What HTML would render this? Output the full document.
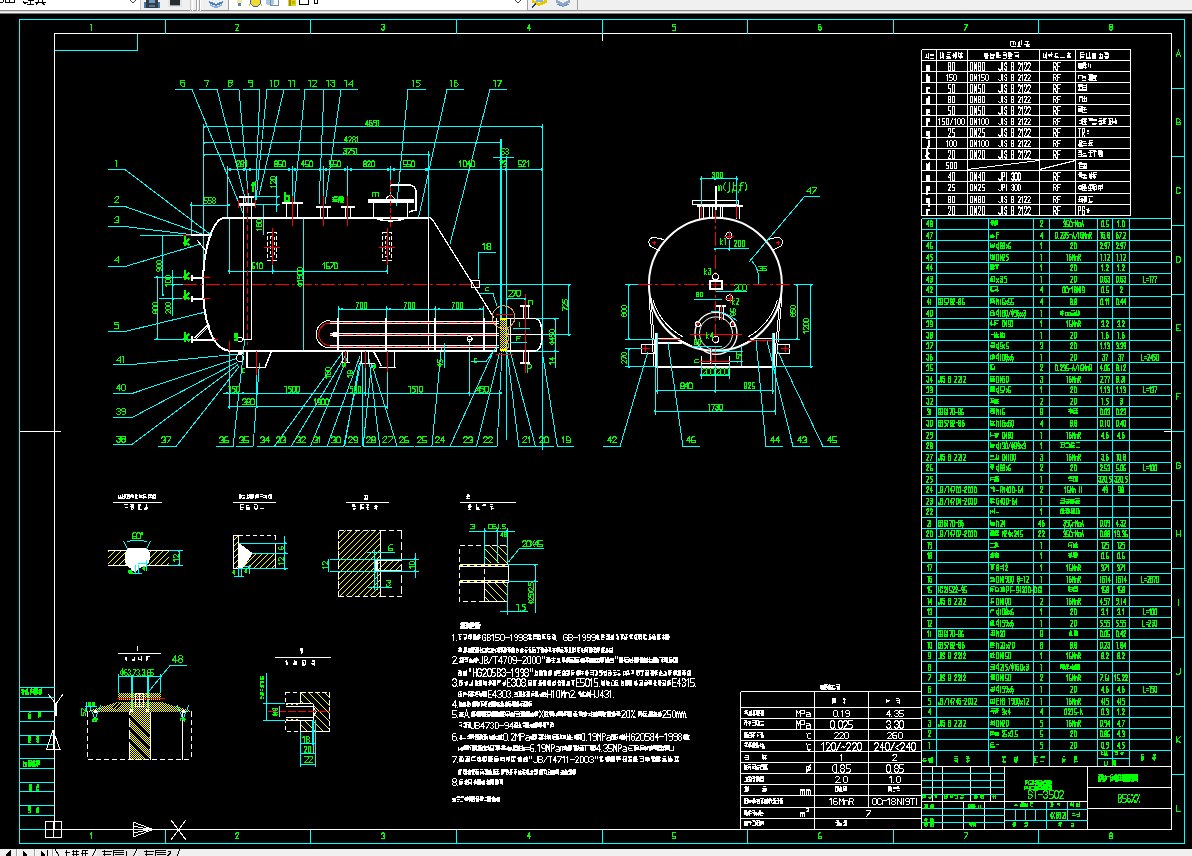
<!DOCTYPE html>
<html><head><meta charset="utf-8"><style>
html,body{margin:0;padding:0;background:#000;font-family:"Liberation Sans",sans-serif;width:1192px;height:856px;overflow:hidden}
svg{display:block}
</style></head><body>
<svg width="1192" height="856" viewBox="0 0 1192 856" shape-rendering="crispEdges" text-rendering="optimizeSpeed">
<defs><pattern id="h1" width="6" height="6" patternUnits="userSpaceOnUse"><rect x="0" y="5" width="1" height="1" fill="#ffff00"/><rect x="1" y="4" width="1" height="1" fill="#ffff00"/><rect x="2" y="3" width="1" height="1" fill="#ffff00"/><rect x="3" y="2" width="1" height="1" fill="#ffff00"/><rect x="4" y="1" width="1" height="1" fill="#ffff00"/><rect x="5" y="0" width="1" height="1" fill="#ffff00"/></pattern><pattern id="h2" width="8" height="8" patternUnits="userSpaceOnUse"><rect x="0" y="0" width="1" height="1" fill="#ffff00"/><rect x="1" y="1" width="1" height="1" fill="#ffff00"/><rect x="2" y="2" width="1" height="1" fill="#ffff00"/><rect x="3" y="3" width="1" height="1" fill="#ffff00"/><rect x="4" y="4" width="1" height="1" fill="#ffff00"/><rect x="5" y="5" width="1" height="1" fill="#ffff00"/><rect x="6" y="6" width="1" height="1" fill="#ffff00"/><rect x="7" y="7" width="1" height="1" fill="#ffff00"/></pattern><pattern id="h3" width="2" height="2" patternUnits="userSpaceOnUse"><rect x="0" y="0" width="1" height="1" fill="#ffff00"/><rect x="1" y="1" width="1" height="1" fill="#ffff00"/></pattern></defs>
<rect x="0" y="0" width="1192" height="856" fill="#000"/>
<rect x="0" y="0" width="1192" height="10" fill="#f0f0f0"/>
<rect x="0" y="0" width="140" height="10" fill="#ffffff"/>
<rect x="0" y="10" width="140" height="1" fill="#a0a0a0"/>
<rect x="0" y="10" width="1192" height="1" fill="#8c8c8c"/>
<rect x="0" y="11" width="1192" height="1" fill="#d8d8d8"/>
<rect x="0" y="12" width="1192" height="1" fill="#f4f4f4"/>
<rect x="0" y="13" width="1192" height="1" fill="#7a7a7a"/>
<path d="M0,2.5 h3 M3.5,0 v2 M5.5,0 v3 M5,2.5 h10 M9.5,0 v2 M14.5,0 v3 M23.5,1 v1 M23,2.5 h5 M24,4 l2,-1 M27,4.5 h7 M30.5,1 v3.5 M28,0 h6 M35,2.5 h11 M38.5,0 v2 M42.5,0 v2 M37.5,3 l-1.5,2 M42.5,3 l2,2" stroke="#000" stroke-width="1" fill="none"/>
<path d="M130,0 L133,3 L136,0" stroke="#404040" stroke-width="1" fill="none"/>
<rect x="140" y="0" width="1" height="10" fill="#c8c8c8"/>
<rect x="144" y="2" width="16" height="6" fill="#3d7ab8"/>
<rect x="146" y="0" width="12" height="5" fill="#3a3a3a"/>
<rect x="149" y="0" width="6" height="3" fill="#6a98c8"/>
<rect x="146" y="4" width="3" height="4" fill="#3a3a3a"/>
<rect x="155" y="4" width="3" height="4" fill="#3a3a3a"/>
<rect x="148" y="7" width="8" height="1" fill="#3a3a3a"/>
<rect x="168" y="0" width="14" height="7" fill="#dce4ec"/>
<rect x="170" y="0" width="10" height="5" fill="#2a2d30"/>
<rect x="170" y="5" width="10" height="1" fill="#90a0b0"/>
<rect x="190" y="0" width="1" height="11" fill="#c8c8c8"/>
<rect x="192" y="0" width="1" height="11" fill="#ffffff"/>
<rect x="196" y="0" width="1" height="11" fill="#a0a0a0"/>
<rect x="197" y="0" width="1" height="11" fill="#ffffff"/>
<rect x="199" y="0" width="1" height="11" fill="#a0a0a0"/>
<rect x="200" y="0" width="1" height="11" fill="#ffffff"/>
<path d="M209,2 L216,5 L223,2" stroke="#4a80c0" stroke-width="2" fill="none"/>
<path d="M210,5 L216,7.5 L222,5" stroke="#8ab0d8" stroke-width="1.5" fill="none"/>
<rect x="228" y="0" width="1" height="10" fill="#a0a0a0"/>
<rect x="229" y="0" width="298" height="10" fill="#ffffff"/>
<rect x="229" y="10" width="298" height="1" fill="#a0a0a0"/>
<rect x="237" y="0" width="5" height="3" fill="#f0e8a0"/>
<rect x="238" y="3" width="3" height="3" fill="#6080b0"/>
<circle cx="255.5" cy="1" r="5.5" fill="#f2d830" stroke="#2a6ab0" stroke-width="1"/>
<rect x="249" y="4" width="1" height="2" fill="#e0c000"/>
<rect x="261" y="4" width="1" height="2" fill="#e0c000"/>
<circle cx="270" cy="1" r="4.5" fill="#a8c8e0"/>
<rect x="270.5" y="-0.5" width="8" height="5.5" stroke="#7090b0" stroke-width="1" fill="none"/>
<rect x="288" y="0" width="8" height="6" fill="#e0d020"/>
<rect x="289" y="0" width="2" height="6" fill="#a09000"/>
<rect x="292" y="1" width="3" height="3" fill="#c0b000"/>
<rect x="299.5" y="-1" width="8.5" height="5.5" stroke="#000" stroke-width="1" fill="none"/>
<rect x="314.5" y="-1" width="3" height="4.5" stroke="#000" stroke-width="1" fill="none"/>
<path d="M515,0 L518,3 L521,0" stroke="#404040" stroke-width="1" fill="none"/>
<rect x="527" y="0" width="1" height="10" fill="#a0a0a0"/>
<path d="M532,1 L539,4.5 L547,1" stroke="#e8c800" stroke-width="3" fill="none"/>
<rect x="536" y="0" width="7" height="2" fill="#90b0d0"/>
<path d="M532,7.5 L536,3.5" stroke="#203070" stroke-width="1.5" fill="none"/>
<path d="M556,1 L563,4.5 L570,1" stroke="#90a8c8" stroke-width="2.5" fill="none"/>
<path d="M557,4 L563,6.5 L569,4" stroke="#7090b8" stroke-width="1" fill="none"/>
<rect x="577" y="0" width="1" height="11" fill="#a0a0a0"/>
<rect x="0" y="849" width="1192" height="7" fill="#f0f0f0"/>
<rect x="16" y="849" width="1" height="7" fill="#a0a0a0"/>
<rect x="17" y="849" width="1" height="7" fill="#ffffff"/>
<rect x="34" y="849" width="1" height="7" fill="#a0a0a0"/>
<rect x="35" y="849" width="1" height="7" fill="#ffffff"/>
<rect x="52" y="849" width="1" height="7" fill="#a0a0a0"/>
<rect x="53" y="849" width="1" height="7" fill="#ffffff"/>
<path d="M10,851 L6,855 L10,856 Z" stroke="#000" stroke-width="1" fill="#000"/>
<path d="M23,851 L27,855 L23,856 Z" stroke="#000" stroke-width="1" fill="#000"/>
<path d="M41,851 L45,855 L41,856 Z" stroke="#000" stroke-width="1" fill="#000"/>
<rect x="47" y="850" width="1" height="6" fill="#000"/>
<path d="M55,849 L59,856" stroke="#000" stroke-width="1" fill="none"/>
<path d="M64.5,852.5 h5 M66.5,850 v6 M71.5,851.5 h7 M73.5,850 v6 M76.5,850 v6 M71.5,854.5 h7 M81.5,850.5 h6 M82.5,850 v6 M85.5,850 v6 M80.5,853.5 h7" stroke="#000" stroke-width="1" fill="none"/>
<path d="M96,849 L92.5,856" stroke="#000" stroke-width="1" fill="none"/>
<rect x="97" y="849" width="37" height="7" fill="#e4e4e4"/>
<path d="M101.5,851.5 h10 M104.5,850 v6 M102.5,854.5 h8 M113.5,850.5 h10 M113.5,852.5 h10 M114.5,854.5 h9 M113.5,850 v6 M126.5,851 v5 M125.5,851.5 h1" stroke="#000" stroke-width="1" fill="none"/>
<path d="M137,849 L133.6,856" stroke="#000" stroke-width="1" fill="none"/>
<rect x="138" y="849" width="39" height="7" fill="#e4e4e4"/>
<path d="M143.5,851.5 h10 M146.5,850 v6 M144.5,854.5 h8 M155.5,850.5 h10 M155.5,852.5 h10 M156.5,854.5 h9 M155.5,850 v6 M167.5,851.5 h3 M170.5,851.5 v2 M167.5,856 l3,-3" stroke="#000" stroke-width="1" fill="none"/>
<path d="M180,849 L177,856" stroke="#000" stroke-width="1" fill="none"/>
<rect x="19.5" y="19.5" width="1165" height="824" stroke="#00ffff" stroke-width="1" fill="none"/>
<rect x="54.5" y="33.5" width="1117" height="796" stroke="#ffffff" stroke-width="1" fill="none"/>
<line x1="19.5" y1="431.5" x2="61" y2="431.5" stroke="#ffffff" stroke-width="1"/>
<line x1="602.5" y1="33" x2="602.5" y2="40.5" stroke="#ffffff" stroke-width="1"/>
<line x1="1164" y1="431.5" x2="1171" y2="431.5" stroke="#ffffff" stroke-width="1"/>
<polyline points="54.5,50.5 137.5,50.5 137.5,33.5" stroke="#00ffff" stroke-width="1" fill="none"/>
<line x1="165.5" y1="19.5" x2="165.5" y2="33.5" stroke="#00ffff" stroke-width="1"/>
<line x1="165.5" y1="829.5" x2="165.5" y2="843.5" stroke="#00ffff" stroke-width="1"/>
<line x1="310.5" y1="19.5" x2="310.5" y2="33.5" stroke="#00ffff" stroke-width="1"/>
<line x1="310.5" y1="829.5" x2="310.5" y2="843.5" stroke="#00ffff" stroke-width="1"/>
<line x1="456.5" y1="19.5" x2="456.5" y2="33.5" stroke="#00ffff" stroke-width="1"/>
<line x1="456.5" y1="829.5" x2="456.5" y2="843.5" stroke="#00ffff" stroke-width="1"/>
<line x1="602.5" y1="19.5" x2="602.5" y2="33.5" stroke="#00ffff" stroke-width="1"/>
<line x1="602.5" y1="829.5" x2="602.5" y2="843.5" stroke="#00ffff" stroke-width="1"/>
<line x1="747.5" y1="19.5" x2="747.5" y2="33.5" stroke="#00ffff" stroke-width="1"/>
<line x1="747.5" y1="829.5" x2="747.5" y2="843.5" stroke="#00ffff" stroke-width="1"/>
<line x1="893.5" y1="19.5" x2="893.5" y2="33.5" stroke="#00ffff" stroke-width="1"/>
<line x1="893.5" y1="829.5" x2="893.5" y2="843.5" stroke="#00ffff" stroke-width="1"/>
<line x1="1038.5" y1="19.5" x2="1038.5" y2="33.5" stroke="#00ffff" stroke-width="1"/>
<line x1="1038.5" y1="829.5" x2="1038.5" y2="843.5" stroke="#00ffff" stroke-width="1"/>
<path d="M90.5 24.5h1v6" stroke="#00ff00" fill="none" stroke-linecap="square"/>
<path d="M90.5 834.5l1-2v6" stroke="#00ff00" fill="none" stroke-linecap="square"/>
<path d="M235.5 24.5h1h2h0v2l-3 4h3" stroke="#00ff00" fill="none" stroke-linecap="square"/>
<path d="M235.5 834.5l1-2h2v2h0l-3 4h3" stroke="#00ff00" fill="none" stroke-linecap="square"/>
<path d="M381.5 24.5h1h1h1v2h-1h0M383.5 26.5l1 2h0l-1 2h-1l-1-2" stroke="#00ff00" fill="none" stroke-linecap="square"/>
<path d="M381.5 834.5l1-2h1l1 2h0l-1 2h0M383.5 836.5h1v2h-1h-1h-1" stroke="#00ff00" fill="none" stroke-linecap="square"/>
<path d="M529.5 30.5v-6l-2 4h3" stroke="#00ff00" fill="none" stroke-linecap="square"/>
<path d="M529.5 838.5v-6l-2 4h3" stroke="#00ff00" fill="none" stroke-linecap="square"/>
<path d="M675.5 24.5h-3v2h3v2h0v2h-3" stroke="#00ff00" fill="none" stroke-linecap="square"/>
<path d="M675.5 832.5h-3v4h3h0v2h0h-3" stroke="#00ff00" fill="none" stroke-linecap="square"/>
<path d="M820.5 24.5h-1h-1v4l1 2h1l1-2h0l-1-2h-2" stroke="#00ff00" fill="none" stroke-linecap="square"/>
<path d="M820.5 832.5h-1l-1 2v4h1h1h1v-2h-1h-2" stroke="#00ff00" fill="none" stroke-linecap="square"/>
<path d="M964.5 24.5h3h0l-3 6" stroke="#00ff00" fill="none" stroke-linecap="square"/>
<path d="M964.5 832.5h3v2l-3 4" stroke="#00ff00" fill="none" stroke-linecap="square"/>
<path d="M1110.5 24.5h1h1v2h-1h-1h-1v-2zM1110.5 26.5l-1 2h0l1 2h1l1-2h0l-1-2" stroke="#00ff00" fill="none" stroke-linecap="square"/>
<path d="M1110.5 832.5h1l1 2h0l-1 2h-1l-1-2h0zM1110.5 836.5h-1v2h1h1h1v-2h-1" stroke="#00ff00" fill="none" stroke-linecap="square"/>
<line x1="1171.5" y1="88.5" x2="1184.5" y2="88.5" stroke="#00ffff" stroke-width="1"/>
<line x1="1171.5" y1="156.5" x2="1184.5" y2="156.5" stroke="#00ffff" stroke-width="1"/>
<line x1="1171.5" y1="225.5" x2="1184.5" y2="225.5" stroke="#00ffff" stroke-width="1"/>
<line x1="1171.5" y1="294.5" x2="1184.5" y2="294.5" stroke="#00ffff" stroke-width="1"/>
<line x1="1171.5" y1="362.5" x2="1184.5" y2="362.5" stroke="#00ffff" stroke-width="1"/>
<line x1="1171.5" y1="431.5" x2="1184.5" y2="431.5" stroke="#00ffff" stroke-width="1"/>
<line x1="1171.5" y1="500.5" x2="1184.5" y2="500.5" stroke="#00ffff" stroke-width="1"/>
<line x1="1171.5" y1="568.5" x2="1184.5" y2="568.5" stroke="#00ffff" stroke-width="1"/>
<line x1="1171.5" y1="637.5" x2="1184.5" y2="637.5" stroke="#00ffff" stroke-width="1"/>
<line x1="1171.5" y1="706.5" x2="1184.5" y2="706.5" stroke="#00ffff" stroke-width="1"/>
<line x1="1171.5" y1="774.5" x2="1184.5" y2="774.5" stroke="#00ffff" stroke-width="1"/>
<path d="M1176.5 56.5l2-6l2 6M1176.5 54.5h2" stroke="#00ff00" fill="none" stroke-linecap="square"/>
<path d="M1176.5 122.5h2h2v2h-2h-2v-6h2l2 2h0l-2 2" stroke="#00ff00" fill="none" stroke-linecap="square"/>
<path d="M1180.5 188.5l-2-1h-2v1v4v1h2l2-1" stroke="#00ff00" fill="none" stroke-linecap="square"/>
<path d="M1176.5 256.5h2l2 1v4l-2 1h-2z" stroke="#00ff00" fill="none" stroke-linecap="square"/>
<path d="M1180.5 324.5h-4v6h4M1176.5 328.5h2" stroke="#00ff00" fill="none" stroke-linecap="square"/>
<path d="M1180.5 393.5h-4v6M1176.5 396.5h2" stroke="#00ff00" fill="none" stroke-linecap="square"/>
<path d="M1180.5 463.5l-2-1h-2v1v4v1h2l2-1v-2h-2" stroke="#00ff00" fill="none" stroke-linecap="square"/>
<path d="M1176.5 530.5v6M1180.5 530.5v6M1176.5 534.5h4" stroke="#00ff00" fill="none" stroke-linecap="square"/>
<path d="M1178.5 599.5v6" stroke="#00ff00" fill="none" stroke-linecap="square"/>
<path d="M1180.5 668.5v5l-2 1h-2v-1" stroke="#00ff00" fill="none" stroke-linecap="square"/>
<path d="M1176.5 736.5v6M1180.5 736.5l-4 4M1176.5 740.5l4 2" stroke="#00ff00" fill="none" stroke-linecap="square"/>
<path d="M1176.5 805.5v6h4" stroke="#00ff00" fill="none" stroke-linecap="square"/>
<line x1="921.5" y1="49.5" x2="1130.5" y2="49.5" stroke="#ffffff" stroke-width="1"/>
<line x1="921.5" y1="60.5" x2="1130.5" y2="60.5" stroke="#ffffff" stroke-width="1"/>
<line x1="921.5" y1="71.5" x2="1130.5" y2="71.5" stroke="#ffffff" stroke-width="1"/>
<line x1="921.5" y1="82.5" x2="1130.5" y2="82.5" stroke="#ffffff" stroke-width="1"/>
<line x1="921.5" y1="93.5" x2="1130.5" y2="93.5" stroke="#ffffff" stroke-width="1"/>
<line x1="921.5" y1="104.5" x2="1130.5" y2="104.5" stroke="#ffffff" stroke-width="1"/>
<line x1="921.5" y1="115.5" x2="1130.5" y2="115.5" stroke="#ffffff" stroke-width="1"/>
<line x1="921.5" y1="126.5" x2="1130.5" y2="126.5" stroke="#ffffff" stroke-width="1"/>
<line x1="921.5" y1="137.5" x2="1130.5" y2="137.5" stroke="#ffffff" stroke-width="1"/>
<line x1="921.5" y1="148.5" x2="1130.5" y2="148.5" stroke="#ffffff" stroke-width="1"/>
<line x1="921.5" y1="159.5" x2="1130.5" y2="159.5" stroke="#ffffff" stroke-width="1"/>
<line x1="921.5" y1="170.5" x2="1130.5" y2="170.5" stroke="#ffffff" stroke-width="1"/>
<line x1="921.5" y1="181.5" x2="1130.5" y2="181.5" stroke="#ffffff" stroke-width="1"/>
<line x1="921.5" y1="193.5" x2="1130.5" y2="193.5" stroke="#ffffff" stroke-width="1"/>
<line x1="921.5" y1="204.5" x2="1130.5" y2="204.5" stroke="#ffffff" stroke-width="1"/>
<line x1="921.5" y1="215.5" x2="1130.5" y2="215.5" stroke="#ffffff" stroke-width="1"/>
<line x1="921.5" y1="49.5" x2="921.5" y2="215.5" stroke="#ffffff" stroke-width="1"/>
<line x1="936.5" y1="49.5" x2="936.5" y2="215.5" stroke="#ffffff" stroke-width="1"/>
<line x1="967.5" y1="49.5" x2="967.5" y2="215.5" stroke="#ffffff" stroke-width="1"/>
<line x1="1039.5" y1="49.5" x2="1039.5" y2="215.5" stroke="#ffffff" stroke-width="1"/>
<line x1="1075.5" y1="49.5" x2="1075.5" y2="215.5" stroke="#ffffff" stroke-width="1"/>
<line x1="1130.5" y1="49.5" x2="1130.5" y2="215.5" stroke="#ffffff" stroke-width="1"/>
<path d="M1010.5 41.5h4M1011.5 46.5h4M1010.5 41.5v4M1013.5 42.5v2M1015.5 42.5v2M1017.5 46.5h3M1018.5 42.5v4M1019.5 41.5v4M1021.5 40.5v4M1025.5 41.5h3M1024.5 44.5h5M1026.5 45.5h2M1026.5 46.5h3M1027.5 42.5v2" stroke="#ffffff" fill="none" stroke-linecap="square"/>
<path d="M925.5 57.5h3M926.5 54.5v3M928.5 53.5v5M930.5 54.5h3M930.5 55.5h3M930.5 58.5h3" stroke="#ffffff" fill="none" stroke-linecap="square"/>
<path d="M940.5 57.5h3M940.5 52.5v6M942.5 52.5v5M943.5 53.5v5M947.5 52.5h3M947.5 54.5h2M946.5 56.5h3M947.5 57.5h3M946.5 58.5h4M953.5 54.5h3M952.5 55.5h3M953.5 56.5h3M953.5 53.5v4M955.5 52.5v6M956.5 52.5v5M958.5 53.5h4M959.5 56.5h3M959.5 57.5h3M958.5 52.5v4M960.5 53.5v5M961.5 52.5v4" stroke="#ffffff" fill="none" stroke-linecap="square"/>
<path d="M984.5 53.5h3M985.5 54.5h2M984.5 55.5h4M985.5 56.5h2M985.5 57.5h2M985.5 58.5h2M984.5 54.5v2M990.5 54.5h4M991.5 55.5h3M990.5 57.5h3M991.5 58.5h2M990.5 53.5v5M993.5 54.5v2M997.5 55.5h3M996.5 57.5h4M996.5 52.5v5M997.5 52.5v4M998.5 52.5v5M1003.5 52.5h2M1003.5 54.5h3M1003.5 55.5h2M1003.5 58.5h2M1006.5 53.5v4M1008.5 54.5h4M1008.5 58.5h3M1008.5 52.5v4M1009.5 52.5v5M1010.5 52.5v4M1011.5 53.5v3M1014.5 52.5h4M1015.5 55.5h3M1015.5 56.5h3M1018.5 54.5v3" stroke="#ffffff" fill="none" stroke-linecap="square"/>
<path d="M1043.5 57.5h3M1043.5 53.5v4M1045.5 54.5v2M1046.5 52.5v6M1048.5 54.5h4M1048.5 55.5h3M1049.5 54.5v2M1051.5 52.5v4M1055.5 53.5h2M1054.5 56.5h3M1055.5 57.5h3M1055.5 53.5v4M1060.5 57.5h4M1067.5 53.5h3M1067.5 55.5h2M1067.5 56.5h3M1067.5 57.5h3M1068.5 52.5v5M1069.5 54.5v3" stroke="#ffffff" fill="none" stroke-linecap="square"/>
<path d="M1080.5 52.5h3M1081.5 54.5h3M1081.5 56.5h2M1081.5 57.5h2M1080.5 52.5v6M1087.5 57.5h3M1087.5 58.5h3M1086.5 53.5v5M1089.5 52.5v6M1093.5 53.5h2M1092.5 54.5h3M1093.5 55.5h2M1093.5 56.5h2M1093.5 57.5h2M1093.5 58.5h2M1092.5 53.5v5M1093.5 54.5v4M1099.5 54.5h3M1099.5 57.5h2M1099.5 58.5h2M1100.5 53.5v3M1102.5 54.5v4M1104.5 52.5h3M1105.5 53.5h3M1105.5 54.5h2M1104.5 56.5h3M1105.5 57.5h2M1105.5 58.5h2M1108.5 53.5v4" stroke="#ffffff" fill="none" stroke-linecap="square"/>
<path d="M926.5 65.5h2v1v4M928.5 67.5h-2v1v2h2" stroke="#ffffff" stroke-width="2" fill="none" stroke-linecap="square"/>
<path d="M948.5 62.5h2v2v1v1h-2v-1v-1zM948.5 66.5v1v1v2h2v-2v-1v-1M952.5 62.5h2v2v4v2h-2v-2v-4z" stroke="#ffffff" fill="none" stroke-linecap="square"/>
<path d="M970.5 62.5h2v2v4v2h-2zM974.5 70.5v-8l2 8v-8M978.5 62.5h2v2v1v1h-2v-1v-1zM978.5 66.5v1v1v2h2v-2v-1v-1M982.5 62.5h2v2v4v2h-2v-2v-4z" stroke="#ffffff" fill="none" stroke-linecap="square"/>
<path d="M1001.5 62.5v6l-1 2h-1l-1-2M1002.5 62.5v8M1006.5 64.5v-2h-1l-1 2v1l1 1h1v1v1v2h-1l-1-2M1011.5 66.5h2v1v1v2h-2v-8h2v2v1v1M1018.5 64.5v-2h1l1 2v1l-2 5h2M1021.5 64.5l1-2v8M1024.5 64.5v-2h2v2v1l-2 5h2M1027.5 64.5l1-2h1l1 2v1l-3 5h3" stroke="#ffffff" fill="none" stroke-linecap="square"/>
<path d="M1053.5 70.5v-8h2l1 2v1l-1 1h-2M1054.5 66.5l2 4M1060.5 62.5h-3v8M1057.5 66.5h2" stroke="#ffffff" fill="none" stroke-linecap="square"/>
<path d="M1079.5 63.5h3M1079.5 64.5h2M1079.5 65.5h2M1079.5 66.5h3M1079.5 67.5h2M1079.5 68.5h3M1078.5 63.5v4M1081.5 64.5v2M1083.5 62.5h2M1082.5 63.5h3M1082.5 64.5h4M1083.5 65.5h2M1083.5 67.5h3M1082.5 63.5v4M1083.5 64.5v3M1085.5 64.5v4M1088.5 63.5v3M1090.5 64.5v3" stroke="#ffffff" fill="none" stroke-linecap="square"/>
<path d="M926.5 74.5v6h2v-1v-2v-1h-2" stroke="#ffffff" stroke-width="2" fill="none" stroke-linecap="square"/>
<path d="M946.5 75.5l1-1v6M952.5 74.5h-3v3h2l1 1v1l-1 1h-2M954.5 74.5h1l1 1v4l-1 1h-1l-1-1v-4z" stroke="#ffffff" fill="none" stroke-linecap="square"/>
<path d="M970.5 74.5h2v1v4v1h-2zM974.5 80.5v-6l2 6v-6M978.5 75.5l1-1v6M984.5 74.5h-3v3h2l1 1v1l-1 1h-2M986.5 74.5h1l1 1v4l-1 1h-1l-1-1v-4z" stroke="#ffffff" fill="none" stroke-linecap="square"/>
<path d="M1001.5 74.5v5l-1 1h-1l-1-1M1002.5 74.5v6M1006.5 75.5v-1h-1l-1 1v1l1 1h1v1v1v1h-1l-1-1M1011.5 77.5h2v1v1v1h-2v-6h2v1v1v1M1018.5 75.5v-1h1l1 1v1l-2 4h2M1021.5 75.5l1-1v6M1024.5 75.5v-1h2v1v1l-2 4h2M1027.5 75.5l1-1h1l1 1v1l-3 4h3" stroke="#ffffff" fill="none" stroke-linecap="square"/>
<path d="M1053.5 80.5v-6h2l1 1v1l-1 1h-2M1054.5 77.5l2 3M1060.5 74.5h-3v6M1057.5 77.5h2" stroke="#ffffff" fill="none" stroke-linecap="square"/>
<path d="M1078.5 75.5h3M1078.5 76.5v2M1082.5 75.5v3M1082.5 76.5h3M1083.5 77.5h2M1082.5 80.5h3M1085.5 76.5v2M1088.5 74.5h4M1088.5 79.5h3M1089.5 80.5h3M1089.5 74.5v5M1090.5 74.5v4M1091.5 75.5v4M1092.5 75.5h4M1093.5 76.5h3M1093.5 77.5h2M1093.5 78.5h2M1092.5 80.5h4M1092.5 76.5v3M1095.5 76.5v3" stroke="#ffffff" fill="none" stroke-linecap="square"/>
<path d="M928.5 87.5h-2v1v2v2h2" stroke="#ffffff" stroke-width="2" fill="none" stroke-linecap="square"/>
<path d="M950.5 84.5h-2v4h2v1v1v2h-2M952.5 84.5h2v2v4v2h-2v-2v-4z" stroke="#ffffff" fill="none" stroke-linecap="square"/>
<path d="M970.5 84.5h2v2v4v2h-2zM974.5 92.5v-8l2 8v-8M980.5 84.5h-2v4h2v1v1v2h-2M982.5 84.5h2v2v4v2h-2v-2v-4z" stroke="#ffffff" fill="none" stroke-linecap="square"/>
<path d="M1001.5 84.5v6l-1 2h-1l-1-2M1002.5 84.5v8M1006.5 86.5v-2h-1l-1 2v1l1 1h1v1v1v2h-1l-1-2M1011.5 88.5h2v1v1v2h-2v-8h2v2v1v1M1018.5 86.5v-2h1l1 2v1l-2 5h2M1021.5 86.5l1-2v8M1024.5 86.5v-2h2v2v1l-2 5h2M1027.5 86.5l1-2h1l1 2v1l-3 5h3" stroke="#ffffff" fill="none" stroke-linecap="square"/>
<path d="M1053.5 92.5v-8h2l1 2v1l-1 1h-2M1054.5 88.5l2 4M1060.5 84.5h-3v8M1057.5 88.5h2" stroke="#ffffff" fill="none" stroke-linecap="square"/>
<path d="M1078.5 84.5h4M1078.5 85.5h4M1078.5 86.5h4M1078.5 89.5h4M1078.5 90.5h4M1079.5 84.5v6M1082.5 85.5h4M1083.5 87.5h3M1083.5 89.5h2M1082.5 90.5h4M1082.5 85.5v4M1086.5 84.5v5" stroke="#ffffff" fill="none" stroke-linecap="square"/>
<path d="M928.5 96.5v6h-2v-1v-2v-1h2" stroke="#ffffff" stroke-width="2" fill="none" stroke-linecap="square"/>
<path d="M948.5 96.5h2v1v1v1h-2v-1v-1zM948.5 99.5v1v1v1h2v-1v-1v-1M952.5 96.5h2v1v4v1h-2v-1v-4z" stroke="#ffffff" fill="none" stroke-linecap="square"/>
<path d="M970.5 96.5h2v1v4v1h-2zM974.5 102.5v-6l2 6v-6M978.5 96.5h2v1v1v1h-2v-1v-1zM978.5 99.5v1v1v1h2v-1v-1v-1M982.5 96.5h2v1v4v1h-2v-1v-4z" stroke="#ffffff" fill="none" stroke-linecap="square"/>
<path d="M1001.5 96.5v5l-1 1h-1l-1-1M1002.5 96.5v6M1006.5 97.5v-1h-1l-1 1v1l1 1h1v1v1v1h-1l-1-1M1011.5 99.5h2v1v1v1h-2v-6h2v1v1v1M1018.5 97.5v-1h1l1 1v1l-2 4h2M1021.5 97.5l1-1v6M1024.5 97.5v-1h2v1v1l-2 4h2M1027.5 97.5l1-1h1l1 1v1l-3 4h3" stroke="#ffffff" fill="none" stroke-linecap="square"/>
<path d="M1053.5 102.5v-6h2l1 1v1l-1 1h-2M1054.5 99.5l2 3M1060.5 96.5h-3v6M1057.5 99.5h2" stroke="#ffffff" fill="none" stroke-linecap="square"/>
<path d="M1079.5 96.5h2M1079.5 97.5h3M1079.5 97.5v4M1082.5 98.5v2M1082.5 98.5h4M1083.5 101.5h3M1082.5 96.5v5M1084.5 96.5v5M1086.5 97.5v3" stroke="#ffffff" fill="none" stroke-linecap="square"/>
<path d="M926.5 111.5h2v-1v-1h-2v1v2v2h2" stroke="#ffffff" stroke-width="2" fill="none" stroke-linecap="square"/>
<path d="M950.5 106.5h-2v4h2v1v1v2h-2M952.5 106.5h2v2v4v2h-2v-2v-4z" stroke="#ffffff" fill="none" stroke-linecap="square"/>
<path d="M970.5 106.5h2v2v4v2h-2zM974.5 114.5v-8l2 8v-8M980.5 106.5h-2v4h2v1v1v2h-2M982.5 106.5h2v2v4v2h-2v-2v-4z" stroke="#ffffff" fill="none" stroke-linecap="square"/>
<path d="M1001.5 106.5v6l-1 2h-1l-1-2M1002.5 106.5v8M1006.5 108.5v-2h-1l-1 2v1l1 1h1v1v1v2h-1l-1-2M1011.5 110.5h2v1v1v2h-2v-8h2v2v1v1M1018.5 108.5v-2h1l1 2v1l-2 5h2M1021.5 108.5l1-2v8M1024.5 108.5v-2h2v2v1l-2 5h2M1027.5 108.5l1-2h1l1 2v1l-3 5h3" stroke="#ffffff" fill="none" stroke-linecap="square"/>
<path d="M1053.5 114.5v-8h2l1 2v1l-1 1h-2M1054.5 110.5l2 4M1060.5 106.5h-3v8M1057.5 110.5h2" stroke="#ffffff" fill="none" stroke-linecap="square"/>
<path d="M1078.5 106.5h3M1079.5 108.5h3M1078.5 109.5h4M1079.5 110.5h3M1078.5 111.5h3M1078.5 108.5v2M1081.5 106.5v5M1083.5 107.5h2M1083.5 109.5h3M1082.5 112.5h4M1082.5 106.5v6M1084.5 107.5v3" stroke="#ffffff" fill="none" stroke-linecap="square"/>
<path d="M928.5 118.5h-1l-1 1v5M926.5 120.5h2" stroke="#ffffff" stroke-width="2" fill="none" stroke-linecap="square"/>
<path d="M938.5 119.5l1-1v6M944.5 118.5h-2v3h2v1v1v1h-2M946.5 118.5h2v1v4v1h-2v-1v-4zM950.5 124.5l2-6M954.5 119.5l1-1v6M958.5 118.5h1l1 1v4l-1 1h-1l-1-1v-4zM962.5 118.5h1l1 1v4l-1 1h-1l-1-1v-4z" stroke="#ffffff" fill="none" stroke-linecap="square"/>
<path d="M970.5 118.5h2v1v4v1h-2zM974.5 124.5v-6l2 6v-6M978.5 119.5l1-1v6M982.5 118.5h1l1 1v4l-1 1h-1l-1-1v-4zM986.5 118.5h1l1 1v4l-1 1h-1l-1-1v-4z" stroke="#ffffff" fill="none" stroke-linecap="square"/>
<path d="M1001.5 118.5v5l-1 1h-1l-1-1M1002.5 118.5v6M1006.5 119.5v-1h-1l-1 1v1l1 1h1v1v1v1h-1l-1-1M1011.5 121.5h2v1v1v1h-2v-6h2v1v1v1M1018.5 119.5v-1h1l1 1v1l-2 4h2M1021.5 119.5l1-1v6M1024.5 119.5v-1h2v1v1l-2 4h2M1027.5 119.5l1-1h1l1 1v1l-3 4h3" stroke="#ffffff" fill="none" stroke-linecap="square"/>
<path d="M1053.5 124.5v-6h2l1 1v1l-1 1h-2M1054.5 121.5l2 3M1060.5 118.5h-3v6M1057.5 121.5h2" stroke="#ffffff" fill="none" stroke-linecap="square"/>
<path d="M1079.5 120.5h3M1079.5 123.5h3M1081.5 119.5v4M1082.5 119.5v4M1083.5 118.5h3M1083.5 119.5h3M1082.5 121.5h4M1083.5 124.5h3M1082.5 118.5v6M1084.5 119.5v3M1085.5 119.5v5M1088.5 118.5h4M1089.5 119.5h2M1089.5 120.5h3M1092.5 119.5h4M1093.5 120.5h3M1092.5 123.5h4M1092.5 124.5h3M1099.5 118.5h2M1099.5 120.5h3M1098.5 121.5h3M1099.5 123.5h3M1099.5 124.5h2M1101.5 120.5v3M1103.5 118.5h3M1103.5 119.5h2M1103.5 121.5h2M1103.5 123.5h2M1103.5 119.5v3M1104.5 118.5v4M1108.5 118.5h4M1109.5 121.5h2M1108.5 124.5h3M1109.5 118.5v6M1110.5 120.5v4M1112.5 119.5v4M1112.5 121.5h3M1113.5 122.5h3M1115.5 118.5v5M1116.5 120.5v3" stroke="#ffffff" fill="none" stroke-linecap="square"/>
<path d="M928.5 131.5h-2v1v1v1h2M928.5 131.5v6h-2" stroke="#ffffff" stroke-width="2" fill="none" stroke-linecap="square"/>
<path d="M948.5 130.5v-2h2v2v1l-2 5h2M954.5 128.5h-2v4h2v1v1v2h-2" stroke="#ffffff" fill="none" stroke-linecap="square"/>
<path d="M970.5 128.5h2v2v4v2h-2zM974.5 136.5v-8l2 8v-8M978.5 130.5v-2h2v2v1l-2 5h2M984.5 128.5h-2v4h2v1v1v2h-2" stroke="#ffffff" fill="none" stroke-linecap="square"/>
<path d="M1001.5 128.5v6l-1 2h-1l-1-2M1002.5 128.5v8M1006.5 130.5v-2h-1l-1 2v1l1 1h1v1v1v2h-1l-1-2M1011.5 132.5h2v1v1v2h-2v-8h2v2v1v1M1018.5 130.5v-2h1l1 2v1l-2 5h2M1021.5 130.5l1-2v8M1024.5 130.5v-2h2v2v1l-2 5h2M1027.5 130.5l1-2h1l1 2v1l-3 5h3" stroke="#ffffff" fill="none" stroke-linecap="square"/>
<path d="M1053.5 136.5v-8h2l1 2v1l-1 1h-2M1054.5 132.5l2 4M1060.5 128.5h-3v8M1057.5 132.5h2" stroke="#ffffff" fill="none" stroke-linecap="square"/>
<path d="M1078.5 128.5h2M1079.5 128.5v8M1082.5 136.5v-8h2v2v1v1h-2M1083.5 132.5l1 4" stroke="#ffffff" fill="none" stroke-linecap="square"/>
<path d="M1087.5 130.5h1M1087.5 131.5h1M1087.5 133.5h1" stroke="#ffffff" fill="none" stroke-linecap="square"/>
<path d="M928.5 142.5v4l-1 2h-1M928.5 140.5v1" stroke="#ffffff" stroke-width="2" fill="none" stroke-linecap="square"/>
<path d="M946.5 141.5l1-1v6M950.5 140.5h1l1 1v4l-1 1h-1l-1-1v-4zM954.5 140.5h1l1 1v4l-1 1h-1l-1-1v-4z" stroke="#ffffff" fill="none" stroke-linecap="square"/>
<path d="M970.5 140.5h2v1v4v1h-2zM974.5 146.5v-6l2 6v-6M978.5 141.5l1-1v6M982.5 140.5h1l1 1v4l-1 1h-1l-1-1v-4zM986.5 140.5h1l1 1v4l-1 1h-1l-1-1v-4z" stroke="#ffffff" fill="none" stroke-linecap="square"/>
<path d="M1001.5 140.5v5l-1 1h-1l-1-1M1002.5 140.5v6M1006.5 141.5v-1h-1l-1 1v1l1 1h1v1v1v1h-1l-1-1M1011.5 143.5h2v1v1v1h-2v-6h2v1v1v1M1018.5 141.5v-1h1l1 1v1l-2 4h2M1021.5 141.5l1-1v6M1024.5 141.5v-1h2v1v1l-2 4h2M1027.5 141.5l1-1h1l1 1v1l-3 4h3" stroke="#ffffff" fill="none" stroke-linecap="square"/>
<path d="M1053.5 146.5v-6h2l1 1v1l-1 1h-2M1054.5 143.5l2 3M1060.5 140.5h-3v6M1057.5 143.5h2" stroke="#ffffff" fill="none" stroke-linecap="square"/>
<path d="M1079.5 140.5h2M1079.5 142.5h3M1078.5 144.5h3M1078.5 145.5h4M1079.5 146.5h3M1079.5 141.5v5M1080.5 142.5v2M1081.5 141.5v5M1082.5 141.5h3M1083.5 143.5h3M1082.5 145.5h4M1089.5 140.5h3M1089.5 142.5h3M1088.5 143.5h3M1088.5 145.5h4M1089.5 140.5v4M1091.5 142.5v3" stroke="#ffffff" fill="none" stroke-linecap="square"/>
<path d="M926.5 150.5v8M928.5 153.5l-2 3M926.5 155.5l2 3" stroke="#ffffff" stroke-width="2" fill="none" stroke-linecap="square"/>
<path d="M948.5 152.5v-2h2v2v1l-2 5h2M952.5 150.5h2v2v4v2h-2v-2v-4z" stroke="#ffffff" fill="none" stroke-linecap="square"/>
<path d="M970.5 150.5h2v2v4v2h-2zM974.5 158.5v-8l2 8v-8M978.5 152.5v-2h2v2v1l-2 5h2M982.5 150.5h2v2v4v2h-2v-2v-4z" stroke="#ffffff" fill="none" stroke-linecap="square"/>
<path d="M1001.5 150.5v6l-1 2h-1l-1-2M1002.5 150.5v8M1006.5 152.5v-2h-1l-1 2v1l1 1h1v1v1v2h-1l-1-2M1011.5 154.5h2v1v1v2h-2v-8h2v2v1v1M1018.5 152.5v-2h1l1 2v1l-2 5h2M1021.5 152.5l1-2v8M1024.5 152.5v-2h2v2v1l-2 5h2M1027.5 152.5l1-2h1l1 2v1l-3 5h3" stroke="#ffffff" fill="none" stroke-linecap="square"/>
<path d="M1053.5 158.5v-8h2l1 2v1l-1 1h-2M1054.5 154.5l2 4M1060.5 150.5h-3v8M1057.5 154.5h2" stroke="#ffffff" fill="none" stroke-linecap="square"/>
<path d="M1078.5 150.5h3M1079.5 151.5h2M1078.5 152.5h3M1078.5 154.5h4M1078.5 156.5h4M1081.5 150.5v5M1083.5 153.5h2M1083.5 155.5h3M1083.5 156.5h3M1089.5 150.5h3M1088.5 152.5h4M1089.5 156.5h2M1090.5 150.5v5M1092.5 150.5h3M1093.5 151.5h3M1094.5 151.5v5M1098.5 150.5h3M1098.5 151.5h4M1098.5 152.5h4M1098.5 153.5h4M1098.5 154.5h4M1099.5 156.5h2M1099.5 151.5v4M1101.5 150.5v6M1102.5 152.5v4" stroke="#ffffff" fill="none" stroke-linecap="square"/>
<path d="M926.5 168.5v-4M926.5 165.5v-1l1 1v3M927.5 165.5l1-1v1v3" stroke="#ffffff" stroke-width="2" fill="none" stroke-linecap="square"/>
<path d="M948.5 162.5h-2v3h2v1v1v1h-2M950.5 162.5h2v1v4v1h-2v-1v-4zM954.5 162.5h2v1v4v1h-2v-1v-4z" stroke="#ffffff" fill="none" stroke-linecap="square"/>
<path d="M1079.5 162.5h2M1078.5 163.5h4M1079.5 164.5h3M1079.5 166.5h2M1079.5 168.5h3M1079.5 163.5v4M1082.5 163.5h3M1082.5 164.5h4M1082.5 166.5h3M1083.5 167.5h3M1083.5 168.5h2M1084.5 164.5v3M1086.5 163.5v5" stroke="#ffffff" fill="none" stroke-linecap="square"/>
<line x1="967.5" y1="169.5" x2="1039.5" y2="160.5" stroke="#ffffff" stroke-width="1"/>
<line x1="1039.5" y1="169.5" x2="1075.5" y2="160.5" stroke="#ffffff" stroke-width="1"/>
<path d="M926.5 180.5v-5M926.5 176.5v-1h2v1v4" stroke="#ffffff" stroke-width="2" fill="none" stroke-linecap="square"/>
<path d="M950.5 180.5v-8l-2 5h2M952.5 172.5h2v2v4v2h-2v-2v-4z" stroke="#ffffff" fill="none" stroke-linecap="square"/>
<path d="M970.5 172.5h2v2v4v2h-2zM974.5 180.5v-8l2 8v-8M980.5 180.5v-8l-2 5h2M982.5 172.5h2v2v4v2h-2v-2v-4z" stroke="#ffffff" fill="none" stroke-linecap="square"/>
<path d="M1001.5 172.5v6l-1 2h-1l-1-2M1002.5 180.5v-8h2v2v1v1h-2M1006.5 172.5v8M1011.5 174.5l1-2h1v2v1v1h-1M1013.5 176.5v1v1v2h-1l-1-2M1015.5 172.5h1l1 2v4l-1 2h-1l-1-2v-4zM1018.5 172.5h1l1 2v4l-1 2h-1v-2v-4z" stroke="#ffffff" fill="none" stroke-linecap="square"/>
<path d="M1053.5 180.5v-8h2l1 2v1l-1 1h-2M1054.5 176.5l2 4M1060.5 172.5h-3v8M1057.5 176.5h2" stroke="#ffffff" fill="none" stroke-linecap="square"/>
<path d="M1078.5 174.5h3M1079.5 175.5h3M1079.5 172.5v4M1080.5 172.5v4M1081.5 172.5v5M1082.5 174.5h3M1082.5 175.5h4M1082.5 177.5h4M1083.5 178.5h3M1084.5 174.5v2M1089.5 176.5h3M1089.5 173.5v4M1090.5 174.5v4M1091.5 172.5v6M1093.5 172.5h3M1092.5 174.5h4M1093.5 176.5h2M1093.5 177.5h2M1093.5 173.5v3M1094.5 174.5v4" stroke="#ffffff" fill="none" stroke-linecap="square"/>
<path d="M926.5 193.5v-7h2v1v1v1h-2" stroke="#ffffff" stroke-width="2" fill="none" stroke-linecap="square"/>
<path d="M948.5 185.5v-1h2v1v1l-2 4h2M954.5 184.5h-2v3h2v1v1v1h-2" stroke="#ffffff" fill="none" stroke-linecap="square"/>
<path d="M970.5 184.5h2v1v4v1h-2zM974.5 190.5v-6l2 6v-6M978.5 185.5v-1h2v1v1l-2 4h2M984.5 184.5h-2v3h2v1v1v1h-2" stroke="#ffffff" fill="none" stroke-linecap="square"/>
<path d="M1001.5 184.5v5l-1 1h-1l-1-1M1002.5 190.5v-6h2v1v1v1h-2M1006.5 184.5v6M1011.5 185.5l1-1h1v1v1v1h-1M1013.5 187.5v1v1v1h-1l-1-1M1015.5 184.5h1l1 1v4l-1 1h-1l-1-1v-4zM1018.5 184.5h1l1 1v4l-1 1h-1v-1v-4z" stroke="#ffffff" fill="none" stroke-linecap="square"/>
<path d="M1053.5 190.5v-6h2l1 1v1l-1 1h-2M1054.5 187.5l2 3M1060.5 184.5h-3v6M1057.5 187.5h2" stroke="#ffffff" fill="none" stroke-linecap="square"/>
<path d="M1079.5 185.5h2M1078.5 186.5h4M1078.5 188.5h4M1079.5 189.5h3M1078.5 186.5v2M1081.5 185.5v3M1083.5 184.5h2M1083.5 186.5h2M1083.5 187.5h3M1082.5 188.5h4M1082.5 190.5h4M1082.5 184.5v6M1084.5 185.5v5M1085.5 184.5v4M1089.5 184.5h3M1089.5 185.5h2M1089.5 188.5h3M1088.5 190.5h3M1088.5 186.5v2M1090.5 185.5v4M1093.5 184.5h2M1092.5 186.5h4M1093.5 189.5h3M1092.5 185.5v3M1093.5 185.5v4M1094.5 186.5v4M1096.5 185.5v3M1098.5 185.5h3M1098.5 186.5h4M1099.5 188.5h2M1098.5 186.5v3M1100.5 185.5v5M1102.5 184.5v4" stroke="#ffffff" fill="none" stroke-linecap="square"/>
<path d="M928.5 205.5v-7h-2v1v1v1h2" stroke="#ffffff" stroke-width="2" fill="none" stroke-linecap="square"/>
<path d="M948.5 196.5h2v1v1v1h-2v-1v-1zM948.5 199.5v1v1v1h2v-1v-1v-1M952.5 196.5h2v1v4v1h-2v-1v-4z" stroke="#ffffff" fill="none" stroke-linecap="square"/>
<path d="M970.5 196.5h2v1v4v1h-2zM974.5 202.5v-6l2 6v-6M978.5 196.5h2v1v1v1h-2v-1v-1zM978.5 199.5v1v1v1h2v-1v-1v-1M982.5 196.5h2v1v4v1h-2v-1v-4z" stroke="#ffffff" fill="none" stroke-linecap="square"/>
<path d="M1001.5 196.5v5l-1 1h-1l-1-1M1002.5 196.5v6M1006.5 197.5v-1h-1l-1 1v1l1 1h1v1v1v1h-1l-1-1M1011.5 199.5h2v1v1v1h-2v-6h2v1v1v1M1018.5 197.5v-1h1l1 1v1l-2 4h2M1021.5 197.5l1-1v6M1024.5 197.5v-1h2v1v1l-2 4h2M1027.5 197.5l1-1h1l1 1v1l-3 4h3" stroke="#ffffff" fill="none" stroke-linecap="square"/>
<path d="M1053.5 202.5v-6h2l1 1v1l-1 1h-2M1054.5 199.5l2 3M1060.5 196.5h-3v6M1057.5 199.5h2" stroke="#ffffff" fill="none" stroke-linecap="square"/>
<path d="M1079.5 196.5h3M1078.5 199.5h4M1078.5 201.5h3M1079.5 197.5v3M1081.5 198.5v2M1082.5 198.5v3M1083.5 196.5h3M1082.5 199.5h4M1082.5 200.5h4M1082.5 198.5v4M1084.5 197.5v5M1085.5 197.5v4M1086.5 196.5v5M1088.5 196.5h4M1089.5 201.5h3M1088.5 202.5h3M1089.5 198.5v2" stroke="#ffffff" fill="none" stroke-linecap="square"/>
<path d="M926.5 214.5v-5M926.5 210.5v-1h2" stroke="#ffffff" stroke-width="2" fill="none" stroke-linecap="square"/>
<path d="M948.5 208.5v-2h2v2v1l-2 5h2M952.5 206.5h2v2v4v2h-2v-2v-4z" stroke="#ffffff" fill="none" stroke-linecap="square"/>
<path d="M970.5 206.5h2v2v4v2h-2zM974.5 214.5v-8l2 8v-8M978.5 208.5v-2h2v2v1l-2 5h2M982.5 206.5h2v2v4v2h-2v-2v-4z" stroke="#ffffff" fill="none" stroke-linecap="square"/>
<path d="M1001.5 206.5v6l-1 2h-1l-1-2M1002.5 206.5v8M1006.5 208.5v-2h-1l-1 2v1l1 1h1v1v1v2h-1l-1-2M1011.5 210.5h2v1v1v2h-2v-8h2v2v1v1M1018.5 208.5v-2h1l1 2v1l-2 5h2M1021.5 208.5l1-2v8M1024.5 208.5v-2h2v2v1l-2 5h2M1027.5 208.5l1-2h1l1 2v1l-3 5h3" stroke="#ffffff" fill="none" stroke-linecap="square"/>
<path d="M1053.5 214.5v-8h2l1 2v1l-1 1h-2M1054.5 210.5l2 4M1060.5 206.5h-3v8M1057.5 210.5h2" stroke="#ffffff" fill="none" stroke-linecap="square"/>
<path d="M1078.5 214.5v-8h2v2v1v1h-2M1084.5 208.5v-2h-2v2v4v2h2v-2v-2h-1" stroke="#ffffff" fill="none" stroke-linecap="square"/>
<path d="M1086.5 209.5h2M1087.5 210.5h2M1087.5 212.5h1M1087.5 209.5v2M1088.5 208.5v4" stroke="#ffffff" fill="none" stroke-linecap="square"/>
<line x1="921.5" y1="218.5" x2="1171.5" y2="218.5" stroke="#00ffff" stroke-width="1"/>
<line x1="921.5" y1="229.5" x2="1171.5" y2="229.5" stroke="#00ffff" stroke-width="1"/>
<line x1="921.5" y1="240.5" x2="1171.5" y2="240.5" stroke="#00ffff" stroke-width="1"/>
<line x1="921.5" y1="251.5" x2="1171.5" y2="251.5" stroke="#00ffff" stroke-width="1"/>
<line x1="921.5" y1="262.5" x2="1171.5" y2="262.5" stroke="#00ffff" stroke-width="1"/>
<line x1="921.5" y1="273.5" x2="1171.5" y2="273.5" stroke="#00ffff" stroke-width="1"/>
<line x1="921.5" y1="284.5" x2="1171.5" y2="284.5" stroke="#00ffff" stroke-width="1"/>
<line x1="921.5" y1="296.5" x2="1171.5" y2="296.5" stroke="#00ffff" stroke-width="1"/>
<line x1="921.5" y1="307.5" x2="1171.5" y2="307.5" stroke="#00ffff" stroke-width="1"/>
<line x1="921.5" y1="318.5" x2="1171.5" y2="318.5" stroke="#00ffff" stroke-width="1"/>
<line x1="921.5" y1="329.5" x2="1171.5" y2="329.5" stroke="#00ffff" stroke-width="1"/>
<line x1="921.5" y1="340.5" x2="1171.5" y2="340.5" stroke="#00ffff" stroke-width="1"/>
<line x1="921.5" y1="351.5" x2="1171.5" y2="351.5" stroke="#00ffff" stroke-width="1"/>
<line x1="921.5" y1="362.5" x2="1171.5" y2="362.5" stroke="#00ffff" stroke-width="1"/>
<line x1="921.5" y1="373.5" x2="1171.5" y2="373.5" stroke="#00ffff" stroke-width="1"/>
<line x1="921.5" y1="384.5" x2="1171.5" y2="384.5" stroke="#00ffff" stroke-width="1"/>
<line x1="921.5" y1="395.5" x2="1171.5" y2="395.5" stroke="#00ffff" stroke-width="1"/>
<line x1="921.5" y1="406.5" x2="1171.5" y2="406.5" stroke="#00ffff" stroke-width="1"/>
<line x1="921.5" y1="417.5" x2="1171.5" y2="417.5" stroke="#00ffff" stroke-width="1"/>
<line x1="921.5" y1="429.5" x2="1171.5" y2="429.5" stroke="#00ffff" stroke-width="1"/>
<line x1="921.5" y1="440.5" x2="1171.5" y2="440.5" stroke="#00ffff" stroke-width="1"/>
<line x1="921.5" y1="451.5" x2="1171.5" y2="451.5" stroke="#00ffff" stroke-width="1"/>
<line x1="921.5" y1="462.5" x2="1171.5" y2="462.5" stroke="#00ffff" stroke-width="1"/>
<line x1="921.5" y1="473.5" x2="1171.5" y2="473.5" stroke="#00ffff" stroke-width="1"/>
<line x1="921.5" y1="484.5" x2="1171.5" y2="484.5" stroke="#00ffff" stroke-width="1"/>
<line x1="921.5" y1="495.5" x2="1171.5" y2="495.5" stroke="#00ffff" stroke-width="1"/>
<line x1="921.5" y1="506.5" x2="1171.5" y2="506.5" stroke="#00ffff" stroke-width="1"/>
<line x1="921.5" y1="517.5" x2="1171.5" y2="517.5" stroke="#00ffff" stroke-width="1"/>
<line x1="921.5" y1="528.5" x2="1171.5" y2="528.5" stroke="#00ffff" stroke-width="1"/>
<line x1="921.5" y1="539.5" x2="1171.5" y2="539.5" stroke="#00ffff" stroke-width="1"/>
<line x1="921.5" y1="550.5" x2="1171.5" y2="550.5" stroke="#00ffff" stroke-width="1"/>
<line x1="921.5" y1="562.5" x2="1171.5" y2="562.5" stroke="#00ffff" stroke-width="1"/>
<line x1="921.5" y1="573.5" x2="1171.5" y2="573.5" stroke="#00ffff" stroke-width="1"/>
<line x1="921.5" y1="584.5" x2="1171.5" y2="584.5" stroke="#00ffff" stroke-width="1"/>
<line x1="921.5" y1="595.5" x2="1171.5" y2="595.5" stroke="#00ffff" stroke-width="1"/>
<line x1="921.5" y1="606.5" x2="1171.5" y2="606.5" stroke="#00ffff" stroke-width="1"/>
<line x1="921.5" y1="617.5" x2="1171.5" y2="617.5" stroke="#00ffff" stroke-width="1"/>
<line x1="921.5" y1="628.5" x2="1171.5" y2="628.5" stroke="#00ffff" stroke-width="1"/>
<line x1="921.5" y1="639.5" x2="1171.5" y2="639.5" stroke="#00ffff" stroke-width="1"/>
<line x1="921.5" y1="650.5" x2="1171.5" y2="650.5" stroke="#00ffff" stroke-width="1"/>
<line x1="921.5" y1="661.5" x2="1171.5" y2="661.5" stroke="#00ffff" stroke-width="1"/>
<line x1="921.5" y1="672.5" x2="1171.5" y2="672.5" stroke="#00ffff" stroke-width="1"/>
<line x1="921.5" y1="683.5" x2="1171.5" y2="683.5" stroke="#00ffff" stroke-width="1"/>
<line x1="921.5" y1="695.5" x2="1171.5" y2="695.5" stroke="#00ffff" stroke-width="1"/>
<line x1="921.5" y1="706.5" x2="1171.5" y2="706.5" stroke="#00ffff" stroke-width="1"/>
<line x1="921.5" y1="717.5" x2="1171.5" y2="717.5" stroke="#00ffff" stroke-width="1"/>
<line x1="921.5" y1="728.5" x2="1171.5" y2="728.5" stroke="#00ffff" stroke-width="1"/>
<line x1="921.5" y1="739.5" x2="1171.5" y2="739.5" stroke="#00ffff" stroke-width="1"/>
<line x1="921.5" y1="750.5" x2="1171.5" y2="750.5" stroke="#00ffff" stroke-width="1"/>
<line x1="936.5" y1="218.5" x2="936.5" y2="766.5" stroke="#00ffff" stroke-width="1"/>
<line x1="988.5" y1="218.5" x2="988.5" y2="766.5" stroke="#00ffff" stroke-width="1"/>
<line x1="1033.5" y1="218.5" x2="1033.5" y2="766.5" stroke="#00ffff" stroke-width="1"/>
<line x1="1049.5" y1="218.5" x2="1049.5" y2="766.5" stroke="#00ffff" stroke-width="1"/>
<line x1="1097.5" y1="218.5" x2="1097.5" y2="766.5" stroke="#00ffff" stroke-width="1"/>
<line x1="1112.5" y1="218.5" x2="1112.5" y2="766.5" stroke="#00ffff" stroke-width="1"/>
<line x1="1129.5" y1="218.5" x2="1129.5" y2="766.5" stroke="#00ffff" stroke-width="1"/>
<line x1="921.5" y1="218.5" x2="921.5" y2="766.5" stroke="#ffffff" stroke-width="1"/>
<line x1="1097.5" y1="758.5" x2="1129.5" y2="758.5" stroke="#00ffff" stroke-width="1"/>
<path d="M928.5 226.5v-6l-2 4h2M930.5 220.5h1l1 2h0l-1 2h-1v-2h0zM930.5 224.5h0v2h0h1h1v-2h-1" stroke="#00ff00" fill="none" stroke-linecap="square"/>
<path d="M991.5 220.5h2M991.5 221.5h2M990.5 222.5h4M991.5 223.5h2M991.5 222.5v2M992.5 222.5v3M994.5 221.5v4M995.5 220.5h2M995.5 222.5h2M994.5 223.5h3M994.5 224.5h3M995.5 220.5v5M996.5 221.5v3M997.5 220.5v4" stroke="#00ff00" fill="none" stroke-linecap="square"/>
<path d="M1040.5 222.5v-2h2v2h0l-2 4h2" stroke="#00ff00" fill="none" stroke-linecap="square"/>
<path d="M1063.5 222.5l1-2h0l1 2h0l-1 2h0M1064.5 224.5h1v2h-1h0h-1M1068.5 220.5h-2v4h2h0v2h0h-2M1071.5 222.5l-1-2h0l-1 2v4h1h0h1M1072.5 226.5v-4M1072.5 224.5v-2h2M1075.5 226.5v-6l1 4l1-4v6M1078.5 222.5h2v2v2h0h-2h0v-2zM1081.5 226.5l1-6l1 6M1082.5 224.5h0" stroke="#00ff00" fill="none" stroke-linecap="square"/>
<path d="M1102.5 220.5h1v2v4h0h-1h-1v-4zM1104.5 226.5h0M1108.5 220.5h-2v4h1h1v2h-1h-1" stroke="#00ff00" fill="none" stroke-linecap="square"/>
<path d="M1117.5 222.5l1-2v6M1120.5 226.5h0M1122.5 220.5h1l1 2v4h-1h-1h0v-4z" stroke="#00ff00" fill="none" stroke-linecap="square"/>
<path d="M928.5 238.5v-6l-2 4h2M930.5 232.5h2h0l-2 6" stroke="#00ff00" fill="none" stroke-linecap="square"/>
<path d="M990.5 235.5h3M990.5 236.5h4M990.5 237.5h3M992.5 234.5v3" stroke="#00ff00" fill="none" stroke-linecap="square"/>
<path d="M998.5 232.5h-2v6M996.5 234.5h2" stroke="#00ff00" fill="none" stroke-linecap="square"/>
<path d="M1042.5 238.5v-6l-2 4h2" stroke="#00ff00" fill="none" stroke-linecap="square"/>
<path d="M1055.5 232.5h1h1v4l-1 2h-1v-2v-4zM1058.5 238.5h0M1060.5 232.5h0h1h1v2l-2 4h2M1063.5 232.5h0h1h1v2h-1h0M1064.5 234.5l1 2h0l-1 2h-1v-2M1068.5 232.5h-2v2h1l1 2h0l-1 2h-1M1069.5 234.5h2M1072.5 238.5l1-6l1 6M1072.5 236.5h1M1075.5 238.5l2-6M1078.5 232.5h0v6M1082.5 232.5h-1h-1v4l1 2h1v-2h0v-2h-2M1083.5 238.5v-6l1 2l1-2v6M1086.5 238.5v-4M1086.5 234.5h1h1h0v4M1089.5 238.5v-6h2h0v2h0h-2M1090.5 234.5l1 4" stroke="#00ff00" fill="none" stroke-linecap="square"/>
<path d="M1100.5 232.5h1v6M1104.5 232.5h-1h-1v4l1 2h1v-2h0v-2h-2M1105.5 238.5h0M1108.5 232.5h1h0v2h0h-1h-1v-2zM1108.5 234.5l-1 2h0l1 2h1v-2h0v-2" stroke="#00ff00" fill="none" stroke-linecap="square"/>
<path d="M1117.5 232.5h-1h0v4v2h1l1-2h0l-1-2h-1M1119.5 232.5h2h0l-2 6M1122.5 238.5h0M1123.5 232.5h1h1h0v2l-2 4h2" stroke="#00ff00" fill="none" stroke-linecap="square"/>
<path d="M928.5 248.5v-6l-2 4h2M931.5 242.5h-1v2v4h0h1h1v-2h-1h-1" stroke="#00ff00" fill="none" stroke-linecap="square"/>
<path d="M991.5 245.5h3M991.5 246.5h3M990.5 247.5h3M990.5 243.5v4M992.5 244.5v3M994.5 243.5v3" stroke="#00ff00" fill="none" stroke-linecap="square"/>
<path d="M997.5 244.5h1h0v2v2h-1l-1-2v-2zM998.5 242.5v7M1000.5 242.5h1l1 2h0l-1 2h-1v-2h0zM1000.5 246.5h0v2h0h1h1v-2h-1M1004.5 246.5h-1l-1-2h0l1-2h1v2v4h0h-1M1006.5 244.5l2 4M1008.5 244.5l-2 4M1010.5 242.5h-1l-1 2v4h1h1h0v-2h0h-2" stroke="#00ff00" fill="none" stroke-linecap="square"/>
<path d="M1040.5 244.5l1-2v6" stroke="#00ff00" fill="none" stroke-linecap="square"/>
<path d="M1070.5 244.5l1-2h1v2h0l-2 4h2M1074.5 242.5h1l1 2v4h-1h-1h0v-4z" stroke="#00ff00" fill="none" stroke-linecap="square"/>
<path d="M1100.5 244.5v-2h1l1 2h0l-2 4h2M1103.5 248.5h0M1106.5 246.5h-1l-1-2h0l1-2h1v2v4h0h-1M1107.5 242.5h2v2l-1 4" stroke="#00ff00" fill="none" stroke-linecap="square"/>
<path d="M1116.5 244.5v-2h1l1 2h0l-2 4h2M1119.5 248.5h0M1122.5 246.5h-1l-1-2h0l1-2h1v2v4h0h-1M1123.5 242.5h2v2l-1 4" stroke="#00ff00" fill="none" stroke-linecap="square"/>
<path d="M928.5 260.5v-6l-2 4h2M932.5 254.5h-2v2h1l1 2h0l-1 2h-1" stroke="#00ff00" fill="none" stroke-linecap="square"/>
<path d="M991.5 255.5h2M991.5 259.5h3M990.5 254.5v4M992.5 254.5v5M993.5 255.5v3M994.5 254.5v4" stroke="#00ff00" fill="none" stroke-linecap="square"/>
<path d="M996.5 254.5h2h0v4v2h-2zM1000.5 260.5v-6l2 6v-6M1002.5 254.5h1h1h0v2l-2 4h2M1008.5 254.5h-2v2h1l1 2h0l-1 2h-1" stroke="#00ff00" fill="none" stroke-linecap="square"/>
<path d="M1040.5 254.5h1v6" stroke="#00ff00" fill="none" stroke-linecap="square"/>
<path d="M1066.5 254.5h1v6M1070.5 254.5h-1h0v4v2h1l1-2h0l-1-2h-1M1072.5 260.5v-6l1 2l1-2v6M1075.5 260.5v-4M1075.5 256.5h0h1h1v4M1078.5 260.5v-6h1h1v2h-1h-1M1079.5 256.5l1 4" stroke="#00ff00" fill="none" stroke-linecap="square"/>
<path d="M1100.5 254.5h1v6M1103.5 260.5h0M1104.5 254.5h1v6M1107.5 254.5h0h1h1v2l-2 4h2" stroke="#00ff00" fill="none" stroke-linecap="square"/>
<path d="M1116.5 254.5h1v6M1119.5 260.5h0M1120.5 254.5h1v6M1123.5 254.5h0h1h1v2l-2 4h2" stroke="#00ff00" fill="none" stroke-linecap="square"/>
<path d="M928.5 270.5v-6l-2 4h2M931.5 270.5v-6l-1 4h2" stroke="#00ff00" fill="none" stroke-linecap="square"/>
<path d="M991.5 264.5h2M990.5 265.5h4M990.5 266.5h4M990.5 267.5h3M991.5 268.5h3M990.5 269.5h3M990.5 264.5v5M995.5 264.5h3M995.5 265.5h3M996.5 265.5v3M997.5 265.5v3" stroke="#00ff00" fill="none" stroke-linecap="square"/>
<path d="M1040.5 266.5l1-2v6" stroke="#00ff00" fill="none" stroke-linecap="square"/>
<path d="M1070.5 266.5l1-2h1v2h0l-2 4h2M1074.5 264.5h1l1 2v4h-1h-1h0v-4z" stroke="#00ff00" fill="none" stroke-linecap="square"/>
<path d="M1101.5 266.5l1-2v6M1104.5 270.5h0M1106.5 266.5v-2h1l1 2h0l-2 4h2" stroke="#00ff00" fill="none" stroke-linecap="square"/>
<path d="M1117.5 266.5l1-2v6M1120.5 270.5h0M1122.5 266.5v-2h1l1 2h0l-2 4h2" stroke="#00ff00" fill="none" stroke-linecap="square"/>
<path d="M928.5 282.5v-6l-2 4h2M930.5 276.5h0h1h1v2h-1h-1M931.5 278.5l1 2h0l-1 2h-1v-2" stroke="#00ff00" fill="none" stroke-linecap="square"/>
<path d="M991.5 276.5h3M990.5 281.5h4M990.5 278.5v2M991.5 276.5v4M992.5 278.5v2M994.5 277.5v4" stroke="#00ff00" fill="none" stroke-linecap="square"/>
<path d="M996.5 278.5l2 4M998.5 278.5l-2 4M1000.5 276.5h0h1h1v2h-1h-1M1001.5 278.5l1 2h0l-1 2h-1v-2M1002.5 282.5h0M1006.5 276.5h-2v2h2v2h0v2h-2" stroke="#00ff00" fill="none" stroke-linecap="square"/>
<path d="M1040.5 276.5h1v6" stroke="#00ff00" fill="none" stroke-linecap="square"/>
<path d="M1070.5 276.5h1h1h0v2l-2 4h2M1074.5 276.5h1h1v4l-1 2h-1v-2v-4z" stroke="#00ff00" fill="none" stroke-linecap="square"/>
<path d="M1100.5 276.5h1h1v4l-1 2h-1v-2v-4zM1103.5 282.5h0M1106.5 276.5h-1h-1v4l1 2h1v-2h0v-2h-2M1107.5 276.5h1h1h0v2h0h-1M1109.5 278.5v2h0v2h-1l-1-2" stroke="#00ff00" fill="none" stroke-linecap="square"/>
<path d="M1116.5 276.5h1h1v4l-1 2h-1v-2v-4zM1119.5 282.5h0M1122.5 276.5h-1h-1v4l1 2h1v-2h0v-2h-2M1123.5 276.5h1h1h0v2h0h-1M1125.5 278.5v2h0v2h-1l-1-2" stroke="#00ff00" fill="none" stroke-linecap="square"/>
<path d="M1143.5 276.5v6h2M1146.5 278.5h2M1146.5 280.5h2M1149.5 276.5h1v6M1151.5 276.5h2h0l-1 6M1154.5 276.5h2h0l-1 6" stroke="#00ff00" fill="none" stroke-linecap="square"/>
<path d="M928.5 292.5v-6l-2 4h2M930.5 288.5v-2h1l1 2h0l-2 4h2" stroke="#00ff00" fill="none" stroke-linecap="square"/>
<path d="M991.5 286.5h2M991.5 290.5h3M991.5 291.5h2M990.5 286.5v4M991.5 287.5v4M994.5 286.5h3M995.5 289.5h2M995.5 290.5h3M997.5 286.5v5" stroke="#00ff00" fill="none" stroke-linecap="square"/>
<path d="M1042.5 292.5v-6l-2 4h2" stroke="#00ff00" fill="none" stroke-linecap="square"/>
<path d="M1063.5 286.5h1v2v4h0h-1h-1v-4zM1067.5 288.5v-2h-1l-1 2v4h1h1h0M1068.5 292.5v-4M1068.5 290.5l1-2h1M1071.5 288.5l1-2v6M1074.5 286.5h1l1 2h0l-1 2h-1v-2h0zM1074.5 290.5h0v2h0h1h1v-2h-1M1077.5 292.5v-6l2 6v-6M1080.5 288.5v4M1080.5 286.5v2M1084.5 290.5h-2v-2h0v-2h1l1 2v4h-1h-1" stroke="#00ff00" fill="none" stroke-linecap="square"/>
<path d="M1102.5 286.5h1v2v4h0h-1h-1v-4zM1104.5 292.5h0M1108.5 286.5h-2v4h1h1v2h-1h-1" stroke="#00ff00" fill="none" stroke-linecap="square"/>
<path d="M1120.5 288.5v-2h1l1 2h0l-2 4h2" stroke="#00ff00" fill="none" stroke-linecap="square"/>
<path d="M928.5 304.5v-6l-1 4h2M930.5 300.5v-2v6" stroke="#00ff00" fill="none" stroke-linecap="square"/>
<path d="M940.5 300.5l-1-2h-1v2v4h0h1h1v-2h-2M940.5 302.5h2h0v2h0h-2v-6h2v2h0v2M946.5 298.5h-2v4h1h1v2h-1h-1M946.5 298.5h2v2l-1 4M950.5 298.5h1l1 2h0l-1 2h-1v-2h0zM950.5 302.5h0v2h0h1h1v-2h-1M952.5 300.5l1-2h1v2h0l-2 4h2M956.5 302.5h2M959.5 298.5h1v2h0v2h-1l-1-2h0zM959.5 302.5h-1v2h1h1h0v-2h0M963.5 298.5h-1v2v4h0h1h1v-2h-1h-1" stroke="#00ff00" fill="none" stroke-linecap="square"/>
<path d="M990.5 298.5h4M990.5 299.5h3M991.5 301.5h3M991.5 302.5h3M990.5 298.5v5M991.5 300.5v2M993.5 299.5v3M994.5 300.5v3" stroke="#00ff00" fill="none" stroke-linecap="square"/>
<path d="M996.5 304.5v-6l2 4v-4v6M1000.5 300.5v-2v6M1004.5 298.5h-2v2v4h0h2h0v-2h0h-2M1005.5 300.5l2 4M1007.5 300.5l-2 4M1010.5 298.5h-2v4h2h0v2h0h-2M1013.5 298.5h-2v4h1h1v2h-1h-1" stroke="#00ff00" fill="none" stroke-linecap="square"/>
<path d="M1042.5 304.5v-6l-2 4h2" stroke="#00ff00" fill="none" stroke-linecap="square"/>
<path d="M1070.5 298.5h1l1 2h0l-1 2h-1v-2h0zM1070.5 302.5h0v2h0h1h1v-2h-1M1073.5 304.5h0M1075.5 298.5h1v2h0v2h-1l-1-2h0zM1075.5 302.5h-1v2h1h1h0v-2h0" stroke="#00ff00" fill="none" stroke-linecap="square"/>
<path d="M1101.5 298.5h1v2v4h0h-1h-1v-4zM1103.5 304.5h0M1105.5 300.5l1-2v6M1107.5 300.5l1-2v6" stroke="#00ff00" fill="none" stroke-linecap="square"/>
<path d="M1116.5 298.5h1l1 2v4h-1h-1h0v-4zM1119.5 304.5h0M1122.5 304.5v-6l-2 4h2M1125.5 304.5v-6l-2 4h2" stroke="#00ff00" fill="none" stroke-linecap="square"/>
<path d="M928.5 316.5v-6l-2 4h2M930.5 310.5h1h1v4l-1 2h-1v-2v-4z" stroke="#00ff00" fill="none" stroke-linecap="square"/>
<path d="M991.5 310.5h2M990.5 312.5h4M990.5 315.5h3M990.5 311.5v3M993.5 310.5v5M994.5 312.5v3" stroke="#00ff00" fill="none" stroke-linecap="square"/>
<path d="M997.5 310.5h1v2v2h0h-1h-1v-2zM998.5 309.5v7M1000.5 310.5h0v6M1002.5 310.5h2h0v2h0h-2h0v-2zM1002.5 312.5v2h0v2h2v-2h0v-2M1006.5 310.5h0h1v4l-1 2h0l-1-2v-4zM1008.5 316.5l2-6M1012.5 310.5h0l1 2v2h-1h0h-1v-2zM1012.5 309.5v7M1016.5 312.5h-2h0v-2h0h2h0v4v2h-2M1018.5 310.5h0h-1v4l1 2h0l1-2h0l-1-2h-1M1020.5 312.5l2 4M1022.5 312.5l-2 4M1023.5 310.5h1h0h1v2h-1h0M1024.5 312.5l1 2h0l-1 2h0l-1-2" stroke="#00ff00" fill="none" stroke-linecap="square"/>
<path d="M1040.5 310.5h1v6" stroke="#00ff00" fill="none" stroke-linecap="square"/>
<path d="M1060.5 311.5h3M1060.5 313.5h3M1060.5 311.5v3M1061.5 312.5v2M1062.5 310.5v5M1066.5 312.5h3M1065.5 315.5h4M1065.5 312.5v2M1067.5 312.5v2M1068.5 312.5v2M1071.5 310.5h3M1070.5 313.5h4M1070.5 314.5h3M1071.5 315.5h2M1070.5 312.5v3M1074.5 312.5v3M1075.5 314.5h4M1076.5 315.5h2M1075.5 312.5v3M1076.5 310.5v4M1078.5 310.5v5M1079.5 311.5v3" stroke="#00ff00" fill="none" stroke-linecap="square"/>
<path d="M926.5 322.5l1-2h1v2h0v2h0M928.5 324.5h0v2h0h-1h-1M932.5 324.5h-2v-2h0v-2h1l1 2v4h-1h-1" stroke="#00ff00" fill="none" stroke-linecap="square"/>
<path d="M990.5 324.5h4M990.5 322.5v2M991.5 320.5v5M994.5 320.5v4M994.5 320.5h4M994.5 323.5h3M994.5 320.5v5M995.5 322.5v2" stroke="#00ff00" fill="none" stroke-linecap="square"/>
<path d="M1002.5 320.5h1l1 2v4h-1h-1zM1004.5 326.5v-6l2 6v-6M1010.5 320.5h-2v4h1h1v2h-1h-1M1011.5 320.5h1v2v4h0h-1h-1v-4z" stroke="#00ff00" fill="none" stroke-linecap="square"/>
<path d="M1040.5 322.5l1-2v6" stroke="#00ff00" fill="none" stroke-linecap="square"/>
<path d="M1066.5 322.5l1-2v6M1070.5 320.5h-1v2v4h0h1h1v-2h-1h-1M1072.5 326.5v-6l1 4l1-4v6M1075.5 326.5v-4M1075.5 324.5v-2h1l1 2v2M1078.5 326.5v-6h1l1 2h0l-1 2h-1M1079.5 324.5l1 2" stroke="#00ff00" fill="none" stroke-linecap="square"/>
<path d="M1101.5 322.5l1-2h1v2h0v2h-1M1103.5 324.5h0v2h0h-1h-1M1104.5 326.5h0M1106.5 322.5v-2h1l1 2h0l-2 4h2" stroke="#00ff00" fill="none" stroke-linecap="square"/>
<path d="M1117.5 322.5l1-2h1v2h0v2h-1M1119.5 324.5h0v2h0h-1h-1M1120.5 326.5h0M1122.5 322.5v-2h1l1 2h0l-2 4h2" stroke="#00ff00" fill="none" stroke-linecap="square"/>
<path d="M926.5 332.5h1h1h0v2h0h0M928.5 334.5v2h0v2h-1l-1-2M930.5 332.5h1h1v2h-1h-1h0v-2zM930.5 334.5v2h0v2h1l1-2h0l-1-2" stroke="#00ff00" fill="none" stroke-linecap="square"/>
<path d="M991.5 334.5h2M994.5 334.5v2M994.5 334.5h4M995.5 336.5h3M995.5 337.5h3M994.5 332.5v5M995.5 334.5v3M996.5 332.5v4M997.5 334.5v2M1001.5 333.5h3M1000.5 336.5h3M1000.5 337.5h4M1000.5 332.5v4M1001.5 334.5v3M1002.5 332.5v5M1004.5 333.5v3" stroke="#00ff00" fill="none" stroke-linecap="square"/>
<path d="M1040.5 332.5h1v6" stroke="#00ff00" fill="none" stroke-linecap="square"/>
<path d="M1070.5 332.5h1h1h0v2l-2 4h2M1074.5 332.5h1h1v4l-1 2h-1v-2v-4z" stroke="#00ff00" fill="none" stroke-linecap="square"/>
<path d="M1101.5 332.5h1v6M1104.5 338.5h0M1107.5 332.5h-1h0v4v2h1l1-2h0l-1-2h-1" stroke="#00ff00" fill="none" stroke-linecap="square"/>
<path d="M1117.5 332.5h1v6M1120.5 338.5h0M1123.5 332.5h-1h0v4v2h1l1-2h0l-1-2h-1" stroke="#00ff00" fill="none" stroke-linecap="square"/>
<path d="M926.5 344.5l1-2h1v2h0v2h0M928.5 346.5h0v2h0h-1h-1M930.5 342.5h2v2l-2 4" stroke="#00ff00" fill="none" stroke-linecap="square"/>
<path d="M991.5 342.5h3M991.5 343.5h2M990.5 345.5h3M990.5 346.5h4M991.5 347.5h2M994.5 342.5v5" stroke="#00ff00" fill="none" stroke-linecap="square"/>
<path d="M997.5 344.5h1h0v2v2h-1l-1-2v-2zM998.5 342.5v7M1002.5 342.5h-2v4h1h1v2h-1h-1M1002.5 344.5l2 4M1004.5 344.5l-2 4M1008.5 342.5h-2v4h1h1v2h-1h-1" stroke="#00ff00" fill="none" stroke-linecap="square"/>
<path d="M1040.5 344.5v-2h2v2h0v2h-1M1042.5 346.5h0v2h0h-2h0" stroke="#00ff00" fill="none" stroke-linecap="square"/>
<path d="M1070.5 344.5l1-2h1v2h0l-2 4h2M1074.5 342.5h1l1 2v4h-1h-1h0v-4z" stroke="#00ff00" fill="none" stroke-linecap="square"/>
<path d="M1100.5 344.5l1-2v6M1103.5 348.5h0M1104.5 344.5l1-2v6M1107.5 344.5v-2h1l1 2h0l-1 2h0M1108.5 346.5h1v2h-1h-1h0" stroke="#00ff00" fill="none" stroke-linecap="square"/>
<path d="M1116.5 344.5v-2h1l1 2h0l-1 2h0M1117.5 346.5h1v2h-1h-1h0M1119.5 348.5h0M1120.5 344.5l1-2h1v2h0v2h-1M1122.5 346.5h0v2h0h-1h-1M1125.5 346.5h-1l-1-2h0l1-2h1v2v4h0h-1" stroke="#00ff00" fill="none" stroke-linecap="square"/>
<path d="M926.5 354.5h1h1h0v2h0h0M928.5 356.5v2h0v2h-1l-1-2M931.5 354.5h-1h0v4v2h1l1-2h0l-1-2h-1" stroke="#00ff00" fill="none" stroke-linecap="square"/>
<path d="M990.5 355.5h4M991.5 358.5h2M990.5 355.5v4M992.5 354.5v5M993.5 354.5v4M994.5 356.5v2" stroke="#00ff00" fill="none" stroke-linecap="square"/>
<path d="M997.5 354.5h1v2v2h0h-1h-1v-2zM998.5 353.5v7M1000.5 354.5h0v6M1002.5 354.5h2h0v4v2h-2v-2v-4zM1006.5 354.5h0h1v2h-1h0h-1v-2zM1006.5 356.5l-1 2h0l1 2h0l1-2h0l-1-2M1008.5 356.5l2 4M1010.5 356.5l-2 4M1012.5 354.5h0h-1v4l1 2h0l1-2h0l-1-2h-1" stroke="#00ff00" fill="none" stroke-linecap="square"/>
<path d="M1040.5 354.5h1v6" stroke="#00ff00" fill="none" stroke-linecap="square"/>
<path d="M1070.5 354.5h1h1h0v2l-2 4h2M1074.5 354.5h1h1v4l-1 2h-1v-2v-4z" stroke="#00ff00" fill="none" stroke-linecap="square"/>
<path d="M1102.5 354.5h0h2h0v2h0h-1M1104.5 356.5v2h0v2h-2v-2M1105.5 354.5h2h0l-1 6" stroke="#00ff00" fill="none" stroke-linecap="square"/>
<path d="M1118.5 354.5h0h2h0v2h0h-1M1120.5 356.5v2h0v2h-2v-2M1121.5 354.5h2h0l-1 6" stroke="#00ff00" fill="none" stroke-linecap="square"/>
<path d="M1141.5 354.5v6h2M1144.5 356.5h2M1144.5 358.5h2M1147.5 354.5h1h0h1v2l-2 4h2M1152.5 360.5v-6l-2 4h2M1155.5 354.5h-2v2h1l1 2h0l-1 2h-1M1156.5 354.5h2h0v4v2h-2v-2v-4z" stroke="#00ff00" fill="none" stroke-linecap="square"/>
<path d="M926.5 366.5l1-2h1v2h0v2h0M928.5 368.5h0v2h0h-1h-1M932.5 364.5h-2v4h1h1v2h-1h-1" stroke="#00ff00" fill="none" stroke-linecap="square"/>
<path d="M990.5 364.5h3M990.5 368.5h3M991.5 369.5h3M990.5 365.5v4M991.5 364.5v5M994.5 366.5v2" stroke="#00ff00" fill="none" stroke-linecap="square"/>
<path d="M1040.5 366.5v-2h2v2h0l-2 4h2" stroke="#00ff00" fill="none" stroke-linecap="square"/>
<path d="M1055.5 364.5h1l1 2v4h-1h-1h0v-4zM1058.5 370.5h0M1060.5 366.5v-2h1l1 2h0l-2 4h2M1063.5 366.5v-2h1l1 2h0l-1 2h0M1064.5 368.5h1v2h-1h-1h0M1068.5 364.5h-2v4h1h1v2h-1h-1M1069.5 368.5h2M1072.5 370.5l1-6l1 6M1072.5 368.5h1M1075.5 370.5l2-6M1078.5 366.5v-2v6M1082.5 364.5h-1l-1 2v4h1h1h0v-2h0h-2M1083.5 370.5v-6l1 4l1-4v6M1086.5 370.5v-4M1086.5 368.5l1-2h1v2v2M1089.5 370.5v-6h2v2h0v2h-2M1090.5 368.5l1 2" stroke="#00ff00" fill="none" stroke-linecap="square"/>
<path d="M1101.5 370.5v-6l-1 4h2M1103.5 370.5h0M1105.5 364.5h1v2v4h0h-1h-1v-4zM1109.5 364.5h-1l-1 2v4h1h1h0v-2h0h-2" stroke="#00ff00" fill="none" stroke-linecap="square"/>
<path d="M1116.5 364.5h1l1 2h0l-1 2h-1v-2h0zM1116.5 368.5h0v2h0h1h1v-2h-1M1119.5 370.5h0M1121.5 366.5v-2v6M1123.5 366.5l1-2h1v2h0l-2 4h2" stroke="#00ff00" fill="none" stroke-linecap="square"/>
<path d="M926.5 376.5h1h1h0v2h0h0M928.5 378.5v2h0v2h-1l-1-2M931.5 382.5v-6l-1 4h2" stroke="#00ff00" fill="none" stroke-linecap="square"/>
<path d="M940.5 376.5v4l-1 2h-1v-2M941.5 376.5v6M944.5 376.5h0h-1h-1v2h1h1v2h0v2h-1l-1-2M948.5 378.5h2v2h0v2h-2v-6h2h0v2h0M954.5 376.5h1h1h0v2l-2 4h2M958.5 376.5h0h1h1v2l-2 4h2M960.5 376.5h1v6M963.5 376.5h1h0h1v2l-2 4h2" stroke="#00ff00" fill="none" stroke-linecap="square"/>
<path d="M990.5 376.5h4M990.5 378.5h3M990.5 379.5h3M991.5 380.5h2M990.5 381.5h4M990.5 377.5v4M992.5 378.5v3M993.5 377.5v4M994.5 378.5v2" stroke="#00ff00" fill="none" stroke-linecap="square"/>
<path d="M996.5 376.5h2h0v4v2h-2zM1000.5 382.5v-6l2 6v-6M1004.5 376.5h-2v2h2v2h0v2h-2M1006.5 376.5h1h1v4l-1 2h-1v-2v-4z" stroke="#00ff00" fill="none" stroke-linecap="square"/>
<path d="M1040.5 376.5h0h2h0v2h0h-1M1042.5 378.5v2h0v2h-2v-2" stroke="#00ff00" fill="none" stroke-linecap="square"/>
<path d="M1066.5 376.5h1v6M1070.5 376.5h-1h0v4v2h1l1-2h0l-1-2h-1M1072.5 382.5v-6l1 2l1-2v6M1075.5 382.5v-4M1075.5 378.5h0h1h1v4M1078.5 382.5v-6h1h1v2h-1h-1M1079.5 378.5l1 4" stroke="#00ff00" fill="none" stroke-linecap="square"/>
<path d="M1100.5 376.5h0h1h1v2l-2 4h2M1103.5 382.5h0M1104.5 376.5h2h0l-1 6M1107.5 376.5h2h0l-1 6" stroke="#00ff00" fill="none" stroke-linecap="square"/>
<path d="M1116.5 376.5h1h1v2h-1h-1h0v-2zM1116.5 378.5v2h0v2h1l1-2h0l-1-2M1119.5 382.5h0M1121.5 376.5h0h1h1v2h-1h0M1122.5 378.5l1 2h0l-1 2h-1v-2M1124.5 376.5h0v6" stroke="#00ff00" fill="none" stroke-linecap="square"/>
<path d="M926.5 388.5l1-2h1v2h0v2h0M928.5 390.5h0v2h0h-1h-1M930.5 388.5v-2h1l1 2h0l-1 2h-1M931.5 390.5h1v2h-1h-1h0" stroke="#00ff00" fill="none" stroke-linecap="square"/>
<path d="M991.5 386.5h2M991.5 387.5h3M991.5 388.5h2M991.5 389.5h3M990.5 390.5h3M990.5 391.5h4M990.5 386.5v4M992.5 387.5v3M993.5 386.5v5M994.5 386.5v5" stroke="#00ff00" fill="none" stroke-linecap="square"/>
<path d="M997.5 388.5h1h0v2v2h-1l-1-2v-2zM998.5 386.5v7M1002.5 386.5h-2v4h1h1v2h-1h-1M1002.5 386.5h2v2l-1 4M1006.5 388.5l2 4M1008.5 388.5l-2 4M1010.5 386.5h-2v4h2h0v2h0h-2" stroke="#00ff00" fill="none" stroke-linecap="square"/>
<path d="M1040.5 388.5l1-2v6" stroke="#00ff00" fill="none" stroke-linecap="square"/>
<path d="M1070.5 388.5l1-2h1v2h0l-2 4h2M1074.5 386.5h1l1 2v4h-1h-1h0v-4z" stroke="#00ff00" fill="none" stroke-linecap="square"/>
<path d="M1100.5 388.5l1-2v6M1103.5 392.5h0M1104.5 388.5l1-2v6M1107.5 388.5v-2h1l1 2h0l-1 2h0M1108.5 390.5h1v2h-1h-1h0" stroke="#00ff00" fill="none" stroke-linecap="square"/>
<path d="M1116.5 388.5l1-2v6M1119.5 392.5h0M1120.5 388.5l1-2v6M1123.5 388.5v-2h1l1 2h0l-1 2h0M1124.5 390.5h1v2h-1h-1h0" stroke="#00ff00" fill="none" stroke-linecap="square"/>
<path d="M1143.5 386.5v6h2M1146.5 388.5h2M1146.5 390.5h2M1149.5 388.5l1-2v6M1151.5 388.5l1-2h1v2h0v2h-1M1153.5 390.5h0v2h0h-1h-1M1154.5 386.5h2v2l-1 4" stroke="#00ff00" fill="none" stroke-linecap="square"/>
<path d="M926.5 398.5h1h1h0v2h0h0M928.5 400.5v2h0v2h-1l-1-2M930.5 398.5h0h1h1v2l-2 4h2" stroke="#00ff00" fill="none" stroke-linecap="square"/>
<path d="M990.5 398.5h3M991.5 400.5h3M990.5 402.5h3M991.5 399.5v3M992.5 400.5v2M993.5 400.5v2M994.5 399.5h4M994.5 400.5h3M994.5 401.5h4M995.5 402.5h2M994.5 403.5h4M994.5 400.5v3" stroke="#00ff00" fill="none" stroke-linecap="square"/>
<path d="M1040.5 398.5h0h2h0v2l-2 4h2" stroke="#00ff00" fill="none" stroke-linecap="square"/>
<path d="M1070.5 398.5h1h1h0v2l-2 4h2M1074.5 398.5h1h1v4l-1 2h-1v-2v-4z" stroke="#00ff00" fill="none" stroke-linecap="square"/>
<path d="M1101.5 398.5h1v6M1104.5 404.5h0M1108.5 398.5h-2v2h1l1 2h0l-1 2h-1" stroke="#00ff00" fill="none" stroke-linecap="square"/>
<path d="M1120.5 398.5h0h1h1v2h-1h-1M1121.5 400.5l1 2h0l-1 2h-1v-2" stroke="#00ff00" fill="none" stroke-linecap="square"/>
<path d="M927.5 410.5v-2h1l1 2h0l-1 2h0M928.5 412.5h1v2h-1h-1h0M930.5 410.5v-2v6" stroke="#00ff00" fill="none" stroke-linecap="square"/>
<path d="M940.5 410.5l-1-2h-1v2v4h0h1h1v-2h-2M940.5 412.5h2h0v2h0h-2v-6h2v2h0v2M945.5 408.5h-1v2v4h0h1h1v-2h-1h-1M946.5 410.5l1-2v6M949.5 408.5h2v2l-1 4M952.5 408.5h2v2v4h0h-2h0v-4zM955.5 412.5h2M958.5 408.5h2v2h0v2h-2v-2h0zM958.5 412.5h0v2h0h2h0v-2h0M962.5 408.5h0l-1 2v4h1h0h1v-2h-1h-1" stroke="#00ff00" fill="none" stroke-linecap="square"/>
<path d="M990.5 408.5h4M991.5 409.5h2M991.5 410.5h3M990.5 411.5h3M991.5 413.5h2M990.5 410.5v2M993.5 408.5v5M994.5 408.5v5" stroke="#00ff00" fill="none" stroke-linecap="square"/>
<path d="M996.5 414.5v-6l2 4v-4v6M1000.5 410.5v-2v6M1004.5 408.5h-2v2v4h0h2h0v-2h0h-2" stroke="#00ff00" fill="none" stroke-linecap="square"/>
<path d="M1040.5 408.5h2v2h0v2h-2v-2h0zM1040.5 412.5h0v2h0h2h0v-2h0" stroke="#00ff00" fill="none" stroke-linecap="square"/>
<path d="M1068.5 409.5h4M1069.5 410.5h3M1068.5 411.5h4M1070.5 408.5v5M1071.5 410.5v2M1072.5 410.5v2M1073.5 408.5h4M1073.5 410.5h4M1074.5 412.5h3M1073.5 413.5h4M1073.5 410.5v2M1076.5 408.5v4" stroke="#00ff00" fill="none" stroke-linecap="square"/>
<path d="M1100.5 408.5h1l1 2v4h-1h-1h0v-4zM1103.5 414.5h0M1105.5 408.5h1v2v4h0h-1h-1v-4zM1107.5 410.5l1-2h1v2h0v2h-1M1109.5 412.5h0v2h0h-1h-1" stroke="#00ff00" fill="none" stroke-linecap="square"/>
<path d="M1116.5 408.5h1l1 2v4h-1h-1h0v-4zM1119.5 414.5h0M1120.5 410.5l1-2h1v2h0l-2 4h2M1123.5 410.5l1-2h1v2h0v2h-1M1125.5 412.5h0v2h0h-1h-1" stroke="#00ff00" fill="none" stroke-linecap="square"/>
<path d="M926.5 420.5h1h1h0v2h0h0M928.5 422.5v2h0v2h-1l-1-2M930.5 420.5h1h1v4l-1 2h-1v-2v-4z" stroke="#00ff00" fill="none" stroke-linecap="square"/>
<path d="M940.5 420.5h-1h-1h0v4v2h1l1-2v-2h-2M940.5 422.5h2v2h0v2h-2v-6h2h0v2h0M946.5 420.5h-2v2h1l1 2h0l-1 2h-1M946.5 420.5h2h0l-1 6M950.5 420.5h1h1v2h-1h-1h0v-2zM950.5 422.5v2h0v2h1l1-2h0l-1-2M952.5 420.5h1h1h0v2l-2 4h2M956.5 422.5h2M959.5 420.5h1h0v2h0h-1h-1v-2zM959.5 422.5l-1 2h0l1 2h1v-2h0v-2M963.5 420.5h-1h0v4v2h1l1-2h0l-1-2h-1" stroke="#00ff00" fill="none" stroke-linecap="square"/>
<path d="M990.5 421.5h4M990.5 423.5h3M990.5 424.5h4M990.5 425.5h4M990.5 420.5v4M993.5 421.5v4" stroke="#00ff00" fill="none" stroke-linecap="square"/>
<path d="M996.5 426.5v-6l2 2v-2v6M1000.5 420.5h0v6M1004.5 420.5h-2h0v4v2h2v-2h0v-2h-2M1005.5 422.5l2 4M1007.5 422.5l-2 4M1010.5 420.5h-2h0v4v2h2v-2h0v-2h-2M1012.5 420.5h0h1v4l-1 2h0l-1-2v-4z" stroke="#00ff00" fill="none" stroke-linecap="square"/>
<path d="M1042.5 426.5v-6l-2 4h2" stroke="#00ff00" fill="none" stroke-linecap="square"/>
<path d="M1070.5 420.5h1h1v2h-1h-1h0v-2zM1070.5 422.5v2h0v2h1l1-2h0l-1-2M1073.5 426.5h0M1075.5 420.5h1h0v2h0h-1h-1v-2zM1075.5 422.5l-1 2h0l1 2h1v-2h0v-2" stroke="#00ff00" fill="none" stroke-linecap="square"/>
<path d="M1100.5 420.5h1h1v4l-1 2h-1v-2v-4zM1103.5 426.5h0M1105.5 420.5h0v6M1108.5 420.5h1h0v4v2h-1l-1-2v-4z" stroke="#00ff00" fill="none" stroke-linecap="square"/>
<path d="M1116.5 420.5h1h1v4l-1 2h-1v-2v-4zM1119.5 426.5h0M1122.5 426.5v-6l-2 4h2M1124.5 420.5h1h0v4v2h-1l-1-2v-4z" stroke="#00ff00" fill="none" stroke-linecap="square"/>
<path d="M926.5 432.5h1h1h0v2l-2 4h2M932.5 434.5h-2h0v-2h0h1h1v4l-1 2h-1" stroke="#00ff00" fill="none" stroke-linecap="square"/>
<path d="M990.5 435.5h4M990.5 432.5v4M994.5 433.5h4M995.5 434.5h3M995.5 436.5h2M995.5 433.5v4M996.5 433.5v4M997.5 434.5v2" stroke="#00ff00" fill="none" stroke-linecap="square"/>
<path d="M1002.5 432.5h1h1v4l-1 2h-1zM1004.5 438.5v-6l2 6v-6M1008.5 432.5h1h1v2h-1h-1h0v-2zM1008.5 434.5v2h0v2h1l1-2h0l-1-2M1011.5 432.5h1h0v4v2h-1l-1-2v-4z" stroke="#00ff00" fill="none" stroke-linecap="square"/>
<path d="M1040.5 432.5h1v6" stroke="#00ff00" fill="none" stroke-linecap="square"/>
<path d="M1066.5 432.5h1v6M1070.5 432.5h-1h0v4v2h1l1-2h0l-1-2h-1M1072.5 438.5v-6l1 2l1-2v6M1075.5 438.5v-4M1075.5 434.5h0h1h1v4M1078.5 438.5v-6h1h1v2h-1h-1M1079.5 434.5l1 4" stroke="#00ff00" fill="none" stroke-linecap="square"/>
<path d="M1103.5 438.5v-6l-2 4h2M1104.5 438.5h0M1107.5 432.5h-1h0v4v2h1l1-2h0l-1-2h-1" stroke="#00ff00" fill="none" stroke-linecap="square"/>
<path d="M1119.5 438.5v-6l-2 4h2M1120.5 438.5h0M1123.5 432.5h-1h0v4v2h1l1-2h0l-1-2h-1" stroke="#00ff00" fill="none" stroke-linecap="square"/>
<path d="M926.5 444.5l1-2h1v2h0l-2 4h2M930.5 442.5h1l1 2h0l-1 2h-1v-2h0zM930.5 446.5h0v2h0h1h1v-2h-1" stroke="#00ff00" fill="none" stroke-linecap="square"/>
<path d="M990.5 444.5h4M991.5 445.5h3M990.5 446.5h3M991.5 447.5h2M990.5 442.5v5" stroke="#00ff00" fill="none" stroke-linecap="square"/>
<path d="M997.5 444.5h1h0v2v2h-1l-1-2v-2zM998.5 442.5v7M1000.5 444.5v-2v6M1002.5 444.5v-2h2v2h0v2h-1M1004.5 446.5h0v2h0h-2h0M1006.5 442.5h0l1 2v4h-1h0h-1v-4zM1008.5 448.5l2-6M1012.5 444.5h0h1v2l-1 2h0l-1-2v-2zM1012.5 442.5v7M1014.5 442.5h2v2h0v2h-2v-2h0zM1014.5 446.5h0v2h0h2h0v-2h0M1019.5 446.5h-1l-1-2h0l1-2h0l1 2v4h-1h0M1020.5 444.5l2 4M1022.5 444.5l-2 4M1023.5 444.5l1-2h0l1 2h0l-1 2h0M1024.5 446.5h1v2h-1h0h-1" stroke="#00ff00" fill="none" stroke-linecap="square"/>
<path d="M1040.5 444.5l1-2v6" stroke="#00ff00" fill="none" stroke-linecap="square"/>
<path d="M1060.5 442.5h3M1061.5 444.5h2M1060.5 447.5h3M1061.5 443.5v4M1064.5 442.5v4M1066.5 442.5h2M1065.5 443.5h4M1065.5 447.5h4M1069.5 443.5v3M1071.5 442.5h2M1071.5 443.5h3M1071.5 445.5h3M1071.5 446.5h2M1070.5 447.5h4M1070.5 444.5v3M1071.5 443.5v3M1076.5 442.5h3M1076.5 447.5h3" stroke="#00ff00" fill="none" stroke-linecap="square"/>
<path d="M926.5 454.5h1h1h0v2l-2 4h2M930.5 454.5h2h0l-2 6" stroke="#00ff00" fill="none" stroke-linecap="square"/>
<path d="M940.5 454.5v4l-1 2h-1v-2M941.5 454.5v6M944.5 454.5h0h-1h-1v2h1h1v2h0v2h-1l-1-2M948.5 456.5h2v2h0v2h-2v-6h2h0v2h0M954.5 454.5h1h1h0v2l-2 4h2M958.5 454.5h0h1h1v2l-2 4h2M960.5 454.5h1v6M963.5 454.5h1h0h1v2l-2 4h2" stroke="#00ff00" fill="none" stroke-linecap="square"/>
<path d="M990.5 455.5h3M990.5 456.5h3M990.5 459.5h4M995.5 458.5h3M994.5 459.5h3M996.5 454.5v4M998.5 455.5v4" stroke="#00ff00" fill="none" stroke-linecap="square"/>
<path d="M1002.5 454.5h1h1v4l-1 2h-1zM1004.5 460.5v-6l2 6v-6M1008.5 454.5h0v6M1010.5 454.5h2h0v4v2h-2v-2v-4zM1014.5 454.5h0h1v4l-1 2h0l-1-2v-4z" stroke="#00ff00" fill="none" stroke-linecap="square"/>
<path d="M1040.5 454.5h0h2h0v2h0h-1M1042.5 456.5v2h0v2h-2v-2" stroke="#00ff00" fill="none" stroke-linecap="square"/>
<path d="M1066.5 454.5h1v6M1070.5 454.5h-1h0v4v2h1l1-2h0l-1-2h-1M1072.5 460.5v-6l1 2l1-2v6M1075.5 460.5v-4M1075.5 456.5h0h1h1v4M1078.5 460.5v-6h1h1v2h-1h-1M1079.5 456.5l1 4" stroke="#00ff00" fill="none" stroke-linecap="square"/>
<path d="M1101.5 454.5h1h1h0v2h0h-1M1103.5 456.5v2h0v2h-1l-1-2M1104.5 460.5h0M1107.5 454.5h-1h0v4v2h1l1-2h0l-1-2h-1" stroke="#00ff00" fill="none" stroke-linecap="square"/>
<path d="M1116.5 454.5h1v6M1119.5 454.5h1h0v4v2h-1l-1-2v-4zM1121.5 460.5h0M1124.5 454.5h1h0v2h0h-1h-1v-2zM1124.5 456.5l-1 2h0l1 2h1v-2h0v-2" stroke="#00ff00" fill="none" stroke-linecap="square"/>
<path d="M926.5 466.5l1-2h1v2h0l-2 4h2M931.5 464.5h-1v2v4h0h1h1v-2h-1h-1" stroke="#00ff00" fill="none" stroke-linecap="square"/>
<path d="M990.5 464.5h3M991.5 465.5h2M990.5 466.5h3M990.5 467.5h3M991.5 465.5v3M992.5 464.5v5" stroke="#00ff00" fill="none" stroke-linecap="square"/>
<path d="M997.5 466.5h1h0v2v2h-1l-1-2v-2zM998.5 464.5v7M1000.5 464.5h1l1 2h0l-1 2h-1v-2h0zM1000.5 468.5h0v2h0h1h1v-2h-1M1004.5 468.5h-1l-1-2h0l1-2h1v2v4h0h-1M1006.5 466.5l2 4M1008.5 466.5l-2 4M1010.5 464.5h-1l-1 2v4h1h1h0v-2h0h-2" stroke="#00ff00" fill="none" stroke-linecap="square"/>
<path d="M1040.5 466.5v-2h2v2h0l-2 4h2" stroke="#00ff00" fill="none" stroke-linecap="square"/>
<path d="M1070.5 466.5l1-2h1v2h0l-2 4h2M1074.5 464.5h1l1 2v4h-1h-1h0v-4z" stroke="#00ff00" fill="none" stroke-linecap="square"/>
<path d="M1100.5 466.5v-2h1l1 2h0l-2 4h2M1103.5 470.5h0M1106.5 464.5h-2v4h2h0v2h0h-2M1107.5 466.5l1-2h1v2h0v2h-1M1109.5 468.5h0v2h0h-1h-1" stroke="#00ff00" fill="none" stroke-linecap="square"/>
<path d="M1118.5 464.5h-2v4h1h1v2h-1h-1M1119.5 470.5h0M1121.5 464.5h1v2v4h0h-1h-1v-4zM1125.5 464.5h-1l-1 2v4h1h1h0v-2h0h-2" stroke="#00ff00" fill="none" stroke-linecap="square"/>
<path d="M1143.5 464.5v6h2M1146.5 466.5h2M1146.5 468.5h2M1149.5 466.5l1-2v6M1152.5 464.5h1v2v4h0h-1h-1v-4zM1155.5 464.5h1v2v4h0h-1h-1v-4z" stroke="#00ff00" fill="none" stroke-linecap="square"/>
<path d="M926.5 476.5h1h1h0v2l-2 4h2M932.5 476.5h-2v2h1l1 2h0l-1 2h-1" stroke="#00ff00" fill="none" stroke-linecap="square"/>
<path d="M991.5 477.5h2M991.5 479.5h3M990.5 477.5v3M995.5 476.5h3M994.5 477.5h3M995.5 478.5h3M994.5 479.5h3M994.5 480.5h4M994.5 481.5h4M996.5 478.5v3M997.5 477.5v3M998.5 478.5v2" stroke="#00ff00" fill="none" stroke-linecap="square"/>
<path d="M1040.5 476.5h1v6" stroke="#00ff00" fill="none" stroke-linecap="square"/>
<path d="M1069.5 476.5h3M1068.5 477.5h3M1068.5 478.5h4M1069.5 480.5h3M1074.5 476.5h3M1073.5 477.5h3M1073.5 481.5h4M1073.5 476.5v4M1075.5 478.5v2M1076.5 477.5v4M1077.5 477.5v4" stroke="#00ff00" fill="none" stroke-linecap="square"/>
<path d="M1098.5 476.5h1h1h0v2h0h-1M1100.5 478.5v2h0v2h-1l-1-2M1101.5 476.5h1h1h0v2l-2 4h2M1105.5 476.5h1h0v4v2h-1l-1-2v-4zM1107.5 482.5h0M1111.5 476.5h-2v2h1l1 2h0l-1 2h-1" stroke="#00ff00" fill="none" stroke-linecap="square"/>
<path d="M1114.5 476.5h1h1h0v2h0h-1M1116.5 478.5v2h0v2h-1l-1-2M1117.5 476.5h1h1h0v2l-2 4h2M1121.5 476.5h1h0v4v2h-1l-1-2v-4zM1123.5 482.5h0M1127.5 476.5h-2v2h1l1 2h0l-1 2h-1" stroke="#00ff00" fill="none" stroke-linecap="square"/>
<path d="M926.5 488.5l1-2h1v2h0l-2 4h2M931.5 492.5v-6l-1 4h2" stroke="#00ff00" fill="none" stroke-linecap="square"/>
<path d="M940.5 486.5v6h-1h-1h0M940.5 490.5h2h0v2h0h-2v-6h2v2h0v2M944.5 492.5l2-6M946.5 486.5h2M948.5 486.5v6M951.5 492.5v-6l-1 4h2M952.5 486.5h2v2l-1 4M956.5 486.5h1l1 2v4h-1h-1h0v-4zM958.5 488.5l1-2h1v2h0v2h0M960.5 490.5h0v2h0h-1h-1M962.5 490.5h2M964.5 488.5l1-2h1v2h0l-2 4h2M968.5 486.5h1l1 2v4h-1h-1h0v-4zM971.5 486.5h1v2v4h0h-1h-1v-4zM974.5 486.5h1l1 2v4h-1h-1h0v-4z" stroke="#00ff00" fill="none" stroke-linecap="square"/>
<path d="M990.5 487.5h4M991.5 488.5h3M993.5 486.5v5M994.5 487.5v4" stroke="#00ff00" fill="none" stroke-linecap="square"/>
<path d="M996.5 490.5h2M1002.5 486.5h-2v6M1000.5 490.5h1M1002.5 492.5v-6l2 4v-4v6M1007.5 492.5v-6l-1 4h2M1009.5 486.5h1v2v4h0h-1h-1v-4zM1012.5 486.5h1l1 2v4h-1h-1h0v-4zM1014.5 490.5h2M1019.5 486.5h-1v2v4h0h1h1v-2h-1h-1M1020.5 492.5l2-6v6M1021.5 490.5h1" stroke="#00ff00" fill="none" stroke-linecap="square"/>
<path d="M1040.5 488.5v-2h2v2h0l-2 4h2" stroke="#00ff00" fill="none" stroke-linecap="square"/>
<path d="M1064.5 488.5l1-2v6M1068.5 486.5h-1v2v4h0h1h1v-2h-1h-1M1070.5 492.5v-6l1 4l1-4v6M1073.5 492.5v-4M1073.5 490.5v-2h1l1 2v2M1079.5 486.5v6M1081.5 486.5v6" stroke="#00ff00" fill="none" stroke-linecap="square"/>
<path d="M1104.5 492.5v-6l-2 4h2M1107.5 490.5h-1l-1-2h0l1-2h0l1 2v4h-1h0" stroke="#00ff00" fill="none" stroke-linecap="square"/>
<path d="M1120.5 490.5h-2v-2h0v-2h2v2v4h0h-2M1122.5 486.5h0l1 2h0l-1 2h0l-1-2h0zM1122.5 490.5h-1v2h1h0h1v-2h-1" stroke="#00ff00" fill="none" stroke-linecap="square"/>
<path d="M926.5 498.5h1h1h0v2l-2 4h2M930.5 498.5h0h1h1v2h-1h-1M931.5 500.5l1 2h0l-1 2h-1v-2" stroke="#00ff00" fill="none" stroke-linecap="square"/>
<path d="M940.5 498.5v4l-1 2h-1v-2M940.5 500.5h2v2h0v2h-2v-6h2h0v2h0M944.5 504.5l2-6M946.5 498.5h2M948.5 498.5v6M951.5 504.5v-6l-1 4h2M952.5 498.5h2h0l-1 6M956.5 498.5h1h1v4l-1 2h-1v-2v-4zM960.5 504.5v-6l-2 4h2M962.5 500.5h2M964.5 498.5h1h1h0v2l-2 4h2M968.5 498.5h1h1v4l-1 2h-1v-2v-4zM971.5 498.5h1h0v4v2h-1l-1-2v-4zM974.5 498.5h1h1v4l-1 2h-1v-2v-4z" stroke="#00ff00" fill="none" stroke-linecap="square"/>
<path d="M990.5 498.5h3M991.5 499.5h3M990.5 501.5h3M991.5 502.5h3M990.5 499.5v3M991.5 498.5v5" stroke="#00ff00" fill="none" stroke-linecap="square"/>
<path d="M998.5 498.5h0h-1h-1v4l1 2h1v-2v-2h0M1001.5 504.5v-6l-1 4h2M1003.5 498.5h1h0v4v2h-1l-1-2v-4zM1006.5 498.5h1h1v4l-1 2h-1v-2v-4zM1008.5 500.5h2M1013.5 498.5h-1h0v4v2h1l1-2h0l-1-2h-1M1014.5 504.5l2-6v6M1015.5 502.5h1" stroke="#00ff00" fill="none" stroke-linecap="square"/>
<path d="M1040.5 498.5h1v6" stroke="#00ff00" fill="none" stroke-linecap="square"/>
<path d="M1061.5 498.5h2M1060.5 500.5h4M1060.5 502.5h4M1060.5 503.5h4M1064.5 498.5v5M1066.5 499.5h3M1065.5 501.5h4M1066.5 502.5h3M1066.5 503.5h2M1068.5 499.5v3M1070.5 499.5h4M1070.5 500.5h3M1070.5 501.5h4M1071.5 502.5h3M1071.5 503.5h2M1070.5 499.5v4M1071.5 500.5v2M1075.5 498.5h4M1076.5 500.5h3M1075.5 501.5h4M1075.5 502.5h3M1075.5 503.5h4" stroke="#00ff00" fill="none" stroke-linecap="square"/>
<path d="M926.5 510.5l1-2h1v2h0l-2 4h2M930.5 510.5v-2h1l1 2h0l-2 4h2" stroke="#00ff00" fill="none" stroke-linecap="square"/>
<path d="M991.5 511.5h3M990.5 510.5v3M992.5 510.5v2M994.5 508.5v5" stroke="#00ff00" fill="none" stroke-linecap="square"/>
<path d="M996.5 512.5h2" stroke="#00ff00" fill="none" stroke-linecap="square"/>
<path d="M1040.5 510.5l1-2v6" stroke="#00ff00" fill="none" stroke-linecap="square"/>
<path d="M1061.5 508.5h2M1060.5 509.5h3M1061.5 510.5h3M1061.5 513.5h3M1060.5 509.5v4M1062.5 510.5v2M1063.5 508.5v4M1065.5 508.5h3M1066.5 509.5h2M1065.5 510.5h4M1065.5 512.5h4M1066.5 513.5h2M1066.5 508.5v5M1068.5 509.5v4M1069.5 509.5v3M1071.5 508.5h3M1070.5 512.5h4M1071.5 513.5h3M1071.5 509.5v4M1072.5 510.5v2M1073.5 508.5v4M1074.5 508.5v4M1076.5 508.5h2M1075.5 513.5h4M1076.5 508.5v5M1078.5 508.5v5M1079.5 510.5v3" stroke="#00ff00" fill="none" stroke-linecap="square"/>
<path d="M927.5 520.5h0h1h1v2l-2 4h2M930.5 520.5h0v6" stroke="#00ff00" fill="none" stroke-linecap="square"/>
<path d="M940.5 520.5h-1h-1h0v4v2h1l1-2v-2h-2M940.5 522.5h2v2h0v2h-2v-6h2h0v2h0M945.5 520.5h-1h0v4v2h1l1-2h0l-1-2h-1M946.5 520.5h1v6M949.5 520.5h2h0l-1 6M952.5 520.5h2h0v4v2h-2v-2v-4zM955.5 522.5h2M958.5 520.5h2h0v2h0h-2h0v-2zM958.5 522.5v2h0v2h2v-2h0v-2M962.5 520.5h0h-1v4l1 2h0l1-2h0l-1-2h-1" stroke="#00ff00" fill="none" stroke-linecap="square"/>
<path d="M990.5 522.5h4M990.5 523.5h4M990.5 524.5h4M991.5 525.5h3M990.5 520.5v4M993.5 522.5v3M994.5 522.5v2" stroke="#00ff00" fill="none" stroke-linecap="square"/>
<path d="M996.5 526.5v-6l2 2v-2v6M1000.5 520.5h0h1h1v2l-2 4h2M1004.5 526.5v-6l-2 4h2" stroke="#00ff00" fill="none" stroke-linecap="square"/>
<path d="M1040.5 526.5v-6l-2 4h2M1043.5 520.5h-1h0v4v2h1l1-2h0l-1-2h-1" stroke="#00ff00" fill="none" stroke-linecap="square"/>
<path d="M1063.5 520.5h1h0h1v2h-1h0M1064.5 522.5l1 2h0l-1 2h0l-1-2M1068.5 520.5h-2v2h2v2h0v2h-2M1071.5 520.5h-1h0h-1v4l1 2h0l1-2M1072.5 526.5v-4M1072.5 522.5h0h2M1075.5 526.5v-6l1 2l1-2v6M1078.5 522.5h2h0v2v2h-2v-2v-2zM1081.5 526.5l1-6l1 6M1082.5 524.5h0" stroke="#00ff00" fill="none" stroke-linecap="square"/>
<path d="M1100.5 520.5h1h1v4l-1 2h-1v-2v-4zM1103.5 526.5h0M1105.5 520.5h1h0v4v2h-1l-1-2v-4zM1109.5 522.5h-1h-1v-2h1h1h0v4v2h-1" stroke="#00ff00" fill="none" stroke-linecap="square"/>
<path d="M1117.5 526.5v-6l-1 4h2M1119.5 526.5h0M1120.5 520.5h1h1h0v2h0h-1M1122.5 522.5v2h0v2h-1l-1-2M1123.5 520.5h1h1h0v2l-2 4h2" stroke="#00ff00" fill="none" stroke-linecap="square"/>
<path d="M926.5 532.5l1-2h1v2h0l-2 4h2M930.5 530.5h1l1 2v4h-1h-1h0v-4z" stroke="#00ff00" fill="none" stroke-linecap="square"/>
<path d="M940.5 530.5v6h-1h-1h0M940.5 534.5h2h0v2h0h-2v-6h2v2h0v2M944.5 536.5l2-6M946.5 530.5h2M948.5 530.5v6M951.5 536.5v-6l-1 4h2M952.5 530.5h2v2l-1 4M956.5 530.5h1l1 2v4h-1h-1h0v-4zM958.5 530.5h2v2l-1 4M962.5 534.5h2M964.5 532.5l1-2h1v2h0l-2 4h2M968.5 530.5h1l1 2v4h-1h-1h0v-4zM971.5 530.5h1v2v4h0h-1h-1v-4zM974.5 530.5h1l1 2v4h-1h-1h0v-4z" stroke="#00ff00" fill="none" stroke-linecap="square"/>
<path d="M990.5 530.5h3M991.5 531.5h3M990.5 533.5h3M990.5 534.5h4M991.5 535.5h2M990.5 532.5v3M991.5 532.5v3M992.5 531.5v3M993.5 531.5v4M994.5 532.5v3M995.5 530.5h3M994.5 531.5h4M994.5 532.5h4M995.5 534.5h3M994.5 535.5h4M995.5 532.5v3M997.5 531.5v4" stroke="#00ff00" fill="none" stroke-linecap="square"/>
<path d="M1002.5 536.5v-6v4l2-4v6M1004.5 532.5l1-2h1v2h0l-2 4h2M1009.5 536.5v-6l-1 4h2M1010.5 532.5l2 4M1012.5 532.5l-2 4M1014.5 532.5v-2h1l1 2h0l-2 4h2M1018.5 536.5v-6l-2 4h2M1022.5 530.5h-2v4h1h1v2h-1h-1" stroke="#00ff00" fill="none" stroke-linecap="square"/>
<path d="M1038.5 532.5l1-2h1v2h0l-2 4h2M1042.5 532.5v-2h1l1 2h0l-2 4h2" stroke="#00ff00" fill="none" stroke-linecap="square"/>
<path d="M1063.5 532.5l1-2h0l1 2h0l-1 2h0M1064.5 534.5h1v2h-1h0h-1M1068.5 530.5h-2v4h2h0v2h0h-2M1071.5 532.5l-1-2h0l-1 2v4h1h0h1M1072.5 536.5v-4M1072.5 534.5v-2h2M1075.5 536.5v-6l1 4l1-4v6M1078.5 532.5h2v2v2h0h-2h0v-2zM1081.5 536.5l1-6l1 6M1082.5 534.5h0" stroke="#00ff00" fill="none" stroke-linecap="square"/>
<path d="M1100.5 530.5h1l1 2v4h-1h-1h0v-4zM1103.5 536.5h0M1105.5 530.5h1v2h0v2h-1l-1-2h0zM1105.5 534.5h-1v2h1h1h0v-2h0M1108.5 530.5h1v2h0v2h-1l-1-2h0zM1108.5 534.5h-1v2h1h1h0v-2h0" stroke="#00ff00" fill="none" stroke-linecap="square"/>
<path d="M1114.5 532.5l1-2v6M1119.5 534.5h-2v-2h0v-2h1l1 2v4h-1h-1M1120.5 536.5h0M1122.5 532.5v-2h1l1 2h0l-1 2h0M1123.5 534.5h1v2h-1h-1h0M1126.5 530.5h-1v2v4h0h1h1v-2h-1h-1" stroke="#00ff00" fill="none" stroke-linecap="square"/>
<path d="M927.5 542.5h1v6M931.5 544.5h-1h-1v-2h1h1h0v4v2h-1" stroke="#00ff00" fill="none" stroke-linecap="square"/>
<path d="M990.5 543.5h4M990.5 547.5h4M995.5 544.5h2M994.5 546.5h4M995.5 542.5v5M996.5 542.5v4M997.5 543.5v3" stroke="#00ff00" fill="none" stroke-linecap="square"/>
<path d="M1040.5 542.5h1v6" stroke="#00ff00" fill="none" stroke-linecap="square"/>
<path d="M1069.5 542.5h3M1069.5 545.5h2M1068.5 543.5v3M1071.5 544.5v3M1074.5 544.5h3M1074.5 546.5h3M1074.5 547.5h3M1073.5 543.5v4M1074.5 544.5v2M1075.5 543.5v4M1076.5 542.5v5" stroke="#00ff00" fill="none" stroke-linecap="square"/>
<path d="M1101.5 542.5h1v6M1103.5 542.5h1h1h0v2l-2 4h2M1108.5 542.5h-2v2h2v2h0v2h-2" stroke="#00ff00" fill="none" stroke-linecap="square"/>
<path d="M1117.5 542.5h1v6M1119.5 542.5h1h1h0v2l-2 4h2M1124.5 542.5h-2v2h2v2h0v2h-2" stroke="#00ff00" fill="none" stroke-linecap="square"/>
<path d="M927.5 554.5l1-2v6M930.5 552.5h1v2h0v2h-1l-1-2h0zM930.5 556.5h-1v2h1h1h0v-2h0" stroke="#00ff00" fill="none" stroke-linecap="square"/>
<path d="M991.5 553.5h3M990.5 554.5h3M990.5 556.5h3M990.5 557.5h3M991.5 554.5v3M992.5 552.5v5M993.5 553.5v4M994.5 553.5h4M995.5 554.5h3M994.5 555.5h4M995.5 556.5h3M995.5 557.5h3M996.5 552.5v4M997.5 553.5v4" stroke="#00ff00" fill="none" stroke-linecap="square"/>
<path d="M1040.5 554.5l1-2v6" stroke="#00ff00" fill="none" stroke-linecap="square"/>
<path d="M1068.5 553.5h3M1068.5 555.5h3M1069.5 556.5h3M1069.5 553.5v4M1070.5 553.5v4M1071.5 552.5v4M1073.5 552.5h3M1074.5 553.5h3M1073.5 554.5h4M1073.5 555.5h4M1074.5 557.5h2M1073.5 553.5v3M1074.5 553.5v3M1075.5 554.5v2M1076.5 554.5v2" stroke="#00ff00" fill="none" stroke-linecap="square"/>
<path d="M1102.5 552.5h1v2v4h0h-1h-1v-4zM1104.5 558.5h0M1107.5 552.5h-1v2v4h0h1h1v-2h-1h-1" stroke="#00ff00" fill="none" stroke-linecap="square"/>
<path d="M1118.5 552.5h1v2v4h0h-1h-1v-4zM1120.5 558.5h0M1123.5 552.5h-1v2v4h0h1h1v-2h-1h-1" stroke="#00ff00" fill="none" stroke-linecap="square"/>
<path d="M927.5 566.5l1-2v6M929.5 564.5h2v2l-1 4" stroke="#00ff00" fill="none" stroke-linecap="square"/>
<path d="M990.5 564.5h4M991.5 565.5h2M991.5 564.5v5M992.5 566.5v3M993.5 564.5v4" stroke="#00ff00" fill="none" stroke-linecap="square"/>
<path d="M997.5 564.5h1v2h0v2h-1l-1-2h0zM997.5 568.5h-1v2h1h1h0v-2h0M1000.5 566.5h2M1000.5 568.5h2M1002.5 566.5l1-2v6M1005.5 566.5l1-2h0l1 2h0l-2 4h2" stroke="#00ff00" fill="none" stroke-linecap="square"/>
<path d="M1040.5 566.5l1-2v6" stroke="#00ff00" fill="none" stroke-linecap="square"/>
<path d="M1066.5 566.5l1-2v6M1070.5 564.5h-1v2v4h0h1h1v-2h-1h-1M1072.5 570.5v-6l1 4l1-4v6M1075.5 570.5v-4M1075.5 568.5v-2h1l1 2v2M1078.5 570.5v-6h1l1 2h0l-1 2h-1M1079.5 568.5l1 2" stroke="#00ff00" fill="none" stroke-linecap="square"/>
<path d="M1101.5 566.5v-2h1l1 2h0l-1 2h0M1102.5 568.5h1v2h-1h-1h0M1104.5 564.5h2v2l-2 4M1107.5 566.5l1-2v6" stroke="#00ff00" fill="none" stroke-linecap="square"/>
<path d="M1117.5 566.5v-2h1l1 2h0l-1 2h0M1118.5 568.5h1v2h-1h-1h0M1120.5 564.5h2v2l-2 4M1123.5 566.5l1-2v6" stroke="#00ff00" fill="none" stroke-linecap="square"/>
<path d="M927.5 576.5h1v6M931.5 576.5h-1h-1v4l1 2h1v-2h0v-2h-2" stroke="#00ff00" fill="none" stroke-linecap="square"/>
<path d="M990.5 577.5h3M990.5 578.5h4M991.5 580.5h3M990.5 581.5h4M993.5 578.5v3M994.5 578.5v2" stroke="#00ff00" fill="none" stroke-linecap="square"/>
<path d="M996.5 576.5h2h0v4v2h-2zM1000.5 582.5v-6l2 6v-6M1002.5 576.5h1v6M1007.5 578.5h-1h-1v-2h1h0h1v4l-1 2h0M1008.5 576.5h2h0v4v2h-2v-2v-4zM1012.5 576.5h0h1v4l-1 2h0l-1-2v-4zM1018.5 576.5h0h1v2h-1h0h-1v-2zM1018.5 578.5l-1 2h0l1 2h0l1-2h0l-1-2M1020.5 578.5h2M1020.5 580.5h2M1023.5 576.5h1v6M1026.5 576.5h0h1h1v2l-2 4h2" stroke="#00ff00" fill="none" stroke-linecap="square"/>
<path d="M1040.5 576.5h1v6" stroke="#00ff00" fill="none" stroke-linecap="square"/>
<path d="M1066.5 576.5h1v6M1070.5 576.5h-1h0v4v2h1l1-2h0l-1-2h-1M1072.5 582.5v-6l1 2l1-2v6M1075.5 582.5v-4M1075.5 578.5h0h1h1v4M1078.5 582.5v-6h1h1v2h-1h-1M1079.5 578.5l1 4" stroke="#00ff00" fill="none" stroke-linecap="square"/>
<path d="M1100.5 576.5h0v6M1104.5 576.5h-2h0v4v2h2v-2h0v-2h-2M1105.5 576.5h1v6M1109.5 582.5v-6l-1 4h2" stroke="#00ff00" fill="none" stroke-linecap="square"/>
<path d="M1116.5 576.5h0v6M1120.5 576.5h-2h0v4v2h2v-2h0v-2h-2M1121.5 576.5h1v6M1125.5 582.5v-6l-1 4h2" stroke="#00ff00" fill="none" stroke-linecap="square"/>
<path d="M1141.5 576.5v6h2M1144.5 578.5h2M1144.5 580.5h2M1147.5 576.5h1h0h1v2l-2 4h2M1150.5 576.5h2h0v2h0h-2h0v-2zM1150.5 578.5v2h0v2h2v-2h0v-2M1153.5 576.5h2h0l-1 6M1156.5 576.5h2h0v4v2h-2v-2v-4z" stroke="#00ff00" fill="none" stroke-linecap="square"/>
<path d="M927.5 588.5l1-2v6M931.5 586.5h-2v4h2h0v2h0h-2" stroke="#00ff00" fill="none" stroke-linecap="square"/>
<path d="M938.5 586.5v6M940.5 586.5v6M938.5 590.5h2M942.5 588.5v-2h-1l-1 2v4h1h1h0v-2h0M944.5 588.5v-2h1l1 2h0l-2 4h2M946.5 588.5l1-2v6M951.5 586.5h-2v4h1h1v2h-1h-1M952.5 588.5v-2h2v2h0l-2 4h2M955.5 588.5l1-2h0l1 2h0l-2 4h2M958.5 590.5h2M963.5 590.5h-1l-1-2h0l1-2h0l1 2v4h-1h0M966.5 586.5h-2v4h2h0v2h0h-2" stroke="#00ff00" fill="none" stroke-linecap="square"/>
<path d="M991.5 586.5h3M990.5 589.5h3M990.5 587.5v4M991.5 588.5v2M992.5 588.5v3M995.5 587.5h2M995.5 590.5h3M995.5 591.5h2M995.5 587.5v4M998.5 588.5v3M1000.5 587.5h4M1001.5 588.5h3M1000.5 591.5h4M1001.5 588.5v2M1002.5 587.5v3M1003.5 586.5v5M1004.5 588.5v2" stroke="#00ff00" fill="none" stroke-linecap="square"/>
<path d="M1006.5 592.5v-6h2v2h0v2h-2M1012.5 586.5h-2v6M1010.5 590.5h1M1012.5 590.5h2M1018.5 588.5l-1-2h-1v2h0v2h1h1v2h-1h-1h0M1018.5 586.5v6M1020.5 586.5v6M1018.5 590.5h2M1022.5 588.5v-2h1l1 2h0l-2 4h2M1025.5 586.5h1v2v4h0h-1h-1v-4zM1028.5 586.5h1l1 2v4h-1h-1h0v-4zM1030.5 590.5h2M1034.5 586.5h1l1 2v4h-1h-1h0v-4zM1036.5 592.5h0M1040.5 586.5h-1l-1 2v4h1h1h0v-2h0h-2" stroke="#00ff00" fill="none" stroke-linecap="square"/>
<path d="M1040.5 588.5l1-2v6" stroke="#00ff00" fill="none" stroke-linecap="square"/>
<path d="M1069.5 587.5h2M1069.5 589.5h2M1069.5 591.5h2M1068.5 586.5v4M1069.5 586.5v5M1072.5 587.5v3M1074.5 586.5h3M1074.5 587.5h3M1073.5 588.5h3M1073.5 590.5h3M1073.5 591.5h4M1073.5 587.5v4M1077.5 586.5v5" stroke="#00ff00" fill="none" stroke-linecap="square"/>
<path d="M1101.5 588.5l1-2v6M1105.5 586.5h-2v4h2h0v2h0h-2M1107.5 586.5h1v2h0v2h-1l-1-2h0zM1107.5 590.5h-1v2h1h1h0v-2h0" stroke="#00ff00" fill="none" stroke-linecap="square"/>
<path d="M1117.5 588.5l1-2v6M1121.5 586.5h-2v4h2h0v2h0h-2M1123.5 586.5h1v2h0v2h-1l-1-2h0zM1123.5 590.5h-1v2h1h1h0v-2h0" stroke="#00ff00" fill="none" stroke-linecap="square"/>
<path d="M927.5 598.5h1v6M931.5 604.5v-6l-2 4h2" stroke="#00ff00" fill="none" stroke-linecap="square"/>
<path d="M940.5 598.5v4l-1 2h-1v-2M941.5 598.5v6M944.5 598.5h0h-1h-1v2h1h1v2h0v2h-1l-1-2M948.5 600.5h2v2h0v2h-2v-6h2h0v2h0M954.5 598.5h1h1h0v2l-2 4h2M958.5 598.5h0h1h1v2l-2 4h2M960.5 598.5h1v6M963.5 598.5h1h0h1v2l-2 4h2" stroke="#00ff00" fill="none" stroke-linecap="square"/>
<path d="M991.5 598.5h2M991.5 601.5h2M990.5 602.5h3M991.5 598.5v5" stroke="#00ff00" fill="none" stroke-linecap="square"/>
<path d="M996.5 598.5h2h0v4v2h-2zM1000.5 604.5v-6l2 6v-6M1002.5 598.5h1v6M1006.5 598.5h0h1v4l-1 2h0l-1-2v-4zM1008.5 598.5h2h0v4v2h-2v-2v-4z" stroke="#00ff00" fill="none" stroke-linecap="square"/>
<path d="M1040.5 598.5h0h2h0v2l-2 4h2" stroke="#00ff00" fill="none" stroke-linecap="square"/>
<path d="M1066.5 598.5h1v6M1070.5 598.5h-1h0v4v2h1l1-2h0l-1-2h-1M1072.5 604.5v-6l1 2l1-2v6M1075.5 604.5v-4M1075.5 600.5h0h1h1v4M1078.5 604.5v-6h1h1v2h-1h-1M1079.5 600.5l1 4" stroke="#00ff00" fill="none" stroke-linecap="square"/>
<path d="M1101.5 604.5v-6l-1 4h2M1103.5 604.5h0M1106.5 598.5h-2v2h2v2h0v2h-2M1107.5 598.5h2h0l-1 6" stroke="#00ff00" fill="none" stroke-linecap="square"/>
<path d="M1118.5 600.5h-2h0v-2h0h1h1v4l-1 2h-1M1119.5 604.5h0M1121.5 598.5h0v6M1125.5 604.5v-6l-2 4h2" stroke="#00ff00" fill="none" stroke-linecap="square"/>
<path d="M927.5 610.5l1-2v6M929.5 610.5l1-2h1v2h0v2h-1M931.5 612.5h0v2h0h-1h-1" stroke="#00ff00" fill="none" stroke-linecap="square"/>
<path d="M991.5 609.5h2M990.5 610.5h3M990.5 610.5v2" stroke="#00ff00" fill="none" stroke-linecap="square"/>
<path d="M997.5 610.5h1h0v2v2h-1l-1-2v-2zM998.5 608.5v7M1000.5 610.5v-2v6M1002.5 608.5h2v2v4h0h-2h0v-4zM1006.5 608.5h0l1 2h0l-1 2h0l-1-2h0zM1006.5 612.5h-1v2h1h0h1v-2h-1M1008.5 610.5l2 4M1010.5 610.5l-2 4M1012.5 608.5h0l-1 2v4h1h0h1v-2h-1h-1" stroke="#00ff00" fill="none" stroke-linecap="square"/>
<path d="M1040.5 610.5l1-2v6" stroke="#00ff00" fill="none" stroke-linecap="square"/>
<path d="M1070.5 610.5l1-2h1v2h0l-2 4h2M1074.5 608.5h1l1 2v4h-1h-1h0v-4z" stroke="#00ff00" fill="none" stroke-linecap="square"/>
<path d="M1101.5 610.5l1-2h1v2h0v2h-1M1103.5 612.5h0v2h0h-1h-1M1104.5 614.5h0M1106.5 610.5l1-2v6" stroke="#00ff00" fill="none" stroke-linecap="square"/>
<path d="M1117.5 610.5l1-2h1v2h0v2h-1M1119.5 612.5h0v2h0h-1h-1M1120.5 614.5h0M1122.5 610.5l1-2v6" stroke="#00ff00" fill="none" stroke-linecap="square"/>
<path d="M1143.5 608.5v6h2M1146.5 610.5h2M1146.5 612.5h2M1149.5 610.5l1-2v6M1152.5 608.5h1v2v4h0h-1h-1v-4zM1155.5 608.5h1v2v4h0h-1h-1v-4z" stroke="#00ff00" fill="none" stroke-linecap="square"/>
<path d="M927.5 620.5h1v6M929.5 620.5h1h1h0v2l-2 4h2" stroke="#00ff00" fill="none" stroke-linecap="square"/>
<path d="M991.5 620.5h2M991.5 623.5h2M991.5 624.5h2M990.5 625.5h4M990.5 621.5v4M991.5 622.5v3M992.5 621.5v3M993.5 620.5v5" stroke="#00ff00" fill="none" stroke-linecap="square"/>
<path d="M997.5 620.5h1v2v2h0h-1h-1v-2zM998.5 619.5v7M1000.5 620.5h0v6M1004.5 620.5h-2v2h2v2h0v2h-2M1007.5 622.5h-1h-1v-2h1h0h1v4l-1 2h0M1008.5 622.5l2 4M1010.5 622.5l-2 4M1012.5 620.5h0h-1v4l1 2h0l1-2h0l-1-2h-1" stroke="#00ff00" fill="none" stroke-linecap="square"/>
<path d="M1040.5 620.5h1v6" stroke="#00ff00" fill="none" stroke-linecap="square"/>
<path d="M1070.5 620.5h1h1h0v2l-2 4h2M1074.5 620.5h1h1v4l-1 2h-1v-2v-4z" stroke="#00ff00" fill="none" stroke-linecap="square"/>
<path d="M1102.5 620.5h-2v2h1l1 2h0l-1 2h-1M1103.5 626.5h0M1106.5 620.5h-2v2h2v2h0v2h-2M1109.5 620.5h-2v2h2v2h0v2h-2" stroke="#00ff00" fill="none" stroke-linecap="square"/>
<path d="M1118.5 620.5h-2v2h1l1 2h0l-1 2h-1M1119.5 626.5h0M1122.5 620.5h-2v2h2v2h0v2h-2M1125.5 620.5h-2v2h2v2h0v2h-2" stroke="#00ff00" fill="none" stroke-linecap="square"/>
<path d="M1142.5 620.5v6h2M1146.5 622.5h2M1146.5 624.5h2M1148.5 620.5h1h1h0v2l-2 4h2M1152.5 620.5h0h1h1v2h-1h-1M1153.5 622.5l1 2h0l-1 2h-1v-2M1155.5 620.5h1h0v4v2h-1l-1-2v-4z" stroke="#00ff00" fill="none" stroke-linecap="square"/>
<path d="M927.5 632.5l1-2v6M930.5 632.5v-2v6" stroke="#00ff00" fill="none" stroke-linecap="square"/>
<path d="M940.5 632.5l-1-2h-1v2v4h0h1h1v-2h-2M940.5 634.5h2h0v2h0h-2v-6h2v2h0v2M945.5 630.5h-1v2v4h0h1h1v-2h-1h-1M946.5 632.5l1-2v6M949.5 630.5h2v2l-1 4M952.5 630.5h2v2v4h0h-2h0v-4zM955.5 634.5h2M958.5 630.5h2v2h0v2h-2v-2h0zM958.5 634.5h0v2h0h2h0v-2h0M962.5 630.5h0l-1 2v4h1h0h1v-2h-1h-1" stroke="#00ff00" fill="none" stroke-linecap="square"/>
<path d="M991.5 630.5h3M991.5 632.5h3M990.5 634.5h4M991.5 635.5h3M992.5 631.5v4M994.5 630.5v4" stroke="#00ff00" fill="none" stroke-linecap="square"/>
<path d="M996.5 636.5v-6l2 4v-4v6M1000.5 632.5v-2h1l1 2h0l-2 4h2M1003.5 630.5h1v2v4h0h-1h-1v-4z" stroke="#00ff00" fill="none" stroke-linecap="square"/>
<path d="M1040.5 630.5h2v2h0v2h-2v-2h0zM1040.5 634.5h0v2h0h2h0v-2h0" stroke="#00ff00" fill="none" stroke-linecap="square"/>
<path d="M1069.5 633.5h2M1069.5 635.5h3M1069.5 632.5v3M1070.5 630.5v4M1071.5 631.5v4M1074.5 630.5h2M1074.5 635.5h2M1074.5 630.5v5M1075.5 631.5v4M1076.5 630.5v5M1077.5 631.5v4" stroke="#00ff00" fill="none" stroke-linecap="square"/>
<path d="M1100.5 630.5h1l1 2v4h-1h-1h0v-4zM1103.5 636.5h0M1105.5 630.5h1v2v4h0h-1h-1v-4zM1109.5 630.5h-2v4h2h0v2h0h-2" stroke="#00ff00" fill="none" stroke-linecap="square"/>
<path d="M1116.5 630.5h1l1 2v4h-1h-1h0v-4zM1119.5 636.5h0M1122.5 636.5v-6l-2 4h2M1123.5 632.5l1-2h1v2h0l-2 4h2" stroke="#00ff00" fill="none" stroke-linecap="square"/>
<path d="M927.5 642.5h1v6M930.5 642.5h1h0v4v2h-1l-1-2v-4z" stroke="#00ff00" fill="none" stroke-linecap="square"/>
<path d="M940.5 642.5h-1h-1h0v4v2h1l1-2v-2h-2M940.5 644.5h2v2h0v2h-2v-6h2h0v2h0M946.5 642.5h-2v2h1l1 2h0l-1 2h-1M946.5 642.5h2h0l-1 6M950.5 642.5h1h1v2h-1h-1h0v-2zM950.5 644.5v2h0v2h1l1-2h0l-1-2M952.5 642.5h1h1h0v2l-2 4h2M956.5 644.5h2M959.5 642.5h1h0v2h0h-1h-1v-2zM959.5 644.5l-1 2h0l1 2h1v-2h0v-2M963.5 642.5h-1h0v4v2h1l1-2h0l-1-2h-1" stroke="#00ff00" fill="none" stroke-linecap="square"/>
<path d="M991.5 642.5h2M990.5 643.5h4M990.5 644.5h3M990.5 645.5h4M990.5 647.5h3M990.5 642.5v5" stroke="#00ff00" fill="none" stroke-linecap="square"/>
<path d="M996.5 648.5v-6l2 2v-2v6M1000.5 642.5h0h1h1v2l-2 4h2M1003.5 642.5h1h0v4v2h-1l-1-2v-4zM1006.5 644.5l2 4M1008.5 644.5l-2 4M1008.5 642.5h2h0l-1 6M1012.5 642.5h1h1v4l-1 2h-1v-2v-4z" stroke="#00ff00" fill="none" stroke-linecap="square"/>
<path d="M1040.5 642.5h2h0v2h0h-2h0v-2zM1040.5 644.5v2h0v2h2v-2h0v-2" stroke="#00ff00" fill="none" stroke-linecap="square"/>
<path d="M1070.5 642.5h1h1v2h-1h-1h0v-2zM1070.5 644.5v2h0v2h1l1-2h0l-1-2M1073.5 648.5h0M1075.5 642.5h1h0v2h0h-1h-1v-2zM1075.5 644.5l-1 2h0l1 2h1v-2h0v-2" stroke="#00ff00" fill="none" stroke-linecap="square"/>
<path d="M1100.5 642.5h1h1v4l-1 2h-1v-2v-4zM1103.5 648.5h0M1104.5 642.5h1h1h0v2l-2 4h2M1107.5 642.5h1h1h0v2h0h-1M1109.5 644.5v2h0v2h-1l-1-2" stroke="#00ff00" fill="none" stroke-linecap="square"/>
<path d="M1116.5 642.5h1v6M1118.5 648.5h0M1121.5 642.5h1h0v2h0h-1h-1v-2zM1121.5 644.5l-1 2h0l1 2h1v-2h0v-2M1125.5 648.5v-6l-2 4h2" stroke="#00ff00" fill="none" stroke-linecap="square"/>
<path d="M930.5 656.5h-2v-2h0v-2h2v2v4h0h-2" stroke="#00ff00" fill="none" stroke-linecap="square"/>
<path d="M940.5 652.5v6h-1h-1h0M941.5 652.5v6M944.5 654.5v-2h-1l-1 2h0l1 2h1h0v2h0h-1h-1M948.5 656.5h2h0v2h0h-2v-6h2v2h0v2M954.5 654.5l1-2h1v2h0l-2 4h2M958.5 654.5v-2h1l1 2h0l-2 4h2M960.5 654.5l1-2v6M963.5 654.5l1-2h0l1 2h0l-2 4h2" stroke="#00ff00" fill="none" stroke-linecap="square"/>
<path d="M990.5 653.5h3M991.5 654.5h3M990.5 657.5h4M990.5 653.5v4M991.5 653.5v3M993.5 652.5v4" stroke="#00ff00" fill="none" stroke-linecap="square"/>
<path d="M996.5 652.5h2v2v4h0h-2zM1000.5 658.5v-6l2 6v-6M1002.5 654.5l1-2v6M1007.5 652.5h-2v4h1h1v2h-1h-1M1008.5 652.5h2v2v4h0h-2h0v-4z" stroke="#00ff00" fill="none" stroke-linecap="square"/>
<path d="M1040.5 654.5l1-2v6" stroke="#00ff00" fill="none" stroke-linecap="square"/>
<path d="M1066.5 654.5l1-2v6M1070.5 652.5h-1v2v4h0h1h1v-2h-1h-1M1072.5 658.5v-6l1 4l1-4v6M1075.5 658.5v-4M1075.5 656.5v-2h1l1 2v2M1078.5 658.5v-6h1l1 2h0l-1 2h-1M1079.5 656.5l1 2" stroke="#00ff00" fill="none" stroke-linecap="square"/>
<path d="M1102.5 652.5h1v2h0v2h-1l-1-2h0zM1102.5 656.5h-1v2h1h1h0v-2h0M1104.5 658.5h0M1106.5 654.5v-2h1l1 2h0l-2 4h2" stroke="#00ff00" fill="none" stroke-linecap="square"/>
<path d="M1118.5 652.5h1v2h0v2h-1l-1-2h0zM1118.5 656.5h-1v2h1h1h0v-2h0M1120.5 658.5h0M1122.5 654.5v-2h1l1 2h0l-2 4h2" stroke="#00ff00" fill="none" stroke-linecap="square"/>
<path d="M928.5 664.5h2h0v2h0h-2h0v-2zM928.5 666.5v2h0v2h2v-2h0v-2" stroke="#00ff00" fill="none" stroke-linecap="square"/>
<path d="M991.5 664.5h2M990.5 666.5h3M991.5 667.5h3M990.5 669.5h3M993.5 666.5v2M994.5 664.5v5" stroke="#00ff00" fill="none" stroke-linecap="square"/>
<path d="M997.5 664.5h1v2v2h0h-1h-1v-2zM998.5 663.5v7M1000.5 664.5h0h1h1v2l-2 4h2M1002.5 664.5h1v6M1007.5 664.5h-2v2h1l1 2h0l-1 2h-1M1008.5 670.5l2-6M1012.5 664.5h0l1 2v2h-1h0h-1v-2zM1012.5 663.5v7M1014.5 664.5h1v6M1018.5 664.5h-1h-1v4l1 2h1v-2h0v-2h-2M1020.5 664.5h1h1v4l-1 2h-1v-2v-4zM1022.5 666.5l2 4M1024.5 666.5l-2 4M1026.5 664.5h0h1h1v2h-1h-1M1027.5 666.5l1 2h0l-1 2h-1v-2" stroke="#00ff00" fill="none" stroke-linecap="square"/>
<path d="M1040.5 664.5h1v6" stroke="#00ff00" fill="none" stroke-linecap="square"/>
<path d="M1060.5 664.5h3M1060.5 665.5h3M1060.5 666.5h3M1060.5 667.5h4M1060.5 664.5v4M1062.5 665.5v3M1063.5 664.5v5M1064.5 664.5v4M1066.5 664.5h2M1066.5 665.5h2M1066.5 666.5h2M1065.5 668.5h4M1065.5 666.5v3M1067.5 666.5v3M1071.5 666.5h3M1070.5 667.5h3M1070.5 668.5h3M1070.5 666.5v2M1072.5 664.5v5M1073.5 666.5v3M1074.5 665.5v4M1075.5 664.5h4M1075.5 665.5h4M1075.5 666.5h3M1075.5 667.5h4M1075.5 668.5h4M1075.5 669.5h4M1075.5 666.5v2M1077.5 664.5v4M1079.5 664.5v4" stroke="#00ff00" fill="none" stroke-linecap="square"/>
<path d="M928.5 674.5h2v2l-2 4" stroke="#00ff00" fill="none" stroke-linecap="square"/>
<path d="M940.5 674.5v6h-1h-1h0M941.5 674.5v6M944.5 676.5v-2h-1l-1 2h0l1 2h1h0v2h0h-1h-1M948.5 678.5h2h0v2h0h-2v-6h2v2h0v2M954.5 676.5l1-2h1v2h0l-2 4h2M958.5 676.5v-2h1l1 2h0l-2 4h2M960.5 676.5l1-2v6M963.5 676.5l1-2h0l1 2h0l-2 4h2" stroke="#00ff00" fill="none" stroke-linecap="square"/>
<path d="M991.5 674.5h3M990.5 676.5h3M991.5 677.5h3M991.5 679.5h3M991.5 675.5v3M992.5 674.5v5M993.5 674.5v4M994.5 674.5v5" stroke="#00ff00" fill="none" stroke-linecap="square"/>
<path d="M996.5 674.5h2v2v4h0h-2zM1000.5 680.5v-6l2 6v-6M1002.5 676.5l1-2v6M1007.5 674.5h-2v4h1h1v2h-1h-1M1008.5 674.5h2v2v4h0h-2h0v-4z" stroke="#00ff00" fill="none" stroke-linecap="square"/>
<path d="M1040.5 676.5v-2h2v2h0l-2 4h2" stroke="#00ff00" fill="none" stroke-linecap="square"/>
<path d="M1066.5 676.5l1-2v6M1070.5 674.5h-1v2v4h0h1h1v-2h-1h-1M1072.5 680.5v-6l1 4l1-4v6M1075.5 680.5v-4M1075.5 678.5v-2h1l1 2v2M1078.5 680.5v-6h1l1 2h0l-1 2h-1M1079.5 678.5l1 2" stroke="#00ff00" fill="none" stroke-linecap="square"/>
<path d="M1100.5 674.5h2v2l-2 4M1103.5 680.5h0M1106.5 674.5h-1v2v4h0h1h1v-2h-1h-1M1108.5 676.5v-2v6" stroke="#00ff00" fill="none" stroke-linecap="square"/>
<path d="M1114.5 676.5l1-2v6M1119.5 674.5h-2v4h1h1v2h-1h-1M1120.5 680.5h0M1122.5 676.5v-2h1l1 2h0l-2 4h2M1125.5 676.5v-2h1l1 2h0l-2 4h2" stroke="#00ff00" fill="none" stroke-linecap="square"/>
<path d="M930.5 686.5h-2h0v4v2h2v-2h0v-2h-2" stroke="#00ff00" fill="none" stroke-linecap="square"/>
<path d="M991.5 687.5h2M990.5 689.5h3M990.5 690.5h3M991.5 691.5h2M992.5 687.5v3M994.5 686.5v4" stroke="#00ff00" fill="none" stroke-linecap="square"/>
<path d="M997.5 686.5h1v2v2h0h-1h-1v-2zM998.5 685.5v7M1000.5 686.5h0v6M1004.5 686.5h-2v2h2v2h0v2h-2M1007.5 688.5h-1h-1v-2h1h0h1v4l-1 2h0M1008.5 688.5l2 4M1010.5 688.5l-2 4M1012.5 686.5h0h-1v4l1 2h0l1-2h0l-1-2h-1" stroke="#00ff00" fill="none" stroke-linecap="square"/>
<path d="M1040.5 686.5h1v6" stroke="#00ff00" fill="none" stroke-linecap="square"/>
<path d="M1070.5 686.5h1h1h0v2l-2 4h2M1074.5 686.5h1h1v4l-1 2h-1v-2v-4z" stroke="#00ff00" fill="none" stroke-linecap="square"/>
<path d="M1103.5 692.5v-6l-2 4h2M1104.5 692.5h0M1107.5 686.5h-1h0v4v2h1l1-2h0l-1-2h-1" stroke="#00ff00" fill="none" stroke-linecap="square"/>
<path d="M1119.5 692.5v-6l-2 4h2M1120.5 692.5h0M1123.5 686.5h-1h0v4v2h1l1-2h0l-1-2h-1" stroke="#00ff00" fill="none" stroke-linecap="square"/>
<path d="M1143.5 686.5v6h2M1146.5 688.5h2M1146.5 690.5h2M1149.5 686.5h1v6M1153.5 686.5h-2v2h2v2h0v2h-2M1155.5 686.5h1h0v4v2h-1l-1-2v-4z" stroke="#00ff00" fill="none" stroke-linecap="square"/>
<path d="M930.5 698.5h-2v2h2v2h0v2h-2" stroke="#00ff00" fill="none" stroke-linecap="square"/>
<path d="M940.5 698.5v4l-1 2h-1v-2M940.5 700.5h2v2h0v2h-2v-6h2h0v2h0M944.5 704.5l2-6M946.5 698.5h2M948.5 698.5v6M951.5 704.5v-6l-1 4h2M952.5 698.5h2h0l-1 6M957.5 704.5v-6l-1 4h2M960.5 698.5h-1h-1v4l1 2h1v-2h0v-2h-2M962.5 700.5h2M964.5 698.5h1h1h0v2l-2 4h2M968.5 698.5h1h1v4l-1 2h-1v-2v-4zM971.5 698.5h1h0v4v2h-1l-1-2v-4zM974.5 698.5h0h1h1v2l-2 4h2" stroke="#00ff00" fill="none" stroke-linecap="square"/>
<path d="M990.5 699.5h4M991.5 702.5h2M990.5 703.5h4M990.5 699.5v4M992.5 699.5v4M994.5 698.5v5" stroke="#00ff00" fill="none" stroke-linecap="square"/>
<path d="M998.5 698.5h-2v6h2M996.5 700.5h2M1000.5 698.5v6M1002.5 698.5v6M1000.5 700.5h2M1002.5 700.5h2v2h0v2h-2v-6h2h0v2h0M1008.5 698.5h1v6M1013.5 700.5h-1h-1v-2h1h0h1v4l-1 2h0M1014.5 698.5h2h0v4v2h-2v-2v-4zM1018.5 698.5h0h1v4l-1 2h0l-1-2v-4zM1020.5 700.5l2 4M1022.5 700.5l-2 4M1023.5 698.5h1v6M1026.5 698.5h0h1h1v2l-2 4h2" stroke="#00ff00" fill="none" stroke-linecap="square"/>
<path d="M1040.5 698.5h1v6" stroke="#00ff00" fill="none" stroke-linecap="square"/>
<path d="M1066.5 698.5h1v6M1070.5 698.5h-1h0v4v2h1l1-2h0l-1-2h-1M1072.5 704.5v-6l1 2l1-2v6M1075.5 704.5v-4M1075.5 700.5h0h1h1v4M1078.5 704.5v-6h1h1v2h-1h-1M1079.5 700.5l1 4" stroke="#00ff00" fill="none" stroke-linecap="square"/>
<path d="M1102.5 704.5v-6l-1 4h2M1104.5 698.5h0v6M1108.5 698.5h-2v2h2v2h0v2h-2" stroke="#00ff00" fill="none" stroke-linecap="square"/>
<path d="M1118.5 704.5v-6l-1 4h2M1120.5 698.5h0v6M1124.5 698.5h-2v2h2v2h0v2h-2" stroke="#00ff00" fill="none" stroke-linecap="square"/>
<path d="M930.5 714.5v-6l-2 4h2" stroke="#00ff00" fill="none" stroke-linecap="square"/>
<path d="M991.5 708.5h3M991.5 710.5h3M990.5 711.5h4M993.5 710.5v3M994.5 708.5h4M995.5 710.5h3M994.5 711.5h3M995.5 712.5h2M995.5 710.5v3M996.5 708.5v4M997.5 708.5v4" stroke="#00ff00" fill="none" stroke-linecap="square"/>
<path d="M1002.5 710.5v-2h1l1 2h0l-1 2h-1M1003.5 712.5h1v2h-1h-1h0M1004.5 710.5l2 4M1006.5 710.5l-2 4M1009.5 714.5v-6l-1 4h2" stroke="#00ff00" fill="none" stroke-linecap="square"/>
<path d="M1042.5 714.5v-6l-2 4h2" stroke="#00ff00" fill="none" stroke-linecap="square"/>
<path d="M1065.5 708.5h1v2v4h0h-1h-1v-4zM1068.5 710.5v-2h1l1 2h0l-2 4h2M1070.5 710.5l1-2h1v2h0v2h0M1072.5 712.5h0v2h0h-1h-1M1076.5 708.5h-2v4h1h1v2h-1h-1M1076.5 712.5h2M1080.5 714.5v-6l2 6M1080.5 712.5h1" stroke="#00ff00" fill="none" stroke-linecap="square"/>
<path d="M1102.5 708.5h1v2v4h0h-1h-1v-4zM1104.5 714.5h0M1106.5 710.5v-2h1l1 2h0l-1 2h0M1107.5 712.5h1v2h-1h-1h0" stroke="#00ff00" fill="none" stroke-linecap="square"/>
<path d="M1117.5 710.5l1-2v6M1120.5 714.5h0M1122.5 710.5v-2h1l1 2h0l-2 4h2" stroke="#00ff00" fill="none" stroke-linecap="square"/>
<path d="M928.5 720.5h0h2h0v2h0h-1M930.5 722.5v2h0v2h-2v-2" stroke="#00ff00" fill="none" stroke-linecap="square"/>
<path d="M940.5 720.5v4l-1 2h-1v-2M941.5 720.5v6M944.5 720.5h0h-1h-1v2h1h1v2h0v2h-1l-1-2M948.5 722.5h2v2h0v2h-2v-6h2h0v2h0M954.5 720.5h1h1h0v2l-2 4h2M958.5 720.5h0h1h1v2l-2 4h2M960.5 720.5h1v6M963.5 720.5h1h0h1v2l-2 4h2" stroke="#00ff00" fill="none" stroke-linecap="square"/>
<path d="M991.5 721.5h3M990.5 722.5h3M990.5 724.5h3M991.5 720.5v4M992.5 721.5v3M994.5 720.5v5" stroke="#00ff00" fill="none" stroke-linecap="square"/>
<path d="M996.5 720.5h2h0v4v2h-2zM1000.5 726.5v-6l2 6v-6M1002.5 720.5h1h1h0v2l-2 4h2M1006.5 720.5h1h1v4l-1 2h-1v-2v-4z" stroke="#00ff00" fill="none" stroke-linecap="square"/>
<path d="M1042.5 720.5h-2v2h2v2h0v2h-2" stroke="#00ff00" fill="none" stroke-linecap="square"/>
<path d="M1066.5 720.5h1v6M1070.5 720.5h-1h0v4v2h1l1-2h0l-1-2h-1M1072.5 726.5v-6l1 2l1-2v6M1075.5 726.5v-4M1075.5 722.5h0h1h1v4M1078.5 726.5v-6h1h1v2h-1h-1M1079.5 722.5l1 4" stroke="#00ff00" fill="none" stroke-linecap="square"/>
<path d="M1100.5 720.5h1h1v4l-1 2h-1v-2v-4zM1103.5 726.5h0M1106.5 722.5h-1h-1v-2h1h1h0v4v2h-1M1109.5 726.5v-6l-2 4h2" stroke="#00ff00" fill="none" stroke-linecap="square"/>
<path d="M1119.5 726.5v-6l-2 4h2M1120.5 726.5h0M1122.5 720.5h2h0l-2 6" stroke="#00ff00" fill="none" stroke-linecap="square"/>
<path d="M928.5 732.5v-2h2v2h0l-2 4h2" stroke="#00ff00" fill="none" stroke-linecap="square"/>
<path d="M990.5 731.5h3M991.5 732.5h2M990.5 734.5h3M990.5 732.5v3M992.5 731.5v3M994.5 732.5v2M994.5 732.5h4M994.5 733.5h4M995.5 734.5h3M995.5 735.5h3" stroke="#00ff00" fill="none" stroke-linecap="square"/>
<path d="M1002.5 732.5v-2h1l1 2h0l-2 4h2M1006.5 730.5h-2v4h2h0v2h0h-2M1008.5 732.5l2 4M1010.5 732.5l-2 4M1010.5 732.5l1-2h1v2h0v2h0M1012.5 734.5h0v2h0h-1h-1M1014.5 736.5h0M1017.5 730.5h-2v4h2h0v2h0h-2" stroke="#00ff00" fill="none" stroke-linecap="square"/>
<path d="M1042.5 730.5h-2v4h2h0v2h0h-2" stroke="#00ff00" fill="none" stroke-linecap="square"/>
<path d="M1070.5 732.5l1-2h1v2h0l-2 4h2M1074.5 730.5h1l1 2v4h-1h-1h0v-4z" stroke="#00ff00" fill="none" stroke-linecap="square"/>
<path d="M1100.5 730.5h1l1 2v4h-1h-1h0v-4zM1103.5 736.5h0M1105.5 730.5h1v2h0v2h-1l-1-2h0zM1105.5 734.5h-1v2h1h1h0v-2h0M1109.5 730.5h-1l-1 2v4h1h1h0v-2h0h-2" stroke="#00ff00" fill="none" stroke-linecap="square"/>
<path d="M1119.5 736.5v-6l-2 4h2M1120.5 736.5h0M1122.5 732.5v-2h1l1 2h0l-1 2h0M1123.5 734.5h1v2h-1h-1h0" stroke="#00ff00" fill="none" stroke-linecap="square"/>
<path d="M928.5 742.5h1v6" stroke="#00ff00" fill="none" stroke-linecap="square"/>
<path d="M991.5 742.5h2M991.5 744.5h2M991.5 746.5h3M990.5 747.5h4M990.5 743.5v4" stroke="#00ff00" fill="none" stroke-linecap="square"/>
<path d="M996.5 744.5h2" stroke="#00ff00" fill="none" stroke-linecap="square"/>
<path d="M1042.5 742.5h-2v2h2v2h0v2h-2" stroke="#00ff00" fill="none" stroke-linecap="square"/>
<path d="M1070.5 742.5h1h1h0v2l-2 4h2M1074.5 742.5h1h1v4l-1 2h-1v-2v-4z" stroke="#00ff00" fill="none" stroke-linecap="square"/>
<path d="M1102.5 742.5h1h0v4v2h-1l-1-2v-4zM1104.5 748.5h0M1108.5 744.5h-2h0v-2h0h1h1v4l-1 2h-1" stroke="#00ff00" fill="none" stroke-linecap="square"/>
<path d="M1119.5 748.5v-6l-2 4h2M1120.5 748.5h0M1124.5 742.5h-2v2h1l1 2h0l-1 2h-1" stroke="#00ff00" fill="none" stroke-linecap="square"/>
<path d="M923.5 758.5h2M922.5 760.5h4M923.5 761.5h2M923.5 758.5v2M928.5 759.5h3M929.5 760.5h2M929.5 761.5h2M929.5 762.5h2M928.5 758.5v2M929.5 758.5v2M930.5 758.5v3M931.5 757.5v4M932.5 757.5v5" stroke="#00ff00" fill="none" stroke-linecap="square"/>
<path d="M954.5 756.5h3M954.5 758.5h3M954.5 760.5h2M955.5 761.5h1M957.5 758.5v4M966.5 756.5h2M967.5 757.5h1M966.5 758.5h3M967.5 760.5h2M966.5 761.5h2M967.5 757.5v5" stroke="#00ff00" fill="none" stroke-linecap="square"/>
<path d="M1002.5 756.5h3M1002.5 757.5h3M1002.5 761.5h3M1003.5 762.5h2M1003.5 757.5v4M1015.5 757.5h2M1014.5 759.5h3M1015.5 760.5h1M1014.5 761.5h2M1015.5 762.5h1M1014.5 757.5v4M1016.5 758.5v2M1017.5 756.5v4" stroke="#00ff00" fill="none" stroke-linecap="square"/>
<path d="M1035.5 756.5h2M1034.5 762.5h3M1034.5 756.5v5M1035.5 758.5v2M1041.5 756.5h3M1040.5 757.5h4M1040.5 761.5h3" stroke="#00ff00" fill="none" stroke-linecap="square"/>
<path d="M1063.5 756.5h1M1063.5 759.5h2M1062.5 760.5h2M1062.5 761.5h2M1062.5 758.5v4M1074.5 756.5h2M1074.5 757.5h2M1075.5 758.5h1M1075.5 759.5h1M1074.5 761.5h3M1074.5 758.5v4" stroke="#00ff00" fill="none" stroke-linecap="square"/>
<path d="M1101.5 750.5h1M1101.5 752.5h1M1101.5 754.5h2M1101.5 751.5v3M1104.5 750.5h3M1104.5 753.5h2M1105.5 754.5h2M1104.5 755.5h3M1104.5 751.5v3M1106.5 751.5v4" stroke="#00ff00" fill="none" stroke-linecap="square"/>
<path d="M1114.5 750.5h2M1114.5 751.5h2M1115.5 752.5h2M1115.5 754.5h1M1117.5 751.5v3M1121.5 752.5h2M1120.5 753.5h2M1121.5 754.5h1M1122.5 752.5v2" stroke="#00ff00" fill="none" stroke-linecap="square"/>
<path d="M1104.5 765.5h2M1104.5 761.5v3M1107.5 761.5v3M1112.5 760.5h2M1112.5 761.5h3M1112.5 763.5h2M1112.5 760.5v5M1113.5 762.5v2M1114.5 760.5v5M1115.5 760.5v5" stroke="#00ff00" fill="none" stroke-linecap="square"/>
<path d="M1141.5 754.5h2M1141.5 760.5h1M1141.5 755.5v4M1142.5 756.5v3M1143.5 756.5v3M1153.5 754.5h2M1153.5 755.5h2M1152.5 757.5h3M1152.5 758.5h3M1153.5 759.5h1M1154.5 756.5v4" stroke="#00ff00" fill="none" stroke-linecap="square"/>
<line x1="740.5" y1="691.5" x2="921.5" y2="691.5" stroke="#ffffff" stroke-width="1"/>
<line x1="740.5" y1="707.5" x2="921.5" y2="707.5" stroke="#ffffff" stroke-width="1"/>
<line x1="740.5" y1="718.5" x2="921.5" y2="718.5" stroke="#ffffff" stroke-width="1"/>
<line x1="740.5" y1="729.5" x2="921.5" y2="729.5" stroke="#ffffff" stroke-width="1"/>
<line x1="740.5" y1="740.5" x2="921.5" y2="740.5" stroke="#ffffff" stroke-width="1"/>
<line x1="740.5" y1="751.5" x2="921.5" y2="751.5" stroke="#ffffff" stroke-width="1"/>
<line x1="740.5" y1="762.5" x2="921.5" y2="762.5" stroke="#ffffff" stroke-width="1"/>
<line x1="740.5" y1="773.5" x2="921.5" y2="773.5" stroke="#ffffff" stroke-width="1"/>
<line x1="740.5" y1="784.5" x2="921.5" y2="784.5" stroke="#ffffff" stroke-width="1"/>
<line x1="740.5" y1="795.5" x2="921.5" y2="795.5" stroke="#ffffff" stroke-width="1"/>
<line x1="740.5" y1="807.5" x2="921.5" y2="807.5" stroke="#ffffff" stroke-width="1"/>
<line x1="740.5" y1="818.5" x2="921.5" y2="818.5" stroke="#ffffff" stroke-width="1"/>
<line x1="740.5" y1="829.5" x2="921.5" y2="829.5" stroke="#ffffff" stroke-width="1"/>
<line x1="740.5" y1="691.5" x2="740.5" y2="829.5" stroke="#ffffff" stroke-width="1"/>
<line x1="814.5" y1="691.5" x2="814.5" y2="829.5" stroke="#ffffff" stroke-width="1"/>
<line x1="868.5" y1="691.5" x2="868.5" y2="807.5" stroke="#ffffff" stroke-width="1"/>
<path d="M820.5 685.5h3M821.5 686.5h2M821.5 687.5h2M821.5 688.5h1M821.5 689.5h2M820.5 686.5v2M822.5 685.5v3M823.5 686.5v2M825.5 684.5h2M824.5 685.5h2M824.5 686.5h3M824.5 687.5h3M824.5 689.5h2M824.5 684.5v4M825.5 686.5v2M827.5 686.5v2M828.5 685.5h3M829.5 686.5h1M828.5 687.5h3M828.5 688.5h3M829.5 689.5h2M828.5 685.5v4M829.5 684.5v4M830.5 686.5v2M832.5 685.5h2M832.5 688.5h3M832.5 689.5h2M832.5 685.5v4M836.5 684.5h3M836.5 686.5h3M837.5 688.5h2M837.5 689.5h2M837.5 686.5v2M838.5 686.5v3M839.5 685.5v3" stroke="#ffffff" fill="none" stroke-linecap="square"/>
<path d="M832.5 698.5h2M833.5 699.5h1M833.5 700.5h1M832.5 701.5h3M832.5 702.5h2M832.5 699.5v4M834.5 699.5v3M835.5 698.5v4M843.5 698.5h1M843.5 699.5h2M843.5 702.5h1M844.5 699.5v4" stroke="#ffffff" fill="none" stroke-linecap="square"/>
<path d="M887.5 700.5h2M886.5 701.5h2M886.5 699.5v3M896.5 698.5h2M896.5 700.5h3M897.5 702.5h1M899.5 699.5v4" stroke="#ffffff" fill="none" stroke-linecap="square"/>
<path d="M745.5 710.5h2M744.5 711.5h2M745.5 712.5h2M744.5 713.5h2M747.5 712.5v2M749.5 711.5h2M749.5 712.5h1M748.5 714.5h2M748.5 715.5h2M749.5 711.5v3M750.5 711.5v3M751.5 710.5v5M753.5 710.5h2M752.5 714.5h3M753.5 715.5h1M753.5 710.5v4M754.5 711.5v3M756.5 710.5h3M757.5 711.5h2M756.5 712.5h3M756.5 713.5h3M757.5 715.5h2M756.5 710.5v4M757.5 712.5v3M758.5 711.5v4M760.5 710.5h2M760.5 713.5h2M761.5 715.5h2M761.5 711.5v3M762.5 711.5v4M763.5 710.5v5" stroke="#ffffff" fill="none" stroke-linecap="square"/>
<path d="M796.5 716.5v-6l2 3l2-3v6M800.5 716.5v-6h4v1v1v1h-4M806.5 712.5h2l2 1v3M810.5 714.5h-4v1v1h4" stroke="#ffffff" fill="none" stroke-linecap="square"/>
<path d="M834.5 710.5h2l1 1v4l-1 1h-2l-1-1v-4zM838.5 716.5h0M841.5 711.5l1-1v6M849.5 713.5h-3l-1-1v-1l1-1h2l1 1v4l-1 1h-2" stroke="#ffffff" fill="none" stroke-linecap="square"/>
<path d="M889.5 716.5v-6l-3 4h4M891.5 716.5h0M894.5 711.5l1-1h2l1 1v1l-1 1h-1M897.5 713.5l1 1v1l-1 1h-2l-1-1M903.5 710.5h-4v3h3l1 1v1l-1 1h-3" stroke="#ffffff" fill="none" stroke-linecap="square"/>
<path d="M744.5 720.5h2M745.5 721.5h1M745.5 722.5h2M744.5 722.5v2M746.5 720.5v5M748.5 721.5h2M749.5 722.5h1M748.5 723.5h2M749.5 722.5v3M752.5 720.5h2M752.5 722.5h3M752.5 725.5h2M755.5 720.5v5M757.5 720.5h1M756.5 724.5h3M757.5 725.5h2M756.5 720.5v4M758.5 720.5v5M759.5 721.5v3M760.5 721.5h3M761.5 724.5h2M760.5 725.5h3" stroke="#ffffff" fill="none" stroke-linecap="square"/>
<path d="M796.5 728.5v-8l2 4l2-4v8M800.5 728.5v-8h4v2v1v1h-4M806.5 723.5h2l2 1v4M810.5 725.5h-4v1v2h4" stroke="#ffffff" fill="none" stroke-linecap="square"/>
<path d="M831.5 720.5h2l1 2v4l-1 2h-2l-1-2v-4zM835.5 728.5h0M839.5 720.5h2l1 2v4l-1 2h-2l-1-2v-4zM843.5 722.5l1-2h2l1 2v1l-4 5h4M852.5 720.5h-4v4h3l1 1v1l-1 2h-3" stroke="#ffffff" fill="none" stroke-linecap="square"/>
<path d="M886.5 722.5l1-2h2l1 2v1l-1 1h-1M889.5 724.5l1 1v1l-1 2h-2l-1-2M891.5 728.5h0M894.5 722.5l1-2h2l1 2v1l-1 1h-1M897.5 724.5l1 1v1l-1 2h-2l-1-2M900.5 720.5h2l1 2v4l-1 2h-2l-1-2v-4z" stroke="#ffffff" fill="none" stroke-linecap="square"/>
<path d="M744.5 732.5h3M745.5 733.5h1M745.5 734.5h1M745.5 735.5h1M745.5 736.5h1M745.5 737.5h1M744.5 733.5v4M745.5 734.5v2M747.5 734.5v3M749.5 732.5h1M749.5 733.5h1M749.5 735.5h2M748.5 737.5h2M748.5 734.5v3M751.5 732.5v5M752.5 732.5h3M753.5 733.5h1M752.5 735.5h2M752.5 734.5v2M753.5 733.5v4M757.5 732.5h2M757.5 735.5h1M757.5 734.5v2M760.5 732.5h2M761.5 733.5h1M760.5 734.5h2M761.5 735.5h2M761.5 736.5h2M761.5 737.5h2M761.5 732.5v4M762.5 732.5v4" stroke="#ffffff" fill="none" stroke-linecap="square"/>
<path d="M806.5 732.5h0v1h0zM810.5 733.5h-2h0l-1 1v3l1 1h0h2" stroke="#ffffff" fill="none" stroke-linecap="square"/>
<path d="M834.5 733.5l1-1h2l1 1v1l-4 4h4M839.5 733.5l1-1h2l1 1v1l-4 4h4M845.5 732.5h2l1 1v4l-1 1h-2l-1-1v-4z" stroke="#ffffff" fill="none" stroke-linecap="square"/>
<path d="M887.5 733.5l1-1h2l1 1v1l-4 4h4M896.5 732.5h-2l-2 1v4l2 1h2v-1v-1v-1h-4M899.5 732.5h2l1 1v4l-1 1h-2l-1-1v-4z" stroke="#ffffff" fill="none" stroke-linecap="square"/>
<path d="M745.5 742.5h2M744.5 743.5h3M744.5 745.5h2M745.5 746.5h2M746.5 743.5v3M749.5 742.5h2M749.5 743.5h1M749.5 745.5h2M748.5 746.5h3M748.5 744.5v2M749.5 744.5v3M750.5 744.5v2M752.5 743.5h3M753.5 744.5h2M753.5 745.5h2M752.5 746.5h2M753.5 747.5h2M752.5 744.5v3M753.5 742.5v5M754.5 742.5v4M757.5 745.5h2M757.5 746.5h1M756.5 747.5h2M756.5 742.5v5M757.5 742.5v4M760.5 744.5h3M761.5 746.5h2M760.5 743.5v3M762.5 743.5v4M763.5 744.5v3" stroke="#ffffff" fill="none" stroke-linecap="square"/>
<path d="M806.5 742.5h0v2h0zM810.5 744.5h-2h0l-1 1v3l1 2h0l2-1" stroke="#ffffff" fill="none" stroke-linecap="square"/>
<path d="M763.5 746.5h1M762.5 747.5h2M762.5 748.5h2M762.5 747.5v1" stroke="#ffffff" fill="none" stroke-linecap="square"/>
<path d="M821.5 744.5l2-2v8M826.5 744.5v-2h2l2 2v1l-4 5h4M832.5 742.5h2l1 2v4l-1 2h-2l-1-2v-4zM836.5 750.5l4-8M841.5 747.5l1-1l2 1l1-1M846.5 744.5l1-2h2l1 2v1l-4 5h4M852.5 744.5l1-2h2l1 2v1l-4 5h4M858.5 742.5h2l1 2v4l-1 2h-2l-1-2v-4z" stroke="#ffffff" fill="none" stroke-linecap="square"/>
<path d="M874.5 744.5l1-2h2l1 2v1l-4 5h4M882.5 750.5v-8l-2 5h4M886.5 742.5h2l1 2v4l-1 2h-2l-1-2v-4zM890.5 750.5l4-8M899.5 744.5l-4 3l4 3M900.5 744.5l1-2h2l1 2v1l-4 5h4M909.5 750.5v-8l-3 5h4M912.5 742.5h2l1 2v4l-1 2h-2l-1-2v-4z" stroke="#ffffff" fill="none" stroke-linecap="square"/>
<path d="M745.5 755.5h3M744.5 757.5h4M745.5 759.5h3M748.5 756.5v2" stroke="#ffffff" fill="none" stroke-linecap="square"/>
<path d="M762.5 755.5h4M762.5 757.5h3M762.5 758.5h4M762.5 754.5v4M763.5 756.5v3M765.5 756.5v3" stroke="#ffffff" fill="none" stroke-linecap="square"/>
<path d="M840.5 755.5l1-1v6" stroke="#ffffff" fill="none" stroke-linecap="square"/>
<path d="M892.5 755.5l2-1h2v1v1l-4 4h4" stroke="#ffffff" fill="none" stroke-linecap="square"/>
<path d="M744.5 765.5h3M744.5 766.5h2M744.5 767.5h3M745.5 768.5h1M744.5 769.5h3M744.5 764.5v4M748.5 764.5h2M749.5 766.5h1M748.5 767.5h2M748.5 766.5v2M750.5 766.5v3M752.5 764.5h2M752.5 766.5h2M752.5 768.5h2M752.5 766.5v2M753.5 766.5v2M755.5 764.5v5M757.5 765.5h2M756.5 767.5h3M757.5 768.5h1M756.5 769.5h2M756.5 766.5v3M761.5 764.5h2M760.5 765.5h2M760.5 766.5h2M760.5 769.5h2M760.5 765.5v4M763.5 764.5v5M765.5 764.5h2M765.5 767.5h1M764.5 768.5h3M765.5 769.5h2M764.5 764.5v5M765.5 764.5v5M766.5 765.5v4" stroke="#ffffff" fill="none" stroke-linecap="square"/>
<path d="M806.5 766.5h2l2 1v2l-2 1h-2v-1v-2zM810.5 764.5l-4 8" stroke="#ffffff" fill="none" stroke-linecap="square"/>
<path d="M834.5 764.5h2v2v4v2h-2l-2-2v-4zM838.5 772.5h0M841.5 764.5h2l1 2v1l-1 1h-2l-1-1v-1zM841.5 768.5l-1 1v1l1 2h2l1-2v-1l-1-1M850.5 764.5h-4v4h3l1 1v1l-1 2h-3" stroke="#ffffff" fill="none" stroke-linecap="square"/>
<path d="M887.5 764.5h2l1 2v4l-1 2h-2l-1-2v-4zM891.5 772.5h0M895.5 764.5h2l1 2v1l-1 1h-2l-1-1v-1zM895.5 768.5l-1 1v1l1 2h2l1-2v-1l-1-1M903.5 764.5h-4v4h3l1 1v1l-1 2h-3" stroke="#ffffff" fill="none" stroke-linecap="square"/>
<path d="M745.5 777.5h2M744.5 781.5h3M746.5 778.5v2M747.5 777.5v4M748.5 776.5h2M748.5 777.5h3M748.5 779.5h2M749.5 780.5h1M748.5 781.5h2M749.5 776.5v5M751.5 777.5v4M752.5 776.5h2M753.5 777.5h2M752.5 778.5h2M753.5 780.5h1M753.5 781.5h1M754.5 777.5v3M756.5 776.5h2M756.5 777.5h2M757.5 779.5h2M756.5 776.5v5M757.5 778.5v3M758.5 778.5v2M759.5 777.5v4M760.5 776.5h2M760.5 777.5h3M760.5 778.5h2M761.5 780.5h2M761.5 781.5h2M760.5 776.5v5M763.5 776.5v4" stroke="#ffffff" fill="none" stroke-linecap="square"/>
<path d="M835.5 777.5l1-1h2l1 1v1l-4 4h4M840.5 782.5h0M844.5 776.5h2l1 1v4l-1 1h-2l-1-1v-4z" stroke="#ffffff" fill="none" stroke-linecap="square"/>
<path d="M889.5 777.5l2-1v6M893.5 782.5h0M897.5 776.5h2l1 1v4l-1 1h-2l-1-1v-4z" stroke="#ffffff" fill="none" stroke-linecap="square"/>
<path d="M744.5 787.5h3M745.5 790.5h2M744.5 791.5h3M745.5 786.5v4M746.5 786.5v5M747.5 787.5v3M748.5 786.5v4" stroke="#ffffff" fill="none" stroke-linecap="square"/>
<path d="M763.5 786.5h2M762.5 788.5h4M763.5 789.5h3M762.5 790.5h3M762.5 791.5h3M765.5 788.5v3M766.5 788.5v2" stroke="#ffffff" fill="none" stroke-linecap="square"/>
<path d="M800.5 794.5v-5M800.5 790.5l2-1v1v4M802.5 790.5l2-1v1v4M806.5 794.5v-5M806.5 790.5v-1l2 1v4M808.5 790.5v-1l2 1v4" stroke="#ffffff" fill="none" stroke-linecap="square"/>
<path d="M835.5 786.5h2M835.5 787.5h3M835.5 791.5h2M835.5 787.5v4M837.5 787.5v3M838.5 786.5v4M840.5 790.5h1M840.5 791.5h2M839.5 788.5v3M840.5 786.5v4M841.5 787.5v3M844.5 786.5h1M843.5 788.5h3M844.5 789.5h2M844.5 790.5h2M843.5 786.5v4M845.5 787.5v3M846.5 786.5v4" stroke="#ffffff" fill="none" stroke-linecap="square"/>
<path d="M888.5 786.5h2M888.5 787.5h3M888.5 788.5h3M888.5 789.5h3M889.5 790.5h2M888.5 786.5v5M891.5 787.5v4M893.5 787.5h2M893.5 788.5h2M893.5 791.5h1M897.5 786.5h1M896.5 787.5h2M896.5 788.5h3M897.5 790.5h2" stroke="#ffffff" fill="none" stroke-linecap="square"/>
<path d="M745.5 798.5h2M745.5 800.5h2M744.5 803.5h2M744.5 798.5v4M745.5 798.5v4M747.5 798.5v5M749.5 800.5h2M749.5 801.5h2M748.5 802.5h2M748.5 799.5v3M752.5 800.5h3M752.5 801.5h3M753.5 802.5h2M752.5 800.5v2M753.5 798.5v5M754.5 798.5v4M756.5 799.5h2M757.5 800.5h1M756.5 801.5h3M757.5 803.5h2M757.5 799.5v3M759.5 799.5v4M760.5 798.5h3M761.5 802.5h2M761.5 800.5v3M762.5 798.5v5M764.5 799.5h2M765.5 800.5h1M764.5 801.5h2M764.5 802.5h2M764.5 803.5h3M764.5 800.5v2M766.5 799.5v3M767.5 798.5v5M769.5 798.5h1M768.5 799.5h3M769.5 800.5h1M768.5 799.5v3M769.5 800.5v3M771.5 800.5v2M773.5 798.5h2M773.5 799.5h1M772.5 800.5h2M773.5 802.5h1M772.5 803.5h3M774.5 800.5v3M775.5 800.5v2M777.5 798.5h1M776.5 800.5h3M776.5 803.5h2M778.5 798.5v4M781.5 798.5h1M780.5 803.5h2M780.5 798.5v4M781.5 799.5v4M782.5 800.5v3" stroke="#ffffff" fill="none" stroke-linecap="square"/>
<path d="M829.5 799.5l2-1v6M836.5 798.5h-2l-1 1v4l1 1h2l1-1v-1l-1-1h-3M839.5 804.5v-6l2 3l2-3v6M844.5 804.5v-4M844.5 801.5l1-1h2l1 1v3M849.5 804.5v-6h3l1 1v1l-1 1h-3M851.5 801.5l2 3" stroke="#ffffff" fill="none" stroke-linecap="square"/>
<path d="M873.5 798.5h2l1 1v4l-1 1h-2l-1-1v-4zM881.5 799.5l-1-1h-2l-1 1v4l1 1h2l1-1M882.5 804.5v-4M882.5 801.5l1-1h3M887.5 799.5l2-1v6M892.5 798.5h2l1 1v1l-1 1h-2l-1-1v-1zM892.5 801.5l-1 1v1l1 1h2l1-1v-1l-1-1M897.5 804.5v-6l4 6v-6M903.5 800.5v4M903.5 798.5v1M909.5 801.5h-3l-1-1v-1l1-1h2l1 1v4l-1 1h-2M910.5 798.5h4M912.5 798.5v6M916.5 800.5v4M916.5 798.5v1" stroke="#ffffff" fill="none" stroke-linecap="square"/>
<path d="M744.5 810.5h2M745.5 811.5h1M745.5 812.5h2M744.5 813.5h3M745.5 814.5h1M744.5 811.5v3M746.5 810.5v5M747.5 812.5v3M749.5 810.5h1M748.5 811.5h3M748.5 813.5h3M748.5 811.5v3M749.5 810.5v5M752.5 810.5h2M752.5 812.5h3M753.5 813.5h1M754.5 811.5v4M755.5 812.5v2M757.5 813.5h2M756.5 814.5h2M756.5 812.5v3M758.5 812.5v3M759.5 810.5v4M760.5 812.5h2M761.5 813.5h2M760.5 815.5h2M760.5 810.5v5" stroke="#ffffff" fill="none" stroke-linecap="square"/>
<path d="M800.5 816.5v-4M800.5 813.5l2-1v1v3M802.5 813.5l2-1v1v3M806.5 808.5h2v2l-2 1h2" stroke="#ffffff" fill="none" stroke-linecap="square"/>
<path d="M866.5 810.5h4v1l-4 5" stroke="#ffffff" fill="none" stroke-linecap="square"/>
<path d="M744.5 821.5h3M744.5 822.5h3M744.5 823.5h3M744.5 824.5h3M745.5 825.5h2M744.5 821.5v4M748.5 821.5h2M748.5 822.5h3M750.5 822.5v2M752.5 820.5h2M753.5 821.5h2M752.5 825.5h2M755.5 821.5v4M756.5 820.5h3M756.5 822.5h2M757.5 825.5h2M756.5 822.5v2M757.5 821.5v3M759.5 820.5v5M760.5 821.5h3M760.5 822.5h2M761.5 823.5h1M760.5 822.5v3M761.5 821.5v3M763.5 822.5v2" stroke="#ffffff" fill="none" stroke-linecap="square"/>
<path d="M836.5 820.5h2M835.5 822.5h3M836.5 825.5h2M837.5 820.5v4M838.5 820.5v5M839.5 823.5h2M839.5 824.5h2M839.5 825.5h2M839.5 822.5v2M844.5 820.5h2M844.5 821.5h2M843.5 822.5h3M844.5 824.5h2M843.5 825.5h3M845.5 820.5v5M846.5 820.5v4" stroke="#ffffff" fill="none" stroke-linecap="square"/>
<line x1="921.5" y1="766.5" x2="1171.5" y2="766.5" stroke="#ffffff" stroke-width="1"/>
<line x1="921.5" y1="766.5" x2="921.5" y2="829.5" stroke="#ffffff" stroke-width="1"/>
<line x1="1004.5" y1="766.5" x2="1004.5" y2="829.5" stroke="#ffffff" stroke-width="1"/>
<line x1="1087.5" y1="766.5" x2="1087.5" y2="829.5" stroke="#ffffff" stroke-width="1"/>
<line x1="1087.5" y1="787.5" x2="1171.5" y2="787.5" stroke="#ffffff" stroke-width="1"/>
<line x1="1087.5" y1="808.5" x2="1171.5" y2="808.5" stroke="#ffffff" stroke-width="1"/>
<line x1="921.5" y1="801.5" x2="1087.5" y2="801.5" stroke="#ffffff" stroke-width="1"/>
<line x1="932.5" y1="766.5" x2="932.5" y2="801.5" stroke="#ffffff" stroke-width="1"/>
<line x1="942.5" y1="766.5" x2="942.5" y2="801.5" stroke="#ffffff" stroke-width="1"/>
<line x1="970.5" y1="766.5" x2="970.5" y2="801.5" stroke="#ffffff" stroke-width="1"/>
<line x1="990.5" y1="766.5" x2="990.5" y2="801.5" stroke="#ffffff" stroke-width="1"/>
<line x1="921.5" y1="773.5" x2="1004.5" y2="773.5" stroke="#00ffff" stroke-width="1"/>
<line x1="921.5" y1="780.5" x2="1004.5" y2="780.5" stroke="#00ffff" stroke-width="1"/>
<line x1="921.5" y1="787.5" x2="1004.5" y2="787.5" stroke="#00ffff" stroke-width="1"/>
<line x1="921.5" y1="794.5" x2="1004.5" y2="794.5" stroke="#00ffff" stroke-width="1"/>
<line x1="942.5" y1="801.5" x2="942.5" y2="829.5" stroke="#ffffff" stroke-width="1"/>
<line x1="963.5" y1="801.5" x2="963.5" y2="829.5" stroke="#ffffff" stroke-width="1"/>
<line x1="984.5" y1="801.5" x2="984.5" y2="829.5" stroke="#ffffff" stroke-width="1"/>
<line x1="921.5" y1="808.5" x2="1004.5" y2="808.5" stroke="#00ffff" stroke-width="1"/>
<line x1="921.5" y1="815.5" x2="1004.5" y2="815.5" stroke="#00ffff" stroke-width="1"/>
<line x1="921.5" y1="822.5" x2="1004.5" y2="822.5" stroke="#00ffff" stroke-width="1"/>
<line x1="1046.5" y1="801.5" x2="1046.5" y2="829.5" stroke="#00ffff" stroke-width="1"/>
<line x1="1067.5" y1="801.5" x2="1067.5" y2="820.5" stroke="#00ffff" stroke-width="1"/>
<line x1="1004.5" y1="809.5" x2="1087.5" y2="809.5" stroke="#00ffff" stroke-width="1"/>
<line x1="1004.5" y1="820.5" x2="1087.5" y2="820.5" stroke="#00ffff" stroke-width="1"/>
<line x1="1015.5" y1="809.5" x2="1015.5" y2="820.5" stroke="#00ffff" stroke-width="1"/>
<line x1="1025.5" y1="809.5" x2="1025.5" y2="820.5" stroke="#00ffff" stroke-width="1"/>
<line x1="1035.5" y1="809.5" x2="1035.5" y2="820.5" stroke="#00ffff" stroke-width="1"/>
<path d="M1025.5 780.5h2M1025.5 782.5h2M1025.5 780.5v4M1026.5 781.5v2M1028.5 781.5v3M1029.5 780.5h4M1030.5 783.5h3M1029.5 784.5h3M1032.5 780.5v4M1033.5 780.5v4M1035.5 780.5h3M1034.5 781.5h3M1034.5 783.5h4M1035.5 784.5h3M1036.5 781.5v2M1037.5 780.5v3M1038.5 780.5v4M1039.5 780.5h2M1039.5 782.5h3M1039.5 783.5h2M1039.5 784.5h2M1041.5 781.5v2M1042.5 781.5v3M1044.5 780.5h3M1044.5 781.5h2M1043.5 782.5h3M1044.5 784.5h3M1043.5 781.5v3M1046.5 780.5v3M1047.5 780.5h3M1048.5 781.5h3M1048.5 782.5h2M1048.5 783.5h2M1047.5 784.5h3M1047.5 780.5v4M1048.5 781.5v2M1050.5 780.5v4M1051.5 781.5v2" stroke="#00ff00" fill="none" stroke-linecap="square"/>
<path d="M1025.5 786.5h2M1024.5 788.5h4M1024.5 786.5v3M1026.5 786.5v2M1027.5 786.5v2M1030.5 786.5h3M1029.5 789.5h4M1029.5 786.5v2M1030.5 786.5v3M1035.5 786.5h3M1034.5 787.5h4M1034.5 788.5h3M1034.5 789.5h4M1034.5 786.5v3M1035.5 785.5v3M1037.5 786.5v3M1038.5 785.5h3M1039.5 786.5h2M1039.5 788.5h3M1039.5 789.5h3M1038.5 785.5v4M1041.5 785.5v4M1042.5 786.5v3M1043.5 785.5h3M1043.5 786.5h3M1044.5 787.5h3M1043.5 788.5h3M1044.5 789.5h2M1043.5 785.5v4M1045.5 785.5v4M1047.5 785.5v4M1047.5 785.5h4M1048.5 786.5h3M1047.5 788.5h3M1047.5 789.5h4M1049.5 786.5v3M1050.5 786.5v3M1051.5 785.5v3" stroke="#00ff00" fill="none" stroke-linecap="square"/>
<path d="M1032.5 792.5l-2-2h-2v2v1v1h2l2 1v1l-2 2h-2v-2M1033.5 790.5h4M1035.5 790.5v8M1038.5 794.5h4M1043.5 792.5l1-2h2l1 2v1l-1 1h-1M1046.5 794.5l1 1v1l-1 2h-2l-1-2M1053.5 790.5h-4v4h3l1 1v1l-1 2h-3M1055.5 790.5h2l1 2v4l-1 2h-2l-1-2v-4zM1059.5 792.5l1-2h2l1 2v1l-4 5h4" stroke="#00ff00" fill="none" stroke-linecap="square"/>
<path d="M1098.5 774.5h3M1099.5 775.5h2M1099.5 776.5h2M1098.5 778.5h3M1099.5 779.5h2M1099.5 780.5h1M1098.5 781.5h2M1098.5 776.5v5M1099.5 775.5v4M1101.5 776.5v3M1103.5 776.5h1M1103.5 778.5h2M1102.5 779.5h2M1103.5 780.5h1M1102.5 781.5h2M1102.5 774.5v5M1103.5 775.5v4M1105.5 775.5v5M1107.5 776.5h2M1106.5 776.5v3M1111.5 774.5h1M1111.5 777.5h1M1111.5 779.5h2M1110.5 780.5h2M1110.5 775.5v6M1112.5 776.5v3M1113.5 776.5v3M1115.5 774.5h1M1114.5 775.5h3M1115.5 776.5h2M1115.5 777.5h2M1115.5 778.5h2M1114.5 779.5h2M1115.5 780.5h1M1115.5 781.5h2M1114.5 775.5v4M1115.5 774.5v6M1116.5 774.5v6M1117.5 776.5v5M1118.5 774.5h2M1118.5 775.5h3M1119.5 777.5h2M1118.5 779.5h3M1118.5 780.5h3M1118.5 775.5v5M1120.5 775.5v4M1123.5 774.5h1M1122.5 776.5h3M1123.5 777.5h1M1122.5 778.5h3M1122.5 779.5h2M1122.5 780.5h3M1123.5 781.5h2M1122.5 774.5v5M1123.5 774.5v7M1124.5 775.5v5M1125.5 774.5v6M1126.5 774.5h3M1126.5 775.5h2M1127.5 777.5h1M1126.5 778.5h3M1126.5 779.5h2M1126.5 781.5h3M1126.5 776.5v5M1127.5 775.5v5M1128.5 776.5v5M1129.5 775.5v5M1131.5 774.5h1M1130.5 775.5h2M1130.5 776.5h3M1131.5 777.5h1M1131.5 778.5h2M1131.5 780.5h2M1131.5 781.5h2M1130.5 774.5v6M1132.5 775.5v4M1133.5 774.5v5M1134.5 774.5h3M1134.5 777.5h2M1135.5 778.5h2M1134.5 780.5h3M1134.5 774.5v5M1135.5 774.5v6M1136.5 775.5v4M1137.5 775.5v6" stroke="#00ff00" fill="none" stroke-linecap="square"/>
<path d="M1118.5 798.5h2l1 1v1l-1 2h-2v-8h2l1 1v1l-1 2M1126.5 794.5h-4v4h3l1 1v1l-1 2h-3M1129.5 794.5h-1l-1 1v5l1 2h1l1-2v-1l-1-1h-2M1131.5 802.5l4-8M1131.5 794.5h1v1h-1zM1134.5 800.5h1v2h-1zM1136.5 802.5l3-8M1136.5 794.5h1v1h-1zM1139.5 800.5h0v2h0z" stroke="#00ff00" fill="none" stroke-linecap="square"/>
<path d="M922.5 795.5h3M922.5 797.5h2M922.5 795.5v3M924.5 795.5v2M925.5 794.5v3M928.5 797.5h3M929.5 798.5h1M931.5 794.5v3" stroke="#00ff00" fill="none" stroke-linecap="square"/>
<path d="M934.5 794.5h2M934.5 795.5h2M935.5 797.5h1M935.5 795.5v2M936.5 795.5v2" stroke="#00ff00" fill="none" stroke-linecap="square"/>
<path d="M945.5 794.5h1M944.5 796.5h2M945.5 798.5h1M944.5 794.5v4M946.5 794.5v3M947.5 795.5v2M950.5 794.5h2M950.5 796.5h2M951.5 797.5h1M950.5 795.5v2M952.5 794.5v3M954.5 794.5h2M954.5 795.5h3M955.5 798.5h2M957.5 794.5v3M961.5 794.5h2M961.5 795.5h2M960.5 797.5h3M960.5 798.5h2" stroke="#00ff00" fill="none" stroke-linecap="square"/>
<path d="M975.5 795.5h1M975.5 796.5h2M975.5 797.5h2M975.5 798.5h1M974.5 794.5v4M980.5 794.5h3M981.5 795.5h2M981.5 796.5h2M981.5 798.5h1M980.5 794.5v3M981.5 794.5v4M983.5 794.5v4" stroke="#00ff00" fill="none" stroke-linecap="square"/>
<path d="M993.5 794.5h1M992.5 796.5h2M993.5 794.5v4M995.5 794.5v4" stroke="#00ff00" fill="none" stroke-linecap="square"/>
<path d="M924.5 804.5h3M925.5 805.5h2M925.5 806.5h1M924.5 807.5h3M924.5 808.5h3M926.5 805.5v3M927.5 804.5v4M931.5 807.5h1M930.5 808.5h2M930.5 805.5v2M931.5 804.5v3M932.5 804.5v4M933.5 804.5v4" stroke="#00ff00" fill="none" stroke-linecap="square"/>
<path d="M968.5 804.5h3M969.5 806.5h1M968.5 807.5h2M968.5 804.5v3M970.5 805.5v3M971.5 805.5v2M972.5 804.5h2M972.5 805.5h2M973.5 806.5h2M972.5 805.5v2M973.5 805.5v2M974.5 805.5v3M978.5 808.5h2M978.5 805.5v2M980.5 805.5v2" stroke="#00ff00" fill="none" stroke-linecap="square"/>
<path d="M925.5 818.5h1M924.5 819.5h3M924.5 820.5h2M925.5 822.5h1M926.5 819.5v3M930.5 818.5h2M931.5 819.5h2M931.5 820.5h2M930.5 818.5v3M931.5 818.5v3M932.5 819.5v2M933.5 819.5v3" stroke="#00ff00" fill="none" stroke-linecap="square"/>
<path d="M924.5 822.5h2M924.5 823.5h3M925.5 824.5h1M925.5 826.5h1M924.5 823.5v2M925.5 823.5v2M927.5 822.5v3M930.5 822.5h2M930.5 823.5h2M930.5 824.5h3M930.5 826.5h3M930.5 822.5v4M931.5 822.5v4M933.5 823.5v3" stroke="#00ff00" fill="none" stroke-linecap="square"/>
<path d="M969.5 822.5h2M969.5 823.5h2M969.5 824.5h1M970.5 823.5v2M971.5 822.5v4M972.5 823.5h2M972.5 824.5h3M973.5 822.5v4M974.5 822.5v3M975.5 822.5v4" stroke="#00ff00" fill="none" stroke-linecap="square"/>
<path d="M1015.5 804.5h1M1014.5 805.5h3M1021.5 802.5h2M1021.5 803.5h2M1020.5 804.5h3M1020.5 805.5h3M1020.5 806.5h2M1023.5 803.5v3M1024.5 804.5h2M1025.5 805.5h1M1024.5 806.5h3M1024.5 803.5v2M1025.5 803.5v2M1027.5 803.5v2M1031.5 802.5h1M1031.5 803.5h1M1031.5 806.5h1M1030.5 802.5v3" stroke="#00ff00" fill="none" stroke-linecap="square"/>
<path d="M1050.5 802.5h2M1051.5 804.5h2M1050.5 806.5h2M1051.5 803.5v2M1052.5 802.5v3M1057.5 803.5h1M1057.5 804.5h2M1059.5 803.5v2" stroke="#00ff00" fill="none" stroke-linecap="square"/>
<path d="M1071.5 804.5h1M1071.5 805.5h1M1070.5 803.5v2M1071.5 802.5v3M1073.5 802.5v4M1077.5 804.5h1M1076.5 806.5h3M1076.5 803.5v2M1077.5 803.5v3M1079.5 802.5v4" stroke="#00ff00" fill="none" stroke-linecap="square"/>
<path d="M1051.5 818.5v-6l-1 4h2M1052.5 812.5l2 6M1054.5 812.5l-2 6M1057.5 812.5h-1h0v4v2h1l1-2h0l-1-2h-1M1060.5 814.5h-1h-1v-2h1h1h0v4v2h-1M1062.5 812.5h0h1h1v2l-2 4h2M1064.5 812.5h1v6" stroke="#00ff00" fill="none" stroke-linecap="square"/>
<path d="M1072.5 813.5h2M1072.5 815.5h3M1076.5 814.5h2M1077.5 816.5h2M1079.5 812.5v4" stroke="#00ff00" fill="none" stroke-linecap="square"/>
<path d="M1013.5 822.5h2M1013.5 823.5h2M1012.5 824.5h2M1013.5 825.5h2M1013.5 826.5h1M1013.5 822.5v4M1014.5 822.5v4M1015.5 823.5v2M1025.5 822.5h2M1024.5 823.5h3M1025.5 825.5h1M1024.5 826.5h2M1027.5 823.5v2" stroke="#00ff00" fill="none" stroke-linecap="square"/>
<path d="M1059.5 822.5h2M1058.5 823.5h3M1058.5 825.5h2M1059.5 822.5v3M1060.5 823.5v3M1071.5 823.5h2M1071.5 825.5h2M1071.5 826.5h2M1073.5 823.5v3" stroke="#00ff00" fill="none" stroke-linecap="square"/>
<line x1="19.5" y1="687.5" x2="54.5" y2="687.5" stroke="#00ffff" stroke-width="1"/>
<line x1="19.5" y1="697.5" x2="54.5" y2="697.5" stroke="#00ffff" stroke-width="1"/>
<line x1="19.5" y1="711.5" x2="54.5" y2="711.5" stroke="#00ffff" stroke-width="1"/>
<line x1="19.5" y1="721.5" x2="54.5" y2="721.5" stroke="#00ffff" stroke-width="1"/>
<line x1="19.5" y1="735.5" x2="54.5" y2="735.5" stroke="#00ffff" stroke-width="1"/>
<line x1="19.5" y1="744.5" x2="54.5" y2="744.5" stroke="#00ffff" stroke-width="1"/>
<line x1="19.5" y1="758.5" x2="54.5" y2="758.5" stroke="#00ffff" stroke-width="1"/>
<line x1="19.5" y1="768.5" x2="54.5" y2="768.5" stroke="#00ffff" stroke-width="1"/>
<line x1="19.5" y1="782.5" x2="54.5" y2="782.5" stroke="#00ffff" stroke-width="1"/>
<line x1="19.5" y1="791.5" x2="54.5" y2="791.5" stroke="#00ffff" stroke-width="1"/>
<line x1="19.5" y1="805.5" x2="54.5" y2="805.5" stroke="#00ffff" stroke-width="1"/>
<line x1="19.5" y1="815.5" x2="54.5" y2="815.5" stroke="#00ffff" stroke-width="1"/>
<line x1="19.5" y1="829.5" x2="54.5" y2="829.5" stroke="#00ffff" stroke-width="1"/>
<path d="M21.5 689.5h2M21.5 690.5h3M22.5 691.5h2M21.5 692.5h2M22.5 689.5v5M23.5 690.5v4M26.5 689.5h1M26.5 692.5h2M26.5 693.5h2M25.5 694.5h3M25.5 690.5v3M26.5 690.5v2M27.5 688.5v5M31.5 689.5h1M30.5 691.5h3M30.5 692.5h2M30.5 689.5v5M31.5 688.5v4M33.5 689.5v4M34.5 688.5h3M34.5 689.5h3M34.5 690.5h3M35.5 691.5h1M34.5 693.5h3M34.5 689.5v5M35.5 688.5v6M36.5 688.5v6M37.5 689.5v4M39.5 689.5h1M38.5 690.5h3M39.5 691.5h2M38.5 692.5h3M38.5 693.5h3M39.5 694.5h1M39.5 690.5v4M41.5 688.5v4" stroke="#00ff00" fill="none" stroke-linecap="square"/>
<path d="M29.5 712.5h1M29.5 714.5h1M28.5 715.5h2M28.5 716.5h2M28.5 717.5h2M29.5 718.5h1M28.5 713.5v5" stroke="#00ff00" fill="none" stroke-linecap="square"/>
<path d="M38.5 712.5h2M38.5 713.5h2M38.5 714.5h2M39.5 715.5h1M39.5 716.5h1M38.5 713.5v4" stroke="#00ff00" fill="none" stroke-linecap="square"/>
<path d="M28.5 736.5h2M28.5 737.5h2M29.5 738.5h1M28.5 739.5h2M28.5 740.5h2M28.5 742.5h2M28.5 737.5v5M29.5 738.5v3" stroke="#00ff00" fill="none" stroke-linecap="square"/>
<path d="M36.5 736.5h2M37.5 737.5h1M36.5 738.5h2M36.5 739.5h2M37.5 740.5h1M36.5 741.5h2M37.5 742.5h1M38.5 737.5v3" stroke="#00ff00" fill="none" stroke-linecap="square"/>
<path d="M29.5 784.5h2M29.5 785.5h2M29.5 786.5h2M30.5 787.5h1M29.5 788.5h2M29.5 790.5h2M29.5 784.5v5M30.5 785.5v4M31.5 786.5v4" stroke="#00ff00" fill="none" stroke-linecap="square"/>
<path d="M37.5 784.5h1M37.5 785.5h1M36.5 786.5h2M36.5 787.5h2M37.5 789.5h1M36.5 790.5h2M36.5 786.5v3" stroke="#00ff00" fill="none" stroke-linecap="square"/>
<path d="M29.5 806.5h1M29.5 807.5h1M29.5 808.5h1M28.5 809.5h2M29.5 810.5h1M28.5 812.5h2M28.5 806.5v4M30.5 808.5v3" stroke="#00ff00" fill="none" stroke-linecap="square"/>
<path d="M37.5 807.5h1M37.5 808.5h1M37.5 809.5h1M36.5 810.5h2M37.5 811.5h1M37.5 812.5h1M36.5 808.5v4M37.5 808.5v2" stroke="#00ff00" fill="none" stroke-linecap="square"/>
<path d="M24.5 762.5h1M24.5 763.5h2M24.5 766.5h1M23.5 761.5v5M25.5 762.5v3M26.5 762.5v4M28.5 760.5h2M28.5 763.5h2M28.5 765.5h3M29.5 766.5h1M28.5 761.5v5M29.5 761.5v5M30.5 762.5v3M31.5 760.5v5M33.5 760.5h1M32.5 761.5h3M32.5 762.5h2M33.5 763.5h1M33.5 764.5h2M32.5 765.5h3M33.5 766.5h2M32.5 762.5v4M33.5 761.5v3M34.5 761.5v3M37.5 760.5h2M36.5 761.5h3M37.5 762.5h2M36.5 760.5v5M37.5 762.5v4M38.5 762.5v2M39.5 761.5v3" stroke="#00ff00" fill="none" stroke-linecap="square"/>
<path d="M184.5 80.5h-2h-2v4l2 2h2v-2h0v-2h-4" stroke="#00ff00" fill="none" stroke-linecap="square"/>
<line x1="175" y1="89.5" x2="192" y2="89.5" stroke="#00ffff" stroke-width="1"/>
<line x1="192" y1="89.5" x2="243" y2="213" stroke="#00ffff" stroke-width="1"/>
<path d="M204.5 80.5h4h0l-2 6" stroke="#00ff00" fill="none" stroke-linecap="square"/>
<line x1="199" y1="89.5" x2="217" y2="89.5" stroke="#00ffff" stroke-width="1"/>
<line x1="217" y1="89.5" x2="246.5" y2="204" stroke="#00ffff" stroke-width="1"/>
<path d="M228.5 80.5h2h2v2h-2h-2h0v-2zM228.5 82.5v2h0v2h2l2-2h0l-2-2" stroke="#00ff00" fill="none" stroke-linecap="square"/>
<line x1="223" y1="89.5" x2="239" y2="89.5" stroke="#00ffff" stroke-width="1"/>
<line x1="239" y1="89.5" x2="249" y2="204" stroke="#00ffff" stroke-width="1"/>
<path d="M252.5 82.5h-2h-2v-2h2h2h0v4v2h-2" stroke="#00ff00" fill="none" stroke-linecap="square"/>
<line x1="243" y1="89.5" x2="260" y2="89.5" stroke="#00ffff" stroke-width="1"/>
<line x1="260" y1="89.5" x2="255" y2="204" stroke="#00ffff" stroke-width="1"/>
<path d="M270.5 80.5h1v6M274.5 80.5h2h2v4l-2 2h-2v-2v-4z" stroke="#00ff00" fill="none" stroke-linecap="square"/>
<line x1="267" y1="89.5" x2="284" y2="89.5" stroke="#00ffff" stroke-width="1"/>
<line x1="267" y1="89.5" x2="256" y2="200" stroke="#00ffff" stroke-width="1"/>
<path d="M288.5 80.5h2v6M292.5 80.5h2v6" stroke="#00ff00" fill="none" stroke-linecap="square"/>
<line x1="284" y1="89.5" x2="300" y2="89.5" stroke="#00ffff" stroke-width="1"/>
<line x1="284" y1="89.5" x2="259" y2="195" stroke="#00ffff" stroke-width="1"/>
<path d="M308.5 80.5h2v6M312.5 80.5h2h2h0v2l-4 4h4" stroke="#00ff00" fill="none" stroke-linecap="square"/>
<line x1="305" y1="89.5" x2="323" y2="89.5" stroke="#00ffff" stroke-width="1"/>
<line x1="305" y1="89.5" x2="294" y2="202" stroke="#00ffff" stroke-width="1"/>
<path d="M326.5 80.5h2v6M330.5 80.5h2h2h0v2h0h-2M334.5 82.5v2h0v2h-2l-2-2" stroke="#00ff00" fill="none" stroke-linecap="square"/>
<line x1="324" y1="89.5" x2="341" y2="89.5" stroke="#00ffff" stroke-width="1"/>
<line x1="324" y1="89.5" x2="319" y2="204" stroke="#00ffff" stroke-width="1"/>
<path d="M344.5 80.5h2v6M352.5 86.5v-6l-4 4h4" stroke="#00ff00" fill="none" stroke-linecap="square"/>
<line x1="341" y1="89.5" x2="358" y2="89.5" stroke="#00ffff" stroke-width="1"/>
<line x1="341" y1="89.5" x2="325" y2="204" stroke="#00ffff" stroke-width="1"/>
<path d="M412.5 80.5h1v6M420.5 80.5h-4v2h2l2 2h0l-2 2h-2" stroke="#00ff00" fill="none" stroke-linecap="square"/>
<line x1="408" y1="89.5" x2="425.5" y2="89.5" stroke="#00ffff" stroke-width="1"/>
<line x1="408" y1="89.5" x2="396.6" y2="206.5" stroke="#00ffff" stroke-width="1"/>
<path d="M450.5 80.5h1v6M456.5 80.5h-2h0v4v2h2l2-2h0l-2-2h-2" stroke="#00ff00" fill="none" stroke-linecap="square"/>
<line x1="447" y1="89.5" x2="464" y2="89.5" stroke="#00ffff" stroke-width="1"/>
<line x1="447" y1="89.5" x2="418.4" y2="218" stroke="#00ffff" stroke-width="1"/>
<path d="M493.5 80.5h2v6M497.5 80.5h4h0l-3 6" stroke="#00ff00" fill="none" stroke-linecap="square"/>
<line x1="490" y1="89.5" x2="507" y2="89.5" stroke="#00ffff" stroke-width="1"/>
<line x1="490" y1="89.5" x2="450" y2="244" stroke="#00ffff" stroke-width="1"/>
<path d="M115.5 160.5h1v6" stroke="#00ff00" fill="none" stroke-linecap="square"/>
<line x1="108" y1="169.5" x2="125" y2="169.5" stroke="#00ffff" stroke-width="1"/>
<line x1="125" y1="169.5" x2="211" y2="235" stroke="#00ffff" stroke-width="1"/>
<path d="M114.5 198.5l2-2h2v2h0l-4 4h4" stroke="#00ff00" fill="none" stroke-linecap="square"/>
<line x1="108" y1="206.5" x2="125" y2="206.5" stroke="#00ffff" stroke-width="1"/>
<line x1="125" y1="206.5" x2="205" y2="235" stroke="#00ffff" stroke-width="1"/>
<path d="M114.5 218.5l2-2h2v2h0v2h-2M118.5 220.5h0v2h0h-2h-2" stroke="#00ff00" fill="none" stroke-linecap="square"/>
<line x1="108" y1="226.5" x2="125" y2="226.5" stroke="#00ffff" stroke-width="1"/>
<line x1="125" y1="226.5" x2="194" y2="235" stroke="#00ffff" stroke-width="1"/>
<path d="M118.5 262.5v-6l-4 4h4" stroke="#00ff00" fill="none" stroke-linecap="square"/>
<line x1="108" y1="266.5" x2="125" y2="266.5" stroke="#00ffff" stroke-width="1"/>
<line x1="125" y1="266.5" x2="200" y2="244.2" stroke="#00ffff" stroke-width="1"/>
<path d="M118.5 322.5h-4v2h4v2h0v2h-4" stroke="#00ff00" fill="none" stroke-linecap="square"/>
<line x1="108" y1="331.5" x2="125" y2="331.5" stroke="#00ffff" stroke-width="1"/>
<line x1="125" y1="331.5" x2="205.7" y2="312" stroke="#00ffff" stroke-width="1"/>
<path d="M120.5 362.5v-6l-4 4h4M122.5 356.5h1v6" stroke="#00ff00" fill="none" stroke-linecap="square"/>
<line x1="113" y1="364.5" x2="132" y2="364.5" stroke="#00ffff" stroke-width="1"/>
<line x1="132" y1="364.5" x2="239" y2="354" stroke="#00ffff" stroke-width="1"/>
<path d="M119.5 390.5v-6l-3 4h4M122.5 384.5h2l1 1v4l-1 1h-2l-1-1v-4z" stroke="#00ff00" fill="none" stroke-linecap="square"/>
<line x1="113" y1="393.5" x2="132" y2="393.5" stroke="#00ffff" stroke-width="1"/>
<line x1="132" y1="393.5" x2="236.8" y2="358.3" stroke="#00ffff" stroke-width="1"/>
<path d="M116.5 409.5l1-1h2l1 1v1l-1 1h-1M119.5 411.5l1 1v1l-1 1h-2l-1-1M125.5 411.5h-3l-1-1v-1l1-1h2l1 1v4l-1 1h-2" stroke="#00ff00" fill="none" stroke-linecap="square"/>
<line x1="113" y1="417.5" x2="132" y2="417.5" stroke="#00ffff" stroke-width="1"/>
<line x1="132" y1="417.5" x2="236.8" y2="362.5" stroke="#00ffff" stroke-width="1"/>
<path d="M116.5 436.5h1h2h1v2h-1h-1M119.5 438.5l1 2h0l-1 2h-2l-1-2M122.5 436.5h2h1v2h-1h-2h-1v-2zM122.5 438.5l-1 2h0l1 2h2l1-2h0l-1-2" stroke="#00ff00" fill="none" stroke-linecap="square"/>
<line x1="113" y1="444.5" x2="132" y2="444.5" stroke="#00ffff" stroke-width="1"/>
<line x1="132" y1="444.5" x2="238" y2="364.6" stroke="#00ffff" stroke-width="1"/>
<path d="M161.5 438.5l1-2h2l1 2h0l-1 2h-1M164.5 440.5h1v2h-1h-2h-1M166.5 436.5h4v2l-3 4" stroke="#00ff00" fill="none" stroke-linecap="square"/>
<line x1="158" y1="446.5" x2="176" y2="446.5" stroke="#00ffff" stroke-width="1"/>
<line x1="176" y1="446.5" x2="239" y2="366.7" stroke="#00ffff" stroke-width="1"/>
<path d="M219.5 438.5l1-2h2l1 2h0l-1 2h-1M222.5 440.5h1v2h-1h-2h-1M227.5 436.5h-2l-1 2v4h1h2h1v-2h-1h-3" stroke="#00ff00" fill="none" stroke-linecap="square"/>
<line x1="215.8" y1="446.5" x2="233.1" y2="446.5" stroke="#00ffff" stroke-width="1"/>
<line x1="233.1" y1="446.5" x2="244.7" y2="340" stroke="#00ffff" stroke-width="1"/>
<path d="M239.5 438.5l1-2h2l1 2h0l-1 2h-1M242.5 440.5h1v2h-1h-2h-1M248.5 436.5h-4v4h3h1v2h-1h-3" stroke="#00ff00" fill="none" stroke-linecap="square"/>
<line x1="235.7" y1="446.5" x2="253" y2="446.5" stroke="#00ffff" stroke-width="1"/>
<line x1="253" y1="446.5" x2="259.5" y2="363" stroke="#00ffff" stroke-width="1"/>
<path d="M260.5 438.5l1-2h2l1 2h0l-1 2h-1M263.5 440.5h1v2h-1h-2h-1M268.5 442.5v-6l-3 4h4" stroke="#00ff00" fill="none" stroke-linecap="square"/>
<line x1="257" y1="446.5" x2="274.3" y2="446.5" stroke="#00ffff" stroke-width="1"/>
<line x1="274.3" y1="446.5" x2="342.4" y2="352.9" stroke="#00ffff" stroke-width="1"/>
<path d="M276.5 438.5l1-2h2l1 2h0l-1 2h-1M279.5 440.5h1v2h-1h-2h-1M281.5 438.5l1-2h2l1 2h0l-1 2h-1M284.5 440.5h1v2h-1h-2h-1" stroke="#00ff00" fill="none" stroke-linecap="square"/>
<line x1="274.3" y1="446.5" x2="291" y2="446.5" stroke="#00ffff" stroke-width="1"/>
<line x1="291" y1="446.5" x2="346" y2="355" stroke="#00ffff" stroke-width="1"/>
<path d="M296.5 438.5l1-2h2l1 2h0l-1 2h-1M299.5 440.5h1v2h-1h-2h-1M301.5 438.5l1-2h2l1 2h0l-4 4h4" stroke="#00ff00" fill="none" stroke-linecap="square"/>
<line x1="292.3" y1="446.5" x2="310.3" y2="446.5" stroke="#00ffff" stroke-width="1"/>
<line x1="310.3" y1="446.5" x2="348" y2="356" stroke="#00ffff" stroke-width="1"/>
<path d="M313.5 438.5l1-2h2l1 2h0l-1 2h-1M316.5 440.5h1v2h-1h-2h-1M318.5 438.5l1-2v6" stroke="#00ff00" fill="none" stroke-linecap="square"/>
<line x1="310.3" y1="446.5" x2="327" y2="446.5" stroke="#00ffff" stroke-width="1"/>
<line x1="327" y1="446.5" x2="360" y2="356" stroke="#00ffff" stroke-width="1"/>
<path d="M331.5 438.5l1-2h2l1 2h0l-1 2h-1M334.5 440.5h1v2h-1h-2h-1M337.5 436.5h2l1 2v4h-1h-2h-1v-4z" stroke="#00ff00" fill="none" stroke-linecap="square"/>
<line x1="327.6" y1="446.5" x2="343.7" y2="446.5" stroke="#00ffff" stroke-width="1"/>
<line x1="343.7" y1="446.5" x2="362" y2="356" stroke="#00ffff" stroke-width="1"/>
<path d="M348.5 438.5l1-2h2l1 2h0l-4 4h4M357.5 440.5h-3l-1-2h0l1-2h2l1 2v4h-1h-2" stroke="#00ff00" fill="none" stroke-linecap="square"/>
<line x1="344.5" y1="446.5" x2="361.2" y2="446.5" stroke="#00ffff" stroke-width="1"/>
<line x1="344.5" y1="446.5" x2="359.3" y2="363" stroke="#00ffff" stroke-width="1"/>
<path d="M366.5 438.5l1-2h2l1 2h0l-4 4h4M372.5 436.5h2l1 2h0l-1 2h-2l-1-2h0zM372.5 440.5h-1v2h1h2h1v-2h-1" stroke="#00ff00" fill="none" stroke-linecap="square"/>
<line x1="363.1" y1="446.5" x2="379.8" y2="446.5" stroke="#00ffff" stroke-width="1"/>
<line x1="363.1" y1="446.5" x2="371.5" y2="363" stroke="#00ffff" stroke-width="1"/>
<path d="M382.5 438.5l2-2h2v2h0l-4 4h4M388.5 436.5h4v2l-4 4" stroke="#00ff00" fill="none" stroke-linecap="square"/>
<line x1="379.8" y1="446.5" x2="397.2" y2="446.5" stroke="#00ffff" stroke-width="1"/>
<line x1="379.8" y1="446.5" x2="368.3" y2="352.9" stroke="#00ffff" stroke-width="1"/>
<path d="M399.5 438.5l1-2h2l1 2h0l-4 4h4M407.5 436.5h-2l-1 2v4h1h2h1v-2h-1h-3" stroke="#00ff00" fill="none" stroke-linecap="square"/>
<line x1="397.2" y1="446.5" x2="413.9" y2="446.5" stroke="#00ffff" stroke-width="1"/>
<line x1="397.2" y1="446.5" x2="371.5" y2="363" stroke="#00ffff" stroke-width="1"/>
<path d="M417.5 438.5l1-2h2l1 2h0l-4 4h4M426.5 436.5h-4v4h3h1v2h-1h-3" stroke="#00ff00" fill="none" stroke-linecap="square"/>
<line x1="415.2" y1="446.5" x2="431.9" y2="446.5" stroke="#00ffff" stroke-width="1"/>
<line x1="431.9" y1="446.5" x2="441.5" y2="346.4" stroke="#00ffff" stroke-width="1"/>
<path d="M435.5 438.5l1-2h2l1 2h0l-4 4h4M443.5 442.5v-6l-3 4h4" stroke="#00ff00" fill="none" stroke-linecap="square"/>
<line x1="431.9" y1="446.5" x2="449.9" y2="446.5" stroke="#00ffff" stroke-width="1"/>
<line x1="449.9" y1="446.5" x2="494" y2="350" stroke="#00ffff" stroke-width="1"/>
<path d="M463.5 438.5l1-2h2l1 2h0l-4 4h4M468.5 438.5l1-2h2l1 2h0l-1 2h-1M471.5 440.5h1v2h-1h-2h-1" stroke="#00ff00" fill="none" stroke-linecap="square"/>
<line x1="449.5" y1="446.5" x2="476.5" y2="446.5" stroke="#00ffff" stroke-width="1"/>
<line x1="476.5" y1="446.5" x2="499.6" y2="353" stroke="#00ffff" stroke-width="1"/>
<path d="M483.5 438.5l1-2h2l1 2h0l-4 4h4M488.5 438.5l1-2h2l1 2h0l-4 4h4" stroke="#00ff00" fill="none" stroke-linecap="square"/>
<line x1="477.7" y1="446.5" x2="497" y2="446.5" stroke="#00ffff" stroke-width="1"/>
<line x1="497" y1="446.5" x2="502" y2="353" stroke="#00ffff" stroke-width="1"/>
<path d="M522.5 438.5l2-2h2v2h0l-4 4h4M528.5 438.5l1-2v6" stroke="#00ff00" fill="none" stroke-linecap="square"/>
<line x1="518.8" y1="446.5" x2="535.5" y2="446.5" stroke="#00ffff" stroke-width="1"/>
<line x1="518.8" y1="446.5" x2="507.3" y2="353" stroke="#00ffff" stroke-width="1"/>
<path d="M539.5 438.5l1-2h2l1 2h0l-4 4h4M545.5 436.5h2l1 2v4h-1h-2h-1v-4z" stroke="#00ff00" fill="none" stroke-linecap="square"/>
<line x1="535.5" y1="446.5" x2="553.5" y2="446.5" stroke="#00ffff" stroke-width="1"/>
<line x1="535.5" y1="446.5" x2="510" y2="350.5" stroke="#00ffff" stroke-width="1"/>
<path d="M562.5 438.5l1-2v6M570.5 440.5h-4v-2h0v-2h2l2 2v4h-2h-2" stroke="#00ff00" fill="none" stroke-linecap="square"/>
<line x1="557.4" y1="446.5" x2="574" y2="446.5" stroke="#00ffff" stroke-width="1"/>
<line x1="557.4" y1="446.5" x2="542" y2="350.5" stroke="#00ffff" stroke-width="1"/>
<line x1="362.5" y1="363" x2="362.5" y2="446" stroke="#00ffff" stroke-width="1"/>
<line x1="203.5" y1="124" x2="203.5" y2="300" stroke="#00ffff" stroke-width="1"/>
<line x1="203.5" y1="126.5" x2="542.5" y2="126.5" stroke="#00ffff" stroke-width="1"/>
<path d="M367.5 126.5v-6l-2 4h3M371.5 120.5h-1h-1v4l1 2h1l1-2h0l-1-2h-2M376.5 122.5h-2h-1v-2h1h1h1v4l-1 2h-1M377.5 120.5h1v6" stroke="#00ff00" fill="none" stroke-linecap="square"/>
<line x1="542.5" y1="124" x2="542.5" y2="450" stroke="#00ffff" stroke-width="1"/>
<line x1="203.5" y1="142.5" x2="500.5" y2="142.5" stroke="#00ffff" stroke-width="1"/>
<path d="M346.5 142.5v-6l-2 4h3M348.5 137.5l1-1h1l1 1v1l-3 4h3M353.5 136.5h1l1 1v1l-1 1h-1l-1-1v-1zM353.5 139.5l-1 1v1l1 1h1l1-1v-1l-1-1M356.5 137.5l1-1v6" stroke="#00ff00" fill="none" stroke-linecap="square"/>
<line x1="501" y1="139" x2="501" y2="318" stroke="#00ffff" stroke-width="2"/>
<line x1="203.5" y1="154.5" x2="428.5" y2="154.5" stroke="#00ffff" stroke-width="1"/>
<path d="M343.5 148.5h1h1h1v2h-1h-1M345.5 150.5l1 2h0l-1 2h-1l-1-2M347.5 148.5h1h1h1v2l-3 4h3M354.5 148.5h-3v2h2l1 2h0l-1 2h-2M355.5 148.5h1v6" stroke="#00ff00" fill="none" stroke-linecap="square"/>
<line x1="428.5" y1="151" x2="428.5" y2="217" stroke="#00ffff" stroke-width="1"/>
<line x1="428.5" y1="217" x2="428.5" y2="350" stroke="#ffffff" stroke-width="1"/>
<line x1="227.5" y1="169.5" x2="542.5" y2="169.5" stroke="#00ffff" stroke-width="1"/>
<path d="M236.5 162.5l1-2h2v2h0l-3 4h3M241.5 160.5h2v2h0v2h-2l-1-2h0zM241.5 164.5h-1v2h1h2h0v-2h0M244.5 162.5l2-2v6" stroke="#00ff00" fill="none" stroke-linecap="square"/>
<path d="M275.5 160.5h1l1 2h0l-1 2h-1l-1-2h0zM275.5 164.5h-1v2h1h1h1v-2h-1M281.5 160.5h-3v4h2h1v2h-1h-2M283.5 160.5h1l1 2v4h-1h-1h-1v-4z" stroke="#00ff00" fill="none" stroke-linecap="square"/>
<path d="M303.5 166.5v-6l-2 4h3M308.5 160.5h-3v4h2h1v2h-1h-2M310.5 160.5h1l1 2v4h-1h-1h-1v-4z" stroke="#00ff00" fill="none" stroke-linecap="square"/>
<path d="M332.5 160.5h-3v4h2h1v2h-1h-2M336.5 160.5h-3v4h2h1v2h-1h-2M338.5 160.5h1l1 2v4h-1h-1h-1v-4z" stroke="#00ff00" fill="none" stroke-linecap="square"/>
<path d="M364.5 160.5h1l1 2h0l-1 2h-1l-1-2h0zM364.5 164.5h-1v2h1h1h1v-2h-1M367.5 162.5l1-2h1l1 2h0l-3 4h3M372.5 160.5h1l1 2v4h-1h-1h-1v-4z" stroke="#00ff00" fill="none" stroke-linecap="square"/>
<path d="M406.5 160.5h-3v4h2h1v2h-1h-2M410.5 160.5h-3v4h2h1v2h-1h-2M412.5 160.5h1l1 2v4h-1h-1h-1v-4z" stroke="#00ff00" fill="none" stroke-linecap="square"/>
<path d="M459.5 162.5l1-2v6M463.5 160.5h2l1 2v4h-1h-2h0v-4zM469.5 166.5v-6l-2 4h3M471.5 160.5h2l1 2v4h-1h-2h0v-4z" stroke="#00ff00" fill="none" stroke-linecap="square"/>
<path d="M499.5 160.5h3v2l-2 4M503.5 162.5l1-2h1l1 2h0l-1 2h-1M505.5 164.5h1v2h-1h-1h-1" stroke="#00ff00" fill="none" stroke-linecap="square"/>
<path d="M521.5 160.5h-3v4h3h0v2h0h-3M522.5 162.5l1-2h2v2h0l-3 4h3M526.5 162.5l2-2v6" stroke="#00ff00" fill="none" stroke-linecap="square"/>
<rect x="229" y="168" width="2" height="3" fill="#00ffff"/>
<rect x="243" y="168" width="2" height="3" fill="#00ffff"/>
<rect x="249" y="168" width="2" height="3" fill="#00ffff"/>
<rect x="288" y="168" width="2" height="3" fill="#00ffff"/>
<rect x="294" y="168" width="2" height="3" fill="#00ffff"/>
<rect x="319" y="168" width="2" height="3" fill="#00ffff"/>
<rect x="325" y="168" width="2" height="3" fill="#00ffff"/>
<rect x="344" y="168" width="2" height="3" fill="#00ffff"/>
<rect x="350" y="168" width="2" height="3" fill="#00ffff"/>
<rect x="387" y="168" width="2" height="3" fill="#00ffff"/>
<rect x="393" y="168" width="2" height="3" fill="#00ffff"/>
<rect x="425" y="168" width="2" height="3" fill="#00ffff"/>
<rect x="427" y="168" width="2" height="3" fill="#00ffff"/>
<rect x="500" y="168" width="2" height="3" fill="#00ffff"/>
<rect x="505" y="168" width="2" height="3" fill="#00ffff"/>
<rect x="541" y="168" width="2" height="3" fill="#00ffff"/>
<line x1="227.5" y1="166" x2="227.5" y2="217" stroke="#00ffff" stroke-width="1"/>
<line x1="292.5" y1="166" x2="292.5" y2="196" stroke="#00ffff" stroke-width="1"/>
<line x1="323.5" y1="166" x2="323.5" y2="196" stroke="#00ffff" stroke-width="1"/>
<line x1="347.5" y1="166" x2="347.5" y2="196" stroke="#00ffff" stroke-width="1"/>
<line x1="390.5" y1="166" x2="390.5" y2="196" stroke="#00ffff" stroke-width="1"/>
<line x1="506.5" y1="156" x2="506.5" y2="440" stroke="#00ffff" stroke-width="1"/>
<line x1="493" y1="157.5" x2="514" y2="157.5" stroke="#00ffff" stroke-width="1"/>
<path d="M504.5 148.5h-3v3h2l1 1v1l-1 1h-2M505.5 149.5l1-1h1l1 1v1l-1 1h-1M507.5 151.5l1 1v1l-1 1h-1l-1-1" stroke="#00ff00" fill="none" stroke-linecap="square"/>
<line x1="191.5" y1="205.5" x2="229.5" y2="205.5" stroke="#00ffff" stroke-width="1"/>
<line x1="191.5" y1="202" x2="191.5" y2="236" stroke="#00ffff" stroke-width="1"/>
<path d="M207.5 197.5h-3v3h2l1 1v1l-1 1h-2M211.5 197.5h-3v3h2l1 1v1l-1 1h-2M213.5 197.5h1l1 1v1l-1 1h-1l-1-1v-1zM213.5 200.5l-1 1v1l1 1h1l1-1v-1l-1-1" stroke="#00ff00" fill="none" stroke-linecap="square"/>
<line x1="276.5" y1="176" x2="276.5" y2="211.5" stroke="#00ffff" stroke-width="1"/>
<line x1="253.5" y1="196.5" x2="280" y2="196.5" stroke="#00ffff" stroke-width="1"/>
<line x1="253.5" y1="204.5" x2="280" y2="204.5" stroke="#00ffff" stroke-width="1"/>
<g transform="rotate(-90 273 182)"><path d="M267.5 180.5l1-1v5M271.5 180.5v-1h2l1 1v1l-3 3h3M275.5 179.5h2l1 1v3l-1 1h-2v-1v-3z" stroke="#00ff00" fill="none" stroke-linecap="square"/></g>
<line x1="263.5" y1="204" x2="263.5" y2="235" stroke="#00ffff" stroke-width="1"/>
<line x1="229.5" y1="271.5" x2="387.5" y2="271.5" stroke="#00ffff" stroke-width="1"/>
<line x1="229.5" y1="218" x2="229.5" y2="274" stroke="#00ffff" stroke-width="1"/>
<path d="M254.5 262.5h-2v2v4h0h2h0v-2h0h-2M256.5 264.5l1-2v6M260.5 262.5h1l1 2v4h-1h-1h-1v-4z" stroke="#00ff00" fill="none" stroke-linecap="square"/>
<path d="M322.5 264.5l2-2v6M328.5 262.5h-2v2v4h0h2h1v-2h-1h-2M330.5 262.5h3v2l-3 4M334.5 262.5h2l1 2v4h-1h-2h0v-4z" stroke="#00ff00" fill="none" stroke-linecap="square"/>
<line x1="272.5" y1="265" x2="272.5" y2="274" stroke="#00ffff" stroke-width="1"/>
<line x1="387.5" y1="262" x2="387.5" y2="274" stroke="#00ffff" stroke-width="1"/>
<line x1="162.5" y1="235" x2="162.5" y2="295" stroke="#00ffff" stroke-width="1"/>
<line x1="157.5" y1="277.5" x2="157.5" y2="339.5" stroke="#00ffff" stroke-width="1"/>
<line x1="154" y1="277.5" x2="182.5" y2="277.5" stroke="#00ffff" stroke-width="1"/>
<line x1="154" y1="339.5" x2="191.5" y2="339.5" stroke="#00ffff" stroke-width="1"/>
<line x1="158.5" y1="298.5" x2="182.5" y2="298.5" stroke="#00ffff" stroke-width="1"/>
<line x1="172.5" y1="270" x2="172.5" y2="315.5" stroke="#00ffff" stroke-width="1"/>
<line x1="168" y1="284.5" x2="182.5" y2="284.5" stroke="#00ffff" stroke-width="1"/>
<line x1="140" y1="235.5" x2="191.5" y2="235.5" stroke="#00ffff" stroke-width="1"/>
<line x1="223" y1="393.5" x2="501" y2="393.5" stroke="#00ffff" stroke-width="1"/>
<line x1="229.5" y1="406.5" x2="387.5" y2="406.5" stroke="#00ffff" stroke-width="1"/>
<line x1="229.5" y1="341" x2="229.5" y2="409" stroke="#00ffff" stroke-width="1"/>
<path d="M228.5 386.5h2v6M235.5 386.5h-3v2h2l1 2h0l-1 2h-2M236.5 386.5h2h1v4l-1 2h-2v-2v-4z" stroke="#00ff00" fill="none" stroke-linecap="square"/>
<path d="M284.5 386.5h2v6M291.5 386.5h-3v2h2l1 2h0l-1 2h-2M292.5 386.5h2h1v4l-1 2h-2v-2v-4zM296.5 386.5h2h1v4l-1 2h-2v-2v-4z" stroke="#00ff00" fill="none" stroke-linecap="square"/>
<path d="M242.5 400.5l1-2h2l1 2h0l-1 2h-1M245.5 402.5h1v2h-1h-2h-1M247.5 398.5h2l1 2h0l-1 2h-2l-1-2h0zM247.5 402.5h-1v2h1h2h1v-2h-1M251.5 398.5h2l1 2v4h-1h-2h-1v-4z" stroke="#00ff00" fill="none" stroke-linecap="square"/>
<path d="M314.5 400.5l1-2v6M320.5 402.5h-2l-1-2h0l1-2h1l1 2v4h-1h-1M322.5 398.5h1l1 2v4h-1h-1h-1v-4zM326.5 398.5h1l1 2v4h-1h-1h-1v-4z" stroke="#00ff00" fill="none" stroke-linecap="square"/>
<path d="M352.5 386.5h-2v2h2v2h0v2h-2M354.5 386.5h2h0v4v2h-2v-2v-4zM358.5 386.5h2h0v4v2h-2v-2v-4z" stroke="#00ff00" fill="none" stroke-linecap="square"/>
<path d="M408.5 386.5h2v6M415.5 386.5h-3v2h2l1 2h0l-1 2h-2M416.5 386.5h1v6M420.5 386.5h1h1v4l-1 2h-1l-1-2v-4z" stroke="#00ff00" fill="none" stroke-linecap="square"/>
<path d="M479.5 392.5v-6l-3 4h4M484.5 386.5h-4v2h3l1 2h0l-1 2h-3M485.5 386.5h2h1v4l-1 2h-2l-1-2v-4z" stroke="#00ff00" fill="none" stroke-linecap="square"/>
<line x1="256.5" y1="352" x2="256.5" y2="400" stroke="#00ffff" stroke-width="1"/>
<line x1="469.5" y1="340" x2="469.5" y2="396" stroke="#00ffff" stroke-width="1"/>
<line x1="387.5" y1="368" x2="387.5" y2="409" stroke="#00ffff" stroke-width="1"/>
<line x1="365" y1="352" x2="365" y2="396" stroke="#00ffff" stroke-width="1"/>
<path d="M225,217.5 L429,217.5" stroke="#ffffff" stroke-width="2" fill="none"/>
<path d="M429,217.5 Q431,217.5 434,222 L494,318" stroke="#ffffff" stroke-width="1.3" fill="none"/>
<line x1="228" y1="350.5" x2="497" y2="350.5" stroke="#ffffff" stroke-width="2"/>
<path d="M225,217.5 C212,219 203,250 203,285 C203,320 212,348 228,350.5" stroke="#ffffff" stroke-width="2" fill="none"/>
<line x1="243" y1="206" x2="243" y2="339" stroke="#ffffff" stroke-width="1"/>
<line x1="251.5" y1="206" x2="251.5" y2="339" stroke="#ffffff" stroke-width="1"/>
<line x1="243" y1="339.5" x2="251.5" y2="339.5" stroke="#ffffff" stroke-width="1"/>
<line x1="247.5" y1="189" x2="247.5" y2="345" stroke="#ff0000" stroke-width="1" stroke-dasharray="6,3"/>
<rect x="239" y="196" width="15" height="2" fill="#ffffff"/>
<rect x="238" y="203" width="18" height="3" fill="#ffffff"/>
<line x1="243" y1="198" x2="243" y2="203" stroke="#ffffff" stroke-width="1"/>
<line x1="251.5" y1="198" x2="251.5" y2="203" stroke="#ffffff" stroke-width="1"/>
<rect x="238" y="200" width="1" height="8" fill="#ff0000"/>
<rect x="255" y="200" width="1" height="8" fill="#ff0000"/>
<rect x="282" y="202" width="21" height="2" fill="#ffffff"/>
<line x1="286.5" y1="204" x2="286.5" y2="218" stroke="#ffffff" stroke-width="1.5"/>
<line x1="297.5" y1="204" x2="297.5" y2="218" stroke="#ffffff" stroke-width="1.5"/>
<line x1="292.5" y1="196" x2="292.5" y2="226" stroke="#ff0000" stroke-width="1"/>
<rect x="316" y="205.5" width="15" height="2" fill="#ffffff"/>
<line x1="320.5" y1="207.5" x2="320.5" y2="218" stroke="#ffffff" stroke-width="1.5"/>
<line x1="327.5" y1="207.5" x2="327.5" y2="218" stroke="#ffffff" stroke-width="1.5"/>
<line x1="323.5" y1="196" x2="323.5" y2="226" stroke="#ff0000" stroke-width="1"/>
<rect x="341" y="205.5" width="14" height="2" fill="#ffffff"/>
<line x1="345.5" y1="207.5" x2="345.5" y2="218" stroke="#ffffff" stroke-width="1.5"/>
<line x1="350.5" y1="207.5" x2="350.5" y2="218" stroke="#ffffff" stroke-width="1.5"/>
<line x1="347.5" y1="196" x2="347.5" y2="226" stroke="#ff0000" stroke-width="1"/>
<rect x="368" y="199" width="46" height="4" fill="#ffffff"/>
<line x1="373.5" y1="203" x2="373.5" y2="218" stroke="#ffffff" stroke-width="1.5"/>
<line x1="407.5" y1="203" x2="407.5" y2="218" stroke="#ffffff" stroke-width="1.5"/>
<path d="M374,218 Q390.5,224 407,218" stroke="#ffffff" stroke-width="1.5" fill="none"/>
<path d="M390,185 L410,185 Q416,186 416,192 L416,210 L409,212" stroke="#ffffff" stroke-width="1.5" fill="none"/>
<path d="M386,199 Q390,192 395,199" stroke="#ffffff" stroke-width="1" fill="none"/>
<line x1="390.5" y1="180" x2="390.5" y2="227" stroke="#ff0000" stroke-width="1" stroke-dasharray="5,2"/>
<rect x="267.8" y="232.5" width="9" height="27.5" stroke="#ffffff" stroke-width="1" fill="none" stroke-dasharray="4,2"/>
<rect x="270.3" y="236" width="4" height="20" stroke="#ffffff" stroke-width="1" fill="none" stroke-dasharray="3,2"/>
<line x1="264.3" y1="247.5" x2="280.3" y2="247.5" stroke="#ff0000" stroke-width="1"/>
<line x1="272.3" y1="228" x2="272.3" y2="265" stroke="#ff0000" stroke-width="1"/>
<rect x="382.9" y="232.5" width="9" height="27.5" stroke="#ffffff" stroke-width="1" fill="none" stroke-dasharray="4,2"/>
<rect x="385.4" y="236" width="4" height="20" stroke="#ffffff" stroke-width="1" fill="none" stroke-dasharray="3,2"/>
<line x1="379.4" y1="247.5" x2="395.4" y2="247.5" stroke="#ff0000" stroke-width="1"/>
<line x1="387.4" y1="228" x2="387.4" y2="265" stroke="#ff0000" stroke-width="1"/>
<rect x="191" y="234" width="21" height="2" fill="#ffffff"/>
<rect x="183" y="235" width="8" height="1" fill="#ff0000"/>
<path d="M197,240 L206,251" stroke="#ffffff" stroke-width="1" fill="none"/>
<line x1="191.5" y1="277.5" x2="203" y2="277.5" stroke="#ffffff" stroke-width="2"/>
<rect x="191" y="274.5" width="2" height="6" fill="#ffffff"/>
<line x1="182" y1="277.5" x2="191" y2="277.5" stroke="#ff0000" stroke-width="1"/>
<line x1="203" y1="277.5" x2="210" y2="277.5" stroke="#ff0000" stroke-width="1"/>
<line x1="191.5" y1="298.5" x2="203" y2="298.5" stroke="#ffffff" stroke-width="2"/>
<rect x="191" y="295.5" width="2" height="6" fill="#ffffff"/>
<line x1="182" y1="298.5" x2="191" y2="298.5" stroke="#ff0000" stroke-width="1"/>
<line x1="203" y1="298.5" x2="210" y2="298.5" stroke="#ff0000" stroke-width="1"/>
<line x1="191.5" y1="339.5" x2="214" y2="339.5" stroke="#ffffff" stroke-width="2"/>
<rect x="191" y="336" width="2" height="7" fill="#ffffff"/>
<line x1="214" y1="339.5" x2="218" y2="339.5" stroke="#ff0000" stroke-width="1"/>
<path d="M194.5,338 L208.5,324 M196,339 L209.5,325.5" stroke="#ffffff" stroke-width="1" fill="none"/>
<line x1="182.5" y1="284.5" x2="479" y2="284.5" stroke="#ff0000" stroke-width="1" stroke-dasharray="14,3,3,3"/>
<circle cx="240" cy="339.5" r="2.5" stroke="#fff" fill="none"/>
<line x1="229.5" y1="341" x2="229.5" y2="351" stroke="#ff0000" stroke-width="1"/>
<circle cx="240" cy="358" r="3.5" stroke="#fff" fill="none"/>
<rect x="238" y="351" width="5" height="3" fill="#ffffff"/>
<path d="M246,351.5 L271.5,351.5 L265,367.5 L247,367.5 L247,352" stroke="#ffffff" stroke-width="1.5" fill="none"/>
<line x1="256.5" y1="351" x2="256.5" y2="375" stroke="#ff0000" stroke-width="1"/>
<line x1="330" y1="321.4" x2="499" y2="321.4" stroke="#ffffff" stroke-width="1"/>
<line x1="330" y1="323.9" x2="499" y2="323.9" stroke="#ffffff" stroke-width="1"/>
<line x1="330" y1="322.9" x2="499" y2="322.9" stroke="#ff0000" stroke-width="1" stroke-dasharray="10,3"/>
<line x1="330" y1="333.4" x2="499" y2="333.4" stroke="#ffffff" stroke-width="1"/>
<line x1="330" y1="335.9" x2="499" y2="335.9" stroke="#ffffff" stroke-width="1"/>
<line x1="330" y1="334.9" x2="499" y2="334.9" stroke="#ff0000" stroke-width="1" stroke-dasharray="10,3"/>
<line x1="330" y1="345.3" x2="499" y2="345.3" stroke="#ffffff" stroke-width="1"/>
<line x1="330" y1="347.8" x2="499" y2="347.8" stroke="#ffffff" stroke-width="1"/>
<line x1="330" y1="346.8" x2="499" y2="346.8" stroke="#ff0000" stroke-width="1" stroke-dasharray="10,3"/>
<path d="M330,320.5 A13.5,13.5 0 0 0 330,348" stroke="#ffffff" stroke-width="1" fill="none"/>
<path d="M330,323 A11,11 0 0 0 330,345.5" stroke="#ff0000" stroke-width="1" fill="none"/>
<circle cx="335" cy="334.5" r="2" stroke="#fff" fill="#fff"/>
<line x1="338" y1="318" x2="338" y2="350" stroke="#ffffff" stroke-width="2"/>
<line x1="386" y1="318" x2="386" y2="350" stroke="#ffffff" stroke-width="2"/>
<line x1="435" y1="318" x2="435" y2="350" stroke="#ffffff" stroke-width="2"/>
<line x1="483.5" y1="318" x2="483.5" y2="350" stroke="#ffffff" stroke-width="2"/>
<line x1="338.5" y1="309.5" x2="483.5" y2="309.5" stroke="#00ffff" stroke-width="1"/>
<line x1="338.5" y1="306" x2="338.5" y2="318" stroke="#00ffff" stroke-width="1"/>
<line x1="386.5" y1="306" x2="386.5" y2="318" stroke="#00ffff" stroke-width="1"/>
<line x1="435.5" y1="306" x2="435.5" y2="318" stroke="#00ffff" stroke-width="1"/>
<line x1="483.5" y1="306" x2="483.5" y2="318" stroke="#00ffff" stroke-width="1"/>
<path d="M356.5 302.5h2h0l-2 6M360.5 302.5h2h0v4v2h-2v-2v-4zM364.5 302.5h2h0v4v2h-2v-2v-4z" stroke="#00ff00" fill="none" stroke-linecap="square"/>
<path d="M404.5 302.5h2h0l-2 6M408.5 302.5h2h0v4v2h-2v-2v-4zM412.5 302.5h2h0v4v2h-2v-2v-4z" stroke="#00ff00" fill="none" stroke-linecap="square"/>
<path d="M452.5 302.5h2h0l-2 6M456.5 302.5h2h0v4v2h-2v-2v-4zM460.5 302.5h2h0v4v2h-2v-2v-4z" stroke="#00ff00" fill="none" stroke-linecap="square"/>
<path d="M373,351.5 L398,351.5 M394.5,352 L394.5,367.5 M374,352 L381.5,366.5 M379,367.5 L396,367.5" stroke="#ffffff" stroke-width="1.5" fill="none"/>
<line x1="387.5" y1="351" x2="387.5" y2="372" stroke="#ff0000" stroke-width="1"/>
<path d="M342.5,351 L342.5,362.5 M347.5,351 L347.5,362.5 M341,362.5 L350,362.5" stroke="#ffffff" stroke-width="1" fill="none"/>
<path d="M361.5,351 L361.5,363.5 M368.5,351 L368.5,363.5 M359,363.5 L375,363.5" stroke="#ffffff" stroke-width="1" fill="none"/>
<line x1="345" y1="351" x2="345" y2="368" stroke="#ff0000" stroke-width="1"/>
<line x1="365" y1="351" x2="365" y2="368" stroke="#ff0000" stroke-width="1"/>
<g transform="rotate(-90 328 373)"><path d="M322.5 371.5l2-1v5M326.5 370.5h2l1 1v1h-1h-2h0v-1zM326.5 372.5v1v1v1h2l1-1v-1l-1-1M330.5 370.5h2l1 1v3l-1 1h-2v-1v-3z" stroke="#00ff00" fill="none" stroke-linecap="square"/></g>
<g transform="rotate(-90 350 374)"><path d="M346.5 372.5l2-1v5M350.5 371.5h2l1 1v1l-1 1h-2v-1v-1zM350.5 374.5h0v1v1h2l1-1v-1h-1" stroke="#00ff00" fill="none" stroke-linecap="square"/></g>
<path d="M343.5 365.5h1M342.5 366.5h2M342.5 363.5v3M344.5 362.5v3M345.5 363.5v2" stroke="#00ff00" fill="none" stroke-linecap="square"/>
<path d="M373.5 365.5h1M373.5 366.5h1M373.5 368.5h1M374.5 364.5v4M375.5 364.5v3" stroke="#00ff00" fill="none" stroke-linecap="square"/>
<rect x="500" y="318" width="7" height="34" fill="url(#h3)"/>
<rect x="500" y="318" width="7" height="2" fill="#ffff00"/>
<rect x="500" y="349" width="7" height="2" fill="#ffff00"/>
<line x1="496.5" y1="318" x2="496.5" y2="351" stroke="#ffffff" stroke-width="1"/>
<line x1="510.5" y1="318" x2="510.5" y2="351" stroke="#ffffff" stroke-width="1"/>
<line x1="507" y1="318.5" x2="536" y2="318.5" stroke="#ffffff" stroke-width="1.5"/>
<line x1="507" y1="351" x2="536" y2="351" stroke="#ffffff" stroke-width="1.5"/>
<path d="M536,318.5 Q542,320 542,334.7 Q542,349 536,351" stroke="#ffffff" stroke-width="1.5" fill="none"/>
<line x1="507" y1="334.5" x2="542" y2="334.5" stroke="#ffffff" stroke-width="1"/>
<rect x="496" y="314" width="17" height="1" fill="#ff0000"/>
<rect x="496" y="354" width="17" height="1" fill="#ff0000"/>
<circle cx="503.6" cy="317.1" r="11.3" stroke="#e8a060" fill="none"/>
<path d="M505,328 a3.5,3.5 0 0 1 0,7 a3.5,3.5 0 0 1 0,7 a3.5,3.5 0 0 1 0,7" stroke="#e8a060" stroke-width="1" fill="none"/>
<circle cx="469.6" cy="339" r="2.5" stroke="#fff" fill="none"/>
<line x1="467" y1="339.5" x2="472" y2="339.5" stroke="#ffffff" stroke-width="1"/>
<rect x="520" y="305" width="10" height="2" fill="#ffffff"/>
<line x1="523" y1="307" x2="523" y2="318" stroke="#ffffff" stroke-width="1"/>
<line x1="528" y1="307" x2="528" y2="318" stroke="#ffffff" stroke-width="1"/>
<rect x="520" y="362" width="10" height="2" fill="#ffffff"/>
<line x1="523" y1="351" x2="523" y2="362" stroke="#ffffff" stroke-width="1"/>
<line x1="528" y1="351" x2="528" y2="362" stroke="#ffffff" stroke-width="1"/>
<line x1="525.5" y1="294" x2="525.5" y2="373" stroke="#ff0000" stroke-width="1"/>
<path d="M528.5 304.5v-4M528.5 300.5h0h2h2v4" stroke="#00ff00" fill="none" stroke-linecap="square"/>
<path d="M527.5 372.5v-8h3l1 1v1l-1 2h-3" stroke="#00ff00" fill="none" stroke-linecap="square"/>
<path d="M519.5 322.5v4" stroke="#00ff00" fill="none" stroke-linecap="square"/>
<path d="M520.5 336.5h-4v4M516.5 338.5h3" stroke="#00ff00" fill="none" stroke-linecap="square"/>
<line x1="513" y1="328.5" x2="530" y2="328.5" stroke="#00ffff" stroke-width="1"/>
<line x1="510" y1="342.5" x2="527" y2="342.5" stroke="#00ffff" stroke-width="1"/>
<line x1="479" y1="284.5" x2="571" y2="284.5" stroke="#00ffff" stroke-width="1"/>
<line x1="568.5" y1="284.5" x2="568.5" y2="334.5" stroke="#00ffff" stroke-width="1"/>
<line x1="542" y1="334.5" x2="571" y2="334.5" stroke="#00ffff" stroke-width="1"/>
<g transform="rotate(-90 565 305)"><path d="M559.5 302.5h3v1l-2 4M563.5 303.5l1-1h1l1 1v1l-3 3h3M570.5 302.5h-3v2h2l1 1v1l-1 1h-2" stroke="#00ff00" fill="none" stroke-linecap="square"/></g>
<line x1="536" y1="318.5" x2="559" y2="318.5" stroke="#00ffff" stroke-width="1"/>
<line x1="536" y1="351.5" x2="559" y2="351.5" stroke="#00ffff" stroke-width="1"/>
<line x1="555.5" y1="318.5" x2="555.5" y2="368" stroke="#00ffff" stroke-width="1"/>
<g transform="rotate(-90 552 337)"><path d="M545.5 335.5h1l1 1v1l-1 1h-1l-1-1v-1zM546.5 334.5v5M550.5 339.5v-5l-2 3h3M555.5 334.5h-3v2h2l1 1v1l-1 1h-2M557.5 334.5h1l1 1v3l-1 1h-1l-1-1v-3z" stroke="#00ff00" fill="none" stroke-linecap="square"/></g>
<g transform="rotate(-90 552 361)"><path d="M548.5 359.5l2-1v5M554.5 363.5v-5l-2 3h3" stroke="#00ff00" fill="none" stroke-linecap="square"/></g>
<line x1="507" y1="298.5" x2="525.5" y2="298.5" stroke="#00ffff" stroke-width="1"/>
<path d="M508.5 290.5h1h2h1v2l-4 4h4M512.5 290.5h4h0l-3 6M517.5 290.5h2h1v4l-1 2h-2l-1-2v-4z" stroke="#00ff00" fill="none" stroke-linecap="square"/>
<path d="M482.5 244.5l2-1v6M488.5 243.5h2v1v1v1h-2l-2-1v-1zM488.5 246.5l-2 1v1l2 1h2v-1v-1v-1" stroke="#00ff00" fill="none" stroke-linecap="square"/>
<line x1="478.5" y1="252.5" x2="496" y2="252.5" stroke="#00ffff" stroke-width="1"/>
<line x1="478.5" y1="252.5" x2="478" y2="280" stroke="#00ffff" stroke-width="1"/>
<rect x="471.5" y="280.5" width="8" height="7" stroke="#ffffff" stroke-width="1" fill="none"/>
<path d="M488.5 287.5h-2l-1 1v2h1h2" stroke="#00ff00" fill="none" stroke-linecap="square"/>
<path d="M479,293.5 L493,293.5 L497,306" stroke="#00ffff" stroke-width="1" fill="none"/>
<path d="M476.5 358.5h-2v1v2v1h2" stroke="#00ff00" fill="none" stroke-linecap="square"/>
<path d="M471,361.5 L486,361.5 L498,345" stroke="#00ffff" stroke-width="1" fill="none"/>
<path d="M254.5 182.5h-2v1v7M251.5 184.5h2" stroke="#00ff00" stroke-width="2" fill="none" stroke-linecap="square"/>
<path d="M284.5 192.5v8h4v-1v-3v-1h-4" stroke="#00ff00" stroke-width="2" fill="none" stroke-linecap="square"/>
<path d="M334.5 196.5h3M332.5 197.5h4M332.5 199.5h5M334.5 200.5h2M332.5 201.5h5M333.5 198.5v2M339.5 196.5h3M338.5 197.5h5M339.5 198.5h3M338.5 199.5h5M339.5 200.5h3M340.5 201.5h2M340.5 202.5h3M338.5 197.5v5M341.5 197.5v3M343.5 197.5v3" stroke="#00ff00" fill="none" stroke-linecap="square"/>
<path d="M372.5 196.5v-4M372.5 192.5h2h1v4M375.5 192.5h1h2v4" stroke="#00ff00" fill="none" stroke-linecap="square"/>
<path d="M184.5 236.5v8M188.5 239.5l-4 4M184.5 242.5l4 2" stroke="#00ff00" stroke-width="2" fill="none" stroke-linecap="square"/>
<path d="M184.5 270.5v8M188.5 273.5l-4 4M184.5 276.5l4 2" stroke="#00ff00" stroke-width="2" fill="none" stroke-linecap="square"/>
<path d="M184.5 290.5v8M188.5 293.5l-4 4M184.5 296.5l4 2" stroke="#00ff00" stroke-width="2" fill="none" stroke-linecap="square"/>
<path d="M184.5 332.5v8M188.5 334.5l-4 4M186.5 337.5l2 3" stroke="#00ff00" stroke-width="2" fill="none" stroke-linecap="square"/>
<path d="M236.5 333.5h-2v1v1v1h2M236.5 333.5v6h-2" stroke="#00ff00" stroke-width="2" fill="none" stroke-linecap="square"/>
<path d="M244.5 368.5h-2v2v2h0h2" stroke="#00ff00" fill="none" stroke-linecap="square"/>
<g transform="rotate(-90 440 363)"><path d="M438.5 365.5v-5l-2 3h3M443.5 360.5h-3v2h2l1 1v1l-1 1h-2" stroke="#00ff00" fill="none" stroke-linecap="square"/></g>
<line x1="444.5" y1="343" x2="444.5" y2="368" stroke="#00ffff" stroke-width="1"/>
<g transform="rotate(-90 155 308)"><path d="M150.5 305.5h1l1 1v1l-1 1h-1l-1-1v-1zM150.5 308.5h-1v1l1 1h1l1-1v-1h-1M154.5 305.5h1l1 1v3l-1 1h-1l-1-1v-3zM158.5 305.5h1l1 1v3l-1 1h-1l-1-1v-3z" stroke="#00ff00" fill="none" stroke-linecap="square"/></g>
<g transform="rotate(-90 159 266)"><path d="M156.5 266.5h-2l-1-1v-1l1-1h1l1 1v3l-1 1h-1M158.5 263.5h1l1 1v3l-1 1h-1l-1-1v-3zM162.5 263.5h1l1 1v3l-1 1h-1l-1-1v-3z" stroke="#00ff00" fill="none" stroke-linecap="square"/></g>
<g transform="rotate(-90 168 281)"><path d="M162.5 279.5l2-1v5M166.5 278.5h2l1 1v3l-1 1h-2v-1v-3zM170.5 278.5h2l1 1v3l-1 1h-2v-1v-3z" stroke="#00ff00" fill="none" stroke-linecap="square"/></g>
<g transform="rotate(-90 168 308)"><path d="M162.5 306.5l1-1h1l1 1v1l-3 3h3M167.5 305.5h1l1 1v3l-1 1h-1l-1-1v-3zM171.5 305.5h1l1 1v3l-1 1h-1l-1-1v-3z" stroke="#00ff00" fill="none" stroke-linecap="square"/></g>
<g transform="rotate(-90 259 225)"><path d="M253.5 223.5l1-1v5M257.5 222.5h2l1 1v1h-1h-2h0v-1zM257.5 224.5v1v1v1h2l1-1v-1l-1-1M261.5 222.5h2l1 1v3l-1 1h-2v-1v-3z" stroke="#00ff00" fill="none" stroke-linecap="square"/></g>
<g transform="rotate(-90 300 277)"><path d="M291.5 275.5h2v1v1v1h-2l-1-1v-1zM292.5 274.5v5M294.5 275.5l2-1v5M301.5 276.5h-3h0v-1v-1h2l1 1v3l-1 1h-2M302.5 274.5h2l1 1v3l-1 1h-2v-1v-3zM306.5 274.5h2l1 1v3l-1 1h-2v-1v-3z" stroke="#00ff00" fill="none" stroke-linecap="square"/></g>
<line x1="303.5" y1="219" x2="303.5" y2="350" stroke="#00ffff" stroke-width="1"/>
<circle cx="715.4" cy="284.2" r="66.5" stroke="#fff" stroke-width="2" fill="none" shape-rendering="geometricPrecision"/>
<path d="M651,302 A66.5,66.5 0 0 0 692,346" stroke="#ffffff" stroke-width="1.5" fill="none"/>
<path d="M653,300 A64,64 0 0 0 683,337" stroke="#ffffff" stroke-width="1" fill="none"/>
<path d="M780,302 A66.5,66.5 0 0 1 739,346" stroke="#ffffff" stroke-width="1.5" fill="none"/>
<path d="M777.5,300 A64,64 0 0 1 748,337" stroke="#ffffff" stroke-width="1" fill="none"/>
<line x1="637.5" y1="284.5" x2="793.5" y2="284.5" stroke="#ff0000" stroke-width="1" stroke-dasharray="14,3,3,3"/>
<line x1="715.5" y1="186" x2="715.5" y2="367" stroke="#ff0000" stroke-width="1" stroke-dasharray="14,3,3,3"/>
<line x1="625" y1="284.5" x2="637.5" y2="284.5" stroke="#00ffff" stroke-width="1"/>
<line x1="793.5" y1="284.5" x2="813" y2="284.5" stroke="#00ffff" stroke-width="1"/>
<rect x="692.5" y="200.5" width="46" height="3.5" stroke="#ffffff" stroke-width="1" fill="none"/>
<rect x="697" y="205" width="46" height="2" fill="#ffffff"/>
<line x1="699.5" y1="207" x2="699.5" y2="218.5" stroke="#ffffff" stroke-width="1"/>
<line x1="703.0" y1="207" x2="703.0" y2="218.5" stroke="#ffffff" stroke-width="1"/>
<line x1="709.5" y1="207" x2="709.5" y2="218.5" stroke="#ffffff" stroke-width="1"/>
<line x1="712.0" y1="207" x2="712.0" y2="218.5" stroke="#ffffff" stroke-width="1"/>
<line x1="720.0" y1="207" x2="720.0" y2="218.5" stroke="#ffffff" stroke-width="1"/>
<line x1="722.5" y1="207" x2="722.5" y2="218.5" stroke="#ffffff" stroke-width="1"/>
<line x1="736.0" y1="207" x2="736.0" y2="218.5" stroke="#ffffff" stroke-width="1"/>
<line x1="739.5" y1="207" x2="739.5" y2="218.5" stroke="#ffffff" stroke-width="1"/>
<line x1="701.5" y1="206" x2="701.5" y2="218" stroke="#ff0000" stroke-width="1"/>
<line x1="736.5" y1="206" x2="736.5" y2="218" stroke="#ff0000" stroke-width="1"/>
<line x1="715.5" y1="186" x2="715.5" y2="210" stroke="#ffffff" stroke-width="2"/>
<line x1="701.5" y1="178.5" x2="736.5" y2="178.5" stroke="#00ffff" stroke-width="1"/>
<line x1="701.5" y1="176" x2="701.5" y2="205" stroke="#00ffff" stroke-width="1"/>
<line x1="736.5" y1="176" x2="736.5" y2="205" stroke="#00ffff" stroke-width="1"/>
<path d="M712.5 173.5v-1h2v1v1h0h-1M714.5 174.5v1v1v1h-2v-1M716.5 172.5h2v1v3v1h-2v-1v-3zM720.5 172.5h2v1v3v1h-2v-1v-3z" stroke="#00ff00" fill="none" stroke-linecap="square"/>
<path d="M718.5 190.5v-5M718.5 186.5v-1l1 1v4M719.5 186.5l1-1l1 1v4M725.5 182.5l-2 3v3l2 2M729.5 185.5v5l-1 2h-1M729.5 182.5v2M732.5 189.5v3M733.5 182.5v8h2l1-1v-3l-1-1h-2M739.5 189.5l-1 3M743.5 182.5h-2l-1 2v6M739.5 185.5h3M745.5 182.5l1 3v3l-1 2" stroke="#00ff00" fill="none" stroke-linecap="square"/>
<path d="M655.6,237.6 A5,5 0 0 0 652.1,247 L659.6,250.5 M655.6,237.6 L663.6,239.5" stroke="#ffffff" stroke-width="1" fill="none"/>
<line x1="651.6" y1="242.5" x2="655.6" y2="242.5" stroke="#ff0000" stroke-width="1"/>
<line x1="654.1" y1="240.5" x2="654.1" y2="244.5" stroke="#ff0000" stroke-width="1"/>
<path d="M775.7,237.6 A5,5 0 0 1 779.2,247 L771.7,250.5 M775.7,237.6 L767.7,239.5" stroke="#ffffff" stroke-width="1" fill="none"/>
<line x1="775.7" y1="242.5" x2="779.7" y2="242.5" stroke="#ff0000" stroke-width="1"/>
<line x1="778.2" y1="240.5" x2="778.2" y2="244.5" stroke="#ff0000" stroke-width="1"/>
<circle cx="729" cy="235.5" r="3" stroke="#fff" fill="none"/>
<line x1="724" y1="236.0" x2="734" y2="236.0" stroke="#ff0000" stroke-width="1"/>
<line x1="729.5" y1="230.5" x2="729.5" y2="240.5" stroke="#ff0000" stroke-width="1"/>
<circle cx="729.5" cy="297.9" r="3" stroke="#fff" fill="none"/>
<line x1="724.5" y1="298.4" x2="734.5" y2="298.4" stroke="#ff0000" stroke-width="1"/>
<line x1="730.0" y1="292.9" x2="730.0" y2="302.9" stroke="#ff0000" stroke-width="1"/>
<path d="M720.5 238.5v6M722.5 240.5l-2 2M720.5 242.5l2 2M724.5 238.5h1v6" stroke="#00ff00" fill="none" stroke-linecap="square"/>
<line x1="715.5" y1="248.5" x2="749" y2="248.5" stroke="#00ffff" stroke-width="1"/>
<line x1="729.5" y1="240" x2="729.5" y2="251" stroke="#00ffff" stroke-width="1"/>
<path d="M734.5 241.5v-1h2v1v1l-2 4h2M738.5 240.5h2v1v4v1h-2v-1v-4zM742.5 240.5h2v1v4v1h-2v-1v-4z" stroke="#00ff00" fill="none" stroke-linecap="square"/>
<path d="M732.5 298.5v6M734.5 300.5l-2 2M732.5 302.5l2 2M736.5 298.5h0h2h0v2l-2 4h2" stroke="#00ff00" fill="none" stroke-linecap="square"/>
<line x1="716" y1="291.5" x2="747" y2="291.5" stroke="#00ffff" stroke-width="1"/>
<path d="M734.5 285.5l1-1h2l1 1v1l-4 4h4M739.5 284.5h2l1 1v4l-1 1h-2l-1-1v-4zM743.5 284.5h2l1 1v4l-1 1h-2l-1-1v-4z" stroke="#00ff00" fill="none" stroke-linecap="square"/>
<line x1="694" y1="299" x2="722" y2="299" stroke="#00ffff" stroke-width="1"/>
<path d="M696.5 292.5h2h0v1v1h-2v-1v-1zM696.5 294.5v1v1h0h2h0v-1v-1M700.5 292.5h2h0v4h0h-2h0v-4z" stroke="#00ff00" fill="none" stroke-linecap="square"/>
<rect x="709.5" y="280.5" width="12" height="8" stroke="#ffffff" stroke-width="2" fill="none"/>
<circle cx="715.5" cy="276.5" r="3" stroke="#fff" fill="none"/>
<path d="M704.5 268.5v6M706.5 270.5l-2 2M704.5 272.5l2 2M708.5 268.5h0h2h0v2h0h-1M710.5 270.5v2h0v2h-2v-2" stroke="#00ff00" fill="none" stroke-linecap="square"/>
<path d="M810.5 193.5v-6l-4 4h4M812.5 187.5h4v1l-4 5" stroke="#00ff00" fill="none" stroke-linecap="square"/>
<line x1="804.5" y1="196.5" x2="820" y2="196.5" stroke="#00ffff" stroke-width="1"/>
<line x1="804.5" y1="196.5" x2="749" y2="262" stroke="#00ffff" stroke-width="1"/>
<path d="M752,261 Q760,270 759,284" stroke="#00ffff" stroke-width="1" fill="none"/>
<path d="M758.5 266.5h1h2h1v1l-1 1h-1M761.5 268.5l1 1v1h-1h-2h-1M766.5 266.5h-4v2h3l1 1v1h-1h-3" stroke="#00ff00" fill="none" stroke-linecap="square"/>
<circle cx="716" cy="333.4" r="21" stroke="#fff" stroke-width="1.3" fill="none" shape-rendering="geometricPrecision"/>
<circle cx="716" cy="333.4" r="16.5" stroke="#fff" fill="none" shape-rendering="geometricPrecision"/>
<circle cx="697.9" cy="324.2" r="2.5" stroke="#fff" fill="none"/>
<rect x="696.9" y="323.2" width="2" height="2" fill="#ff0000"/>
<circle cx="732.6" cy="324.2" r="2.5" stroke="#fff" fill="none"/>
<rect x="731.6" y="323.2" width="2" height="2" fill="#ff0000"/>
<circle cx="715.7" cy="339.4" r="3" stroke="#fff" fill="none"/>
<line x1="690" y1="334.5" x2="742" y2="334.5" stroke="#ff0000" stroke-width="1"/>
<rect x="716" y="305" width="10" height="2" fill="#ffffff"/>
<line x1="719.5" y1="307" x2="719.5" y2="320" stroke="#ffffff" stroke-width="1"/>
<line x1="723.5" y1="307" x2="723.5" y2="320" stroke="#ffffff" stroke-width="1"/>
<line x1="721.5" y1="305" x2="721.5" y2="320" stroke="#ff0000" stroke-width="1"/>
<path d="M711,311 Q726,311 737,321" stroke="#00ffff" stroke-width="1" fill="none"/>
<g transform="rotate(-90 733 312)"><path d="M730.5 309.5h1l1 1v1l-1 1h-1l-1-1v-1zM730.5 312.5h-1v1l1 1h1l1-1v-1h-1M736.5 309.5h-3v3h2h1v1l-1 1h-2" stroke="#00ff00" fill="none" stroke-linecap="square"/></g>
<path d="M706.5 332.5v6M708.5 334.5l-2 2M706.5 336.5l2 2M712.5 338.5v-6l-2 4h2" stroke="#00ff00" fill="none" stroke-linecap="square"/>
<line x1="710.5" y1="349" x2="710.5" y2="364" stroke="#ffffff" stroke-width="2"/>
<line x1="701.5" y1="356" x2="701.5" y2="364" stroke="#ffffff" stroke-width="1"/>
<line x1="729.5" y1="356" x2="729.5" y2="364" stroke="#ffffff" stroke-width="1"/>
<line x1="702" y1="363.5" x2="729" y2="363.5" stroke="#ffffff" stroke-width="1"/>
<line x1="699" y1="361.5" x2="731" y2="361.5" stroke="#ff0000" stroke-width="1"/>
<line x1="711.5" y1="348" x2="711.5" y2="365" stroke="#ff0000" stroke-width="1"/>
<path d="M698.5 359.5h-3l-1 1v2h1h3" stroke="#00ff00" fill="none" stroke-linecap="square"/>
<line x1="692" y1="346.5" x2="722" y2="346.5" stroke="#00ffff" stroke-width="1"/>
<path d="M694.5 339.5h2v1v1v1h-2v-1v-1zM694.5 342.5h0v1v1h2v-1v-1h0M698.5 339.5h2v1v3v1h-2v-1v-3z" stroke="#00ff00" fill="none" stroke-linecap="square"/>
<line x1="741.5" y1="346" x2="741.5" y2="368" stroke="#00ffff" stroke-width="1"/>
<g transform="rotate(-90 739 357)"><path d="M733.5 355.5l1-1v5M740.5 354.5h-3v2h2l1 1v1l-1 1h-2M741.5 354.5h2l1 1v3l-1 1h-2v-1v-3z" stroke="#00ff00" fill="none" stroke-linecap="square"/></g>
<line x1="711" y1="351.5" x2="743" y2="351.5" stroke="#00ffff" stroke-width="1"/>
<line x1="730" y1="361.5" x2="743" y2="361.5" stroke="#00ffff" stroke-width="1"/>
<line x1="656.5" y1="333" x2="656.5" y2="367" stroke="#ffffff" stroke-width="2.5"/>
<line x1="773.5" y1="333" x2="773.5" y2="367" stroke="#ffffff" stroke-width="2.5"/>
<path d="M649,296 L654,366 M651,298 L656,366 M782,296 L776,366 M780,298 L774,366" stroke="#ffffff" stroke-width="1" fill="none"/>
<line x1="657.5" y1="338.5" x2="680" y2="338.5" stroke="#ffffff" stroke-width="1.5"/>
<line x1="657.5" y1="343" x2="682" y2="343" stroke="#ffffff" stroke-width="1.5"/>
<line x1="659" y1="339.5" x2="680" y2="339.5" stroke="#ff0000" stroke-width="1"/>
<line x1="750" y1="338.5" x2="773" y2="338.5" stroke="#ffffff" stroke-width="1.5"/>
<line x1="748" y1="340" x2="772" y2="340" stroke="#ff0000" stroke-width="1"/>
<line x1="655" y1="366.5" x2="776" y2="366.5" stroke="#ffffff" stroke-width="2"/>
<rect x="641.5" y="344.5" width="13" height="8.5" stroke="#ffffff" stroke-width="1" fill="none"/>
<line x1="641" y1="348.5" x2="650" y2="348.5" stroke="#ff0000" stroke-width="1"/>
<line x1="645.5" y1="345" x2="645.5" y2="352" stroke="#ff0000" stroke-width="1"/>
<rect x="777.5" y="344.5" width="12" height="8.5" stroke="#ffffff" stroke-width="1" fill="none"/>
<line x1="781" y1="348.5" x2="790" y2="348.5" stroke="#ff0000" stroke-width="1"/>
<line x1="785.5" y1="345" x2="785.5" y2="352" stroke="#ff0000" stroke-width="1"/>
<line x1="628.5" y1="284.5" x2="628.5" y2="339.5" stroke="#00ffff" stroke-width="1"/>
<line x1="624.5" y1="339.5" x2="655" y2="339.5" stroke="#00ffff" stroke-width="1"/>
<line x1="628.5" y1="348.5" x2="628.5" y2="367" stroke="#00ffff" stroke-width="1"/>
<line x1="624.5" y1="348.5" x2="641" y2="348.5" stroke="#00ffff" stroke-width="1"/>
<line x1="624.5" y1="366.5" x2="655" y2="366.5" stroke="#00ffff" stroke-width="1"/>
<g transform="rotate(-90 624 311)"><path d="M619.5 308.5h1l1 1v1h-1h-1h-1v-1zM619.5 310.5l-1 1v1l1 1h1l1-1v-1l-1-1M623.5 308.5h1l1 1v3l-1 1h-1l-1-1v-3zM627.5 308.5h1l1 1v3l-1 1h-1l-1-1v-3z" stroke="#00ff00" fill="none" stroke-linecap="square"/></g>
<g transform="rotate(-90 624 358)"><path d="M618.5 356.5l1-1h1l1 1v1l-3 3h3M622.5 355.5h3v1l-2 4M627.5 355.5h1l1 1v3l-1 1h-1l-1-1v-3z" stroke="#00ff00" fill="none" stroke-linecap="square"/></g>
<line x1="797.5" y1="284.5" x2="797.5" y2="339.5" stroke="#00ffff" stroke-width="1"/>
<line x1="775" y1="339.5" x2="800" y2="339.5" stroke="#00ffff" stroke-width="1"/>
<line x1="810.5" y1="284.5" x2="810.5" y2="367" stroke="#00ffff" stroke-width="1"/>
<line x1="775" y1="366.5" x2="813" y2="366.5" stroke="#00ffff" stroke-width="1"/>
<g transform="rotate(-90 793 311)"><path d="M788.5 308.5h1l1 1v1h-1h-1h-1v-1zM788.5 310.5l-1 1v1l1 1h1l1-1v-1l-1-1M794.5 308.5h-3v2h2l1 1v1l-1 1h-2M796.5 308.5h1l1 1v3l-1 1h-1l-1-1v-3z" stroke="#00ff00" fill="none" stroke-linecap="square"/></g>
<g transform="rotate(-90 806 326)"><path d="M798.5 324.5l2-1v5M802.5 324.5v-1h2l1 1v1l-3 3h3M806.5 323.5h2l1 1v3l-1 1h-2v-1v-3zM810.5 323.5h2l1 1v3l-1 1h-2v-1v-3z" stroke="#00ff00" fill="none" stroke-linecap="square"/></g>
<line x1="701.5" y1="375.5" x2="730" y2="375.5" stroke="#00ffff" stroke-width="1"/>
<line x1="701.5" y1="364" x2="701.5" y2="379" stroke="#00ffff" stroke-width="1"/>
<line x1="715.5" y1="364" x2="715.5" y2="379" stroke="#00ffff" stroke-width="1"/>
<line x1="729.5" y1="364" x2="729.5" y2="379" stroke="#00ffff" stroke-width="1"/>
<path d="M702.5 369.5l1-1h2l1 1v1l-4 4h4M707.5 368.5h2l1 1v4l-1 1h-2l-1-1v-4zM711.5 368.5h2l1 1v4l-1 1h-2l-1-1v-4z" stroke="#00ff00" fill="none" stroke-linecap="square"/>
<path d="M716.5 369.5l1-1h2l1 1v1l-4 4h4M721.5 368.5h2l1 1v4l-1 1h-2l-1-1v-4zM725.5 368.5h2l1 1v4l-1 1h-2l-1-1v-4z" stroke="#00ff00" fill="none" stroke-linecap="square"/>
<line x1="657.5" y1="390.5" x2="772" y2="390.5" stroke="#00ffff" stroke-width="1"/>
<line x1="657.5" y1="333" x2="657.5" y2="394" stroke="#00ffff" stroke-width="1"/>
<line x1="772.5" y1="333" x2="772.5" y2="394" stroke="#00ffff" stroke-width="1"/>
<line x1="715.5" y1="366" x2="715.5" y2="393" stroke="#00ffff" stroke-width="1"/>
<path d="M681.5 382.5h2l1 2h0l-1 2h-2l-1-2h0zM681.5 386.5h-1v2h1h2h1v-2h-1M687.5 388.5v-6l-3 4h4M689.5 382.5h2l1 2v4h-1h-2h-1v-4z" stroke="#00ff00" fill="none" stroke-linecap="square"/>
<path d="M744.5 382.5h2v2h0v2h-2v-2h0zM744.5 386.5h0v2h0h2h0v-2h0M748.5 384.5v-2h2v2h0l-2 4h2M754.5 382.5h-2v4h2h0v2h0h-2" stroke="#00ff00" fill="none" stroke-linecap="square"/>
<line x1="655.5" y1="411.5" x2="775.5" y2="411.5" stroke="#00ffff" stroke-width="1"/>
<line x1="655.5" y1="367" x2="655.5" y2="415" stroke="#00ffff" stroke-width="1"/>
<line x1="775.5" y1="367" x2="775.5" y2="415" stroke="#00ffff" stroke-width="1"/>
<path d="M708.5 404.5h1v6M711.5 404.5h3h0l-2 6M715.5 404.5h1h1h1v2h-1h-1M717.5 406.5l1 2h0l-1 2h-1l-1-2M720.5 404.5h1h1v4l-1 2h-1l-1-2v-4z" stroke="#00ff00" fill="none" stroke-linecap="square"/>
<path d="M610.5 442.5v-6l-3 4h4M612.5 438.5l1-2h2l1 2h0l-4 4h4" stroke="#00ff00" fill="none" stroke-linecap="square"/>
<line x1="603" y1="446.5" x2="620" y2="446.5" stroke="#00ffff" stroke-width="1"/>
<line x1="620" y1="446.5" x2="647.8" y2="352" stroke="#00ffff" stroke-width="1"/>
<path d="M689.5 442.5v-6l-3 4h4M694.5 436.5h-2l-1 2v4h1h2h1v-2h-1h-3" stroke="#00ff00" fill="none" stroke-linecap="square"/>
<line x1="683" y1="446.5" x2="700" y2="446.5" stroke="#00ffff" stroke-width="1"/>
<line x1="683" y1="446.5" x2="668" y2="343" stroke="#00ffff" stroke-width="1"/>
<path d="M773.5 442.5v-6l-3 4h4M778.5 442.5v-6l-3 4h4" stroke="#00ff00" fill="none" stroke-linecap="square"/>
<line x1="766" y1="446.5" x2="783" y2="446.5" stroke="#00ffff" stroke-width="1"/>
<line x1="766" y1="446.5" x2="756" y2="340" stroke="#00ffff" stroke-width="1"/>
<path d="M800.5 442.5v-6l-3 4h4M802.5 438.5l1-2h2l1 2h0l-1 2h-1M805.5 440.5h1v2h-1h-2h-1" stroke="#00ff00" fill="none" stroke-linecap="square"/>
<line x1="793" y1="446.5" x2="810" y2="446.5" stroke="#00ffff" stroke-width="1"/>
<line x1="793" y1="446.5" x2="767" y2="341" stroke="#00ffff" stroke-width="1"/>
<path d="M830.5 442.5v-6l-3 4h4M836.5 436.5h-4v4h3h1v2h-1h-3" stroke="#00ff00" fill="none" stroke-linecap="square"/>
<line x1="823" y1="446.5" x2="840" y2="446.5" stroke="#00ffff" stroke-width="1"/>
<line x1="823" y1="446.5" x2="777" y2="350" stroke="#00ffff" stroke-width="1"/>
<path d="M119.5 497.5h2M118.5 498.5h3M118.5 495.5v2M120.5 495.5v3M122.5 496.5h3M123.5 498.5h1M122.5 494.5v4M124.5 494.5v4M125.5 494.5v3M126.5 494.5h3M127.5 495.5h2M127.5 496.5h1M126.5 498.5h3M127.5 495.5v2M129.5 495.5v2M131.5 494.5h1M131.5 495.5h2M131.5 496.5h2M130.5 495.5v2M132.5 495.5v2M133.5 495.5v2M135.5 495.5h2M136.5 498.5h1M135.5 494.5v4M136.5 494.5v3M139.5 495.5h3M140.5 496.5h1M139.5 497.5h3M139.5 494.5v3M143.5 494.5h2M143.5 496.5h2M144.5 497.5h2M143.5 494.5v4M148.5 494.5h3M148.5 495.5h3M148.5 497.5h3M148.5 495.5v3M150.5 495.5v2M153.5 494.5h2M153.5 495.5h2M152.5 497.5h2M152.5 498.5h3M152.5 495.5v3M153.5 494.5v3M155.5 495.5v3" stroke="#ffffff" fill="none" stroke-linecap="square"/>
<line x1="113" y1="502.5" x2="162" y2="502.5" stroke="#ffffff" stroke-width="1"/>
<path d="M124.5 504.5h3M125.5 507.5h2M130.5 504.5h2M131.5 505.5h1M130.5 506.5h3M131.5 507.5h1M131.5 509.5h1M131.5 504.5v4M133.5 504.5v4M138.5 504.5h2M138.5 505.5h2M138.5 509.5h3M138.5 504.5v5M139.5 505.5v4M145.5 507.5h2M144.5 508.5h3M144.5 509.5h2M146.5 504.5v5" stroke="#ffffff" fill="none" stroke-linecap="square"/>
<rect x="108" y="550" width="61" height="15" fill="url(#h1)"/>
<line x1="108" y1="550.5" x2="169" y2="550.5" stroke="#ffffff" stroke-width="1"/>
<line x1="108" y1="565.5" x2="169" y2="565.5" stroke="#ffffff" stroke-width="1"/>
<line x1="169" y1="550.5" x2="183" y2="550.5" stroke="#00ffff" stroke-width="1"/>
<line x1="169" y1="565.5" x2="183" y2="565.5" stroke="#00ffff" stroke-width="1"/>
<path d="M128,548 Q126,553 125,557 Q125,566 131,568 Q133,572 136,571 Q140,566 146,566 Q150,560 150,555 Q149,548 141,548 Z" stroke="#ffffff" stroke-width="1" fill="#ffffff"/>
<path d="M123.5,541 L127.5,549 M150.5,541 L146.5,549 M127,542 Q137,538 147,542" stroke="#00ffff" stroke-width="1" fill="none"/>
<path d="M135.5 532.5h-2l-1 2v4h1h2h1v-2h-1h-3M137.5 532.5h2l1 2v4h-1h-2h-1v-4zM141.5 532.5h1v2h-1z" stroke="#00ff00" fill="none" stroke-linecap="square"/>
<line x1="179.5" y1="550.5" x2="179.5" y2="565.5" stroke="#00ffff" stroke-width="1"/>
<g transform="rotate(-90 176 558)"><path d="M172.5 556.5l2-1v5M176.5 556.5v-1h2l1 1v1l-3 3h3" stroke="#00ff00" fill="none" stroke-linecap="square"/></g>
<line x1="135.5" y1="565" x2="135.5" y2="574" stroke="#00ffff" stroke-width="1"/>
<line x1="138.5" y1="565" x2="138.5" y2="574" stroke="#00ffff" stroke-width="1"/>
<line x1="131" y1="573.5" x2="142" y2="573.5" stroke="#00ffff" stroke-width="1"/>
<line x1="146.5" y1="560" x2="146.5" y2="571" stroke="#00ffff" stroke-width="1"/>
<line x1="138" y1="563.5" x2="147" y2="563.5" stroke="#00ffff" stroke-width="1"/>
<path d="M129.5 570.5h2M129.5 571.5h2M128.5 572.5h4M129.5 573.5h3M128.5 570.5v2M130.5 570.5v2M131.5 570.5v3" stroke="#00ff00" fill="none" stroke-linecap="square"/>
<path d="M143.5 566.5h1M143.5 567.5h1M142.5 568.5h2M143.5 569.5h1M144.5 566.5v4" stroke="#00ff00" fill="none" stroke-linecap="square"/>
<path d="M239.5 494.5h1M239.5 495.5h2M239.5 496.5h1M239.5 495.5v3M240.5 495.5v3M241.5 495.5v2M242.5 495.5h2M243.5 497.5h1M242.5 498.5h2M247.5 495.5h1M247.5 497.5h2M246.5 498.5h2M247.5 494.5v4M249.5 494.5v3M250.5 494.5h3M251.5 495.5h2M250.5 496.5h3M251.5 497.5h1M250.5 494.5v4M251.5 495.5v3M252.5 495.5v3M253.5 495.5v2M256.5 494.5h2M256.5 495.5h2M255.5 496.5h3M256.5 497.5h2M255.5 495.5v3M257.5 494.5v3M258.5 495.5v2M260.5 494.5h2M260.5 496.5h2M263.5 495.5h2M263.5 497.5h2M265.5 495.5v2M266.5 495.5v3M269.5 494.5h2M269.5 495.5h2M269.5 498.5h1M268.5 495.5v2M270.5 494.5v3M271.5 495.5v3" stroke="#ffffff" fill="none" stroke-linecap="square"/>
<line x1="233" y1="502.5" x2="276" y2="502.5" stroke="#ffffff" stroke-width="1"/>
<path d="M240.5 504.5h3M240.5 507.5h3M241.5 509.5h1M240.5 504.5v5M246.5 505.5h2M246.5 507.5h3M247.5 508.5h2M246.5 509.5h3M246.5 505.5v3M254.5 504.5h2M254.5 508.5h2M255.5 509.5h1M254.5 506.5v2M257.5 505.5v3M260.5 508.5h3" stroke="#ffffff" fill="none" stroke-linecap="square"/>
<rect x="233" y="535" width="6" height="33" fill="url(#h1)"/>
<polygon points="252,553.5 275.5,553.5 275.5,568 241,568" fill="url(#h1)"/>
<rect x="233.5" y="535.5" width="5" height="33" stroke="#ffffff" stroke-width="1" fill="none"/>
<line x1="239" y1="535.5" x2="275.5" y2="535.5" stroke="#ffffff" stroke-width="1" stroke-dasharray="4,3"/>
<line x1="275.5" y1="535.5" x2="275.5" y2="540" stroke="#ffffff" stroke-width="1"/>
<line x1="275.5" y1="543.5" x2="275.5" y2="568.5" stroke="#ffffff" stroke-width="1"/>
<path d="M239,543.5 L252,553.5 L242,568.5 L239,568.5 Z" stroke="#ffffff" stroke-width="1" fill="#ffffff"/>
<line x1="239" y1="543.5" x2="287" y2="543.5" stroke="#00ffff" stroke-width="1"/>
<line x1="252" y1="553.5" x2="288" y2="553.5" stroke="#00ffff" stroke-width="1"/>
<line x1="239" y1="568.5" x2="288" y2="568.5" stroke="#00ffff" stroke-width="1"/>
<line x1="284.5" y1="536" x2="284.5" y2="568.5" stroke="#00ffff" stroke-width="1"/>
<g transform="rotate(-90 281 548)"><path d="M281.5 545.5h-1l-1 1v3l1 1h1l1-1v-1h-1h-2" stroke="#00ff00" fill="none" stroke-linecap="square"/></g>
<g transform="rotate(-90 281 561)"><path d="M277.5 559.5l1-1v5M281.5 559.5v-1h2l1 1v1l-3 3h3" stroke="#00ff00" fill="none" stroke-linecap="square"/></g>
<line x1="238.5" y1="568" x2="238.5" y2="577" stroke="#00ffff" stroke-width="1"/>
<line x1="241.5" y1="568" x2="241.5" y2="577" stroke="#00ffff" stroke-width="1"/>
<line x1="234" y1="576.5" x2="244" y2="576.5" stroke="#00ffff" stroke-width="1"/>
<line x1="249.5" y1="565" x2="249.5" y2="574" stroke="#00ffff" stroke-width="1"/>
<line x1="244" y1="566.5" x2="251" y2="566.5" stroke="#00ffff" stroke-width="1"/>
<path d="M233.5 570.5h1M232.5 572.5h2M233.5 573.5h1M233.5 571.5v2M234.5 570.5v4" stroke="#00ff00" fill="none" stroke-linecap="square"/>
<path d="M245.5 569.5h1M245.5 570.5h1M244.5 571.5h2M245.5 572.5h1M245.5 568.5v3M246.5 569.5v3" stroke="#00ff00" fill="none" stroke-linecap="square"/>
<path d="M364.5 495.5h3M364.5 498.5h3M364.5 499.5h2M365.5 495.5v4M367.5 495.5v4" stroke="#ffffff" fill="none" stroke-linecap="square"/>
<line x1="346" y1="502.5" x2="389" y2="502.5" stroke="#ffffff" stroke-width="1"/>
<path d="M352.5 504.5h2M352.5 505.5h2M352.5 506.5h3M353.5 508.5h2M353.5 509.5h1M360.5 504.5h3M360.5 507.5h3M360.5 508.5h3M360.5 505.5v4M361.5 504.5v4M366.5 504.5h2M367.5 505.5h1M366.5 507.5h2M367.5 509.5h1M367.5 504.5v4M375.5 505.5h1M374.5 506.5h3M375.5 507.5h1M374.5 508.5h2M376.5 505.5v4" stroke="#ffffff" fill="none" stroke-linecap="square"/>
<rect x="338" y="530" width="43" height="66" fill="url(#h1)"/>
<rect x="378" y="560" width="23" height="11" fill="url(#h1)"/>
<line x1="338.5" y1="530.5" x2="380.5" y2="530.5" stroke="#ffffff" stroke-width="1" stroke-dasharray="5,3"/>
<line x1="338.5" y1="530.5" x2="338.5" y2="596.5" stroke="#ffffff" stroke-width="1" stroke-dasharray="8,2"/>
<line x1="338.5" y1="596.5" x2="380.5" y2="596.5" stroke="#ffffff" stroke-width="1" stroke-dasharray="5,3"/>
<line x1="380.5" y1="530.5" x2="380.5" y2="596.5" stroke="#ffffff" stroke-width="1"/>
<line x1="380.5" y1="530.5" x2="401.5" y2="530.5" stroke="#ffffff" stroke-width="1" stroke-dasharray="5,3"/>
<line x1="401.5" y1="530.5" x2="401.5" y2="596.5" stroke="#ffffff" stroke-width="1" stroke-dasharray="8,3"/>
<line x1="380.5" y1="596.5" x2="401.5" y2="596.5" stroke="#ffffff" stroke-width="1" stroke-dasharray="5,3"/>
<rect x="374" y="559" width="4" height="13" fill="#ffffff"/>
<line x1="378" y1="560.5" x2="401" y2="560.5" stroke="#ffffff" stroke-width="1"/>
<line x1="378" y1="570.5" x2="401" y2="570.5" stroke="#ffffff" stroke-width="1"/>
<line x1="330" y1="559.5" x2="419" y2="559.5" stroke="#00ffff" stroke-width="1"/>
<line x1="330" y1="571.5" x2="419" y2="571.5" stroke="#00ffff" stroke-width="1"/>
<line x1="415.5" y1="553" x2="415.5" y2="578" stroke="#00ffff" stroke-width="1"/>
<g transform="rotate(-90 412 565)"><path d="M408.5 563.5l2-1v5M412.5 562.5h2l1 1v3l-1 1h-2v-1v-3z" stroke="#00ff00" fill="none" stroke-linecap="square"/></g>
<line x1="328.5" y1="559" x2="328.5" y2="572" stroke="#00ffff" stroke-width="1"/>
<g transform="rotate(-90 325 565)"><path d="M321.5 563.5l1-1v5M325.5 563.5v-1h2l1 1v1l-3 3h3" stroke="#00ff00" fill="none" stroke-linecap="square"/></g>
<line x1="367" y1="552.5" x2="395" y2="552.5" stroke="#00ffff" stroke-width="1"/>
<line x1="374.5" y1="549" x2="374.5" y2="590" stroke="#00ffff" stroke-width="1"/>
<line x1="377.5" y1="571" x2="377.5" y2="590" stroke="#00ffff" stroke-width="1"/>
<path d="M392.5 544.5h-2l-2 2v4h2h2h0v-2h0h-4" stroke="#00ff00" fill="none" stroke-linecap="square"/>
<line x1="368" y1="587.5" x2="392" y2="587.5" stroke="#00ffff" stroke-width="1"/>
<path d="M386.5 580.5h0h2h2v2h-2h0M388.5 582.5l2 2h0l-2 2h-2v-2" stroke="#00ff00" fill="none" stroke-linecap="square"/>
<path d="M467.5 494.5h1M467.5 495.5h2M466.5 496.5h3M466.5 498.5h3M467.5 494.5v3" stroke="#ffffff" fill="none" stroke-linecap="square"/>
<line x1="460" y1="502.5" x2="516" y2="502.5" stroke="#ffffff" stroke-width="1"/>
<path d="M469.5 504.5h1M468.5 505.5h2M468.5 506.5h3M468.5 507.5h2M468.5 509.5h2M469.5 506.5v3M477.5 507.5h1M476.5 508.5h2M477.5 509.5h2M476.5 504.5v5M483.5 504.5h2M482.5 505.5h3M490.5 504.5h2M490.5 506.5h2M491.5 508.5h2M491.5 506.5v3" stroke="#ffffff" fill="none" stroke-linecap="square"/>
<rect x="484" y="545" width="24" height="18" fill="url(#h2)"/>
<rect x="484" y="582" width="24" height="19" fill="url(#h2)"/>
<rect x="459.5" y="545.5" width="24.5" height="55.5" stroke="#ffffff" stroke-width="1" fill="none" stroke-dasharray="5,3"/>
<line x1="484.5" y1="545.5" x2="484.5" y2="564" stroke="#ffffff" stroke-width="1"/>
<line x1="484.5" y1="582" x2="484.5" y2="601" stroke="#ffffff" stroke-width="1"/>
<line x1="507.5" y1="545" x2="507.5" y2="564" stroke="#ffffff" stroke-width="1"/>
<line x1="507.5" y1="582" x2="507.5" y2="601" stroke="#ffffff" stroke-width="1"/>
<line x1="484" y1="545.5" x2="507.5" y2="545.5" stroke="#ffffff" stroke-width="1" stroke-dasharray="5,3"/>
<line x1="484" y1="601.5" x2="507.5" y2="601.5" stroke="#ffffff" stroke-width="1"/>
<line x1="459.5" y1="564.5" x2="508" y2="564.5" stroke="#ffffff" stroke-width="1"/>
<line x1="459.5" y1="566.5" x2="508" y2="566.5" stroke="#ffffff" stroke-width="1"/>
<line x1="459.5" y1="580.5" x2="508" y2="580.5" stroke="#ffffff" stroke-width="1"/>
<line x1="459.5" y1="582.5" x2="508" y2="582.5" stroke="#ffffff" stroke-width="1"/>
<line x1="460" y1="565.5" x2="508" y2="565.5" stroke="#ffff00" stroke-width="1" stroke-dasharray="3,4"/>
<line x1="460" y1="581.5" x2="508" y2="581.5" stroke="#ffff00" stroke-width="1" stroke-dasharray="3,4"/>
<line x1="508.5" y1="564" x2="508.5" y2="583" stroke="#ffffff" stroke-width="1"/>
<line x1="484.5" y1="528" x2="484.5" y2="563" stroke="#00ffff" stroke-width="1"/>
<line x1="497.5" y1="528" x2="497.5" y2="563" stroke="#00ffff" stroke-width="1"/>
<line x1="507.5" y1="528" x2="507.5" y2="563" stroke="#00ffff" stroke-width="1"/>
<line x1="469" y1="531.5" x2="515" y2="531.5" stroke="#00ffff" stroke-width="1"/>
<path d="M470.5 524.5h2h2h0v1v1h-2M474.5 526.5v1v1h0h-2h-2" stroke="#00ff00" fill="none" stroke-linecap="square"/>
<path d="M488.5 524.5h4v4h-4zM495.5 524.5h-2h-1v4h1h2h1v-1l-1-1h-3" stroke="#00ff00" fill="none" stroke-linecap="square"/>
<path d="M498.5 524.5h0v4M500.5 528.5h0M505.5 524.5h-3v2h2l1 1v1h-1h-2" stroke="#00ff00" fill="none" stroke-linecap="square"/>
<path d="M502.5 536.5v-4l-2 3h2M504.5 532.5h2v1v1h0h-2h0v-1zM504.5 534.5v1v1h0h2h0v-1v-1" stroke="#00ff00" fill="none" stroke-linecap="square"/>
<path d="M522.5 542.5l1-2h2l1 2h0l-4 4h4M527.5 540.5h2l1 2v4h-1h-2h-1v-4zM530.5 540.5l4 6M534.5 540.5l-4 6M537.5 546.5v-6l-3 4h4M542.5 540.5h-4v4h3h1v2h-1h-3" stroke="#00ff00" fill="none" stroke-linecap="square"/>
<line x1="519.5" y1="548.5" x2="544" y2="548.5" stroke="#00ffff" stroke-width="1"/>
<line x1="519.5" y1="548.5" x2="508.5" y2="562" stroke="#00ffff" stroke-width="1"/>
<line x1="508" y1="564.5" x2="538" y2="564.5" stroke="#00ffff" stroke-width="1"/>
<line x1="508" y1="581.5" x2="538" y2="581.5" stroke="#00ffff" stroke-width="1"/>
<line x1="535.5" y1="564.5" x2="535.5" y2="613" stroke="#00ffff" stroke-width="1"/>
<g transform="rotate(-90 531 593)"><path d="M521.5 591.5h1l1 1v1l-1 1h-1l-1-1v-1zM521.5 590.5v5M523.5 591.5l1-1h1l1 1v1l-3 3h3M529.5 590.5h-2v2h2v1v1v1h-2M530.5 590.5l3 5M533.5 590.5l-3 5M533.5 591.5l1-1h1l1 1v1l-3 3h3M537.5 595.5h0M541.5 590.5h-3v2h2l1 1v1l-1 1h-2" stroke="#00ff00" fill="none" stroke-linecap="square"/></g>
<line x1="507.5" y1="583" x2="507.5" y2="615" stroke="#00ffff" stroke-width="1"/>
<line x1="500" y1="611.5" x2="527.5" y2="611.5" stroke="#00ffff" stroke-width="1"/>
<path d="M516.5 604.5h2v6M520.5 610.5h0M525.5 604.5h-3v2h2l1 2h0l-1 2h-2" stroke="#00ff00" fill="none" stroke-linecap="square"/>
<path d="M461.5 622.5h3M460.5 623.5h4M460.5 624.5h3M461.5 625.5h2M460.5 626.5h4M460.5 627.5h3M461.5 628.5h3M461.5 623.5v4M462.5 624.5v4M467.5 623.5h2M467.5 624.5h3M466.5 625.5h4M467.5 626.5h3M466.5 623.5v4M467.5 623.5v3M469.5 624.5v4M470.5 624.5v2M470.5 622.5h3M471.5 623.5h3M470.5 624.5h4M470.5 628.5h4M471.5 623.5v4M472.5 622.5v4M473.5 622.5v4M477.5 622.5h2M477.5 624.5h3M476.5 625.5h4M477.5 627.5h2M476.5 628.5h3M478.5 624.5v2M479.5 624.5v4" stroke="#ffffff" fill="none" stroke-linecap="square"/>
<path d="M452.5 635.5l1-1v6M456.5 640.5h0" stroke="#ffffff" fill="none" stroke-linecap="square"/>
<path d="M458.5 634.5h3M459.5 636.5h1M459.5 638.5h1M459.5 639.5h1M459.5 635.5v4M463.5 634.5h3M464.5 637.5h1M464.5 638.5h1M464.5 639.5h1M466.5 634.5v4M469.5 634.5h2M468.5 635.5h3M468.5 636.5h3M469.5 638.5h1M468.5 635.5v3M470.5 635.5v4M471.5 636.5v2M473.5 634.5h2M473.5 635.5h2M474.5 636.5h2M474.5 637.5h2M474.5 638.5h2M473.5 639.5h3M473.5 635.5v4M474.5 636.5v3M476.5 636.5v2M478.5 634.5h1M477.5 635.5h3M477.5 636.5h2M478.5 637.5h2M478.5 638.5h1M477.5 636.5v3M478.5 636.5v3M479.5 635.5v3" stroke="#ffffff" fill="none" stroke-linecap="square"/>
<path d="M485.5 635.5v-1h-2l-1 1v4l1 1h2v-1v-2h-1M487.5 637.5h2l1 1v1l-1 1h-2v-6h2l1 1v1l-1 1M491.5 635.5l2-1v6M499.5 634.5h-4v3h3l1 1v1l-1 1h-3M501.5 634.5h2l1 1v4l-1 1h-2l-1-1v-4zM505.5 637.5h4M510.5 635.5l1-1v6M517.5 637.5h-2l-1-1v-1l1-1h1l1 1v4l-1 1h-1M522.5 637.5h-3l-1-1v-1l1-1h2l1 1v4l-1 1h-2M524.5 634.5h2l1 1v1l-1 1h-2l-1-1v-1zM524.5 637.5l-1 1v1l1 1h2l1-1v-1l-1-1" stroke="#ffffff" fill="none" stroke-linecap="square"/>
<path d="M528.5 634.5h2M528.5 635.5h3M529.5 636.5h1M529.5 637.5h1M528.5 638.5h3M529.5 639.5h2M529.5 635.5v3M530.5 636.5v2M533.5 634.5h3M534.5 635.5h2M534.5 636.5h2M534.5 638.5h2M533.5 635.5v4M537.5 634.5h2M537.5 635.5h2M538.5 636.5h2M538.5 638.5h1M538.5 639.5h2M537.5 634.5v5M538.5 634.5v4M540.5 635.5v3M542.5 634.5h3M542.5 636.5h2M543.5 637.5h1M543.5 638.5h2M542.5 635.5v3M543.5 634.5v4M547.5 634.5h2M548.5 636.5h2M547.5 638.5h3M548.5 639.5h1M547.5 635.5v3M549.5 636.5v2M552.5 634.5h2M553.5 635.5h2M553.5 637.5h2M553.5 638.5h1M553.5 639.5h2M552.5 636.5v2M554.5 636.5v3M555.5 635.5v4" stroke="#ffffff" fill="none" stroke-linecap="square"/>
<path d="M556.5 640.5h0M567.5 635.5l-1-1h-2l-1 1v4l1 1h2l1-1v-2h-2M568.5 637.5h3l1 1v1l-1 1h-3v-6h3l1 1v1l-1 1M573.5 637.5h4M578.5 635.5l1-1v6M585.5 637.5h-2l-1-1v-1l1-1h1l1 1v4l-1 1h-1M590.5 637.5h-3v-1v-1v-1h2l1 1v4l-1 1h-2M595.5 637.5h-3l-1-1v-1l1-1h2l1 1v4l-1 1h-2" stroke="#ffffff" fill="none" stroke-linecap="square"/>
<path d="M597.5 635.5h1M597.5 636.5h1M597.5 637.5h1M596.5 638.5h2M597.5 639.5h2M596.5 635.5v3M597.5 634.5v4M601.5 634.5h2M602.5 635.5h2M602.5 636.5h1M602.5 637.5h2M602.5 639.5h1M601.5 635.5v4M606.5 634.5h3M607.5 635.5h1M606.5 636.5h3M606.5 638.5h2M606.5 639.5h2M608.5 634.5v4M609.5 635.5v4M611.5 635.5h2M611.5 636.5h1M610.5 637.5h2M610.5 639.5h3M611.5 636.5v2M612.5 636.5v3M613.5 634.5v4M616.5 634.5h1M616.5 635.5h1M616.5 638.5h2M617.5 636.5v3M618.5 636.5v3M620.5 634.5h3M621.5 635.5h2M621.5 636.5h1M621.5 637.5h1M621.5 638.5h2M621.5 636.5v3" stroke="#ffffff" fill="none" stroke-linecap="square"/>
<path d="M625.5 634.5h2M624.5 637.5h3M624.5 638.5h2M624.5 639.5h2M624.5 636.5v3M626.5 635.5v3M630.5 634.5h2M629.5 635.5h3M629.5 636.5h2M630.5 638.5h2M630.5 636.5v2M631.5 636.5v2M635.5 634.5h2M634.5 635.5h2M634.5 637.5h2M635.5 638.5h1M635.5 639.5h2M634.5 636.5v2M636.5 635.5v3M638.5 634.5h3M639.5 635.5h2M638.5 636.5h2M638.5 638.5h3M638.5 635.5v3M639.5 635.5v4M641.5 634.5v5M644.5 634.5h1M644.5 635.5h2M644.5 638.5h2M644.5 639.5h2M643.5 634.5v4M644.5 634.5v4M649.5 634.5h1M649.5 636.5h1M649.5 637.5h2M649.5 638.5h2M648.5 639.5h2M649.5 634.5v4M653.5 634.5h1M653.5 636.5h2M652.5 637.5h3M652.5 638.5h3M653.5 639.5h2M652.5 635.5v3M654.5 635.5v4M655.5 636.5v2M658.5 634.5h2M658.5 636.5h1M657.5 637.5h2M657.5 638.5h3M658.5 639.5h1M657.5 634.5v5M658.5 634.5v5M659.5 635.5v4M662.5 635.5h2M662.5 637.5h2M662.5 638.5h3M663.5 634.5v5M665.5 634.5v5M666.5 634.5h2M666.5 635.5h2M667.5 636.5h2M667.5 637.5h2M666.5 639.5h2M666.5 635.5v3M667.5 635.5v4M668.5 634.5v4" stroke="#ffffff" fill="none" stroke-linecap="square"/>
<path d="M459.5 647.5h1M458.5 648.5h3M459.5 649.5h2M458.5 650.5h3M458.5 651.5h3M464.5 647.5h2M464.5 648.5h2M464.5 649.5h1M464.5 650.5h2M463.5 651.5h2M463.5 652.5h2M464.5 647.5v5M466.5 647.5v4M468.5 648.5h2M468.5 649.5h2M468.5 650.5h2M467.5 651.5h2M468.5 652.5h1M469.5 649.5v3M470.5 648.5v4M471.5 647.5h3M471.5 648.5h3M471.5 649.5h3M472.5 652.5h2M471.5 649.5v3M472.5 648.5v4M473.5 647.5v5M475.5 647.5h2M476.5 651.5h1M475.5 649.5v3M476.5 648.5v4M477.5 648.5v4M478.5 647.5v5M480.5 649.5h2M479.5 650.5h3M480.5 652.5h2M480.5 647.5v5M482.5 648.5v3M483.5 648.5h2M483.5 651.5h2M483.5 652.5h3M485.5 649.5v2M486.5 648.5v3M488.5 648.5h2M488.5 649.5h1M487.5 651.5h3M488.5 652.5h2M487.5 647.5v4M492.5 648.5h1M492.5 649.5h2M492.5 650.5h2M491.5 652.5h2M491.5 648.5v3M492.5 648.5v4M496.5 648.5h1M496.5 651.5h1M495.5 649.5v3M497.5 648.5v3M498.5 647.5v5M499.5 647.5h2M499.5 648.5h3M499.5 649.5h2M500.5 651.5h1M499.5 649.5v3M501.5 647.5v5M502.5 647.5v4M503.5 647.5h2M504.5 648.5h1M504.5 649.5h1M503.5 650.5h3M503.5 651.5h2M503.5 652.5h2M504.5 647.5v5M505.5 648.5v3M506.5 648.5v3M507.5 647.5h3M507.5 649.5h3M508.5 650.5h2M508.5 651.5h2M508.5 648.5v3M509.5 647.5v5M512.5 647.5h1M512.5 648.5h2M511.5 649.5h3M511.5 650.5h3M512.5 651.5h1M511.5 652.5h3M511.5 648.5v4M512.5 649.5v3M514.5 649.5v2M516.5 648.5h1M516.5 649.5h2M516.5 650.5h1M516.5 652.5h1M516.5 649.5v2M518.5 649.5v2M521.5 648.5h1M520.5 649.5h3M521.5 650.5h1M521.5 651.5h2M520.5 652.5h2M520.5 649.5v2M525.5 647.5h2M524.5 650.5h3M525.5 651.5h1M525.5 652.5h1M525.5 649.5v2M529.5 647.5h1M528.5 649.5h2M529.5 650.5h1M529.5 651.5h2M529.5 652.5h2M529.5 647.5v4M530.5 649.5v3M532.5 647.5h2M532.5 649.5h2M533.5 650.5h2M533.5 652.5h1M532.5 648.5v4M533.5 649.5v3M535.5 649.5v3M536.5 647.5h3M537.5 648.5h2M537.5 652.5h1M538.5 649.5v3M540.5 647.5h2M541.5 648.5h1M540.5 649.5h2M541.5 651.5h1M541.5 652.5h1M541.5 649.5v2M542.5 649.5v2M543.5 648.5v4M545.5 647.5h1M545.5 649.5h2M544.5 650.5h3M545.5 651.5h2M545.5 652.5h1M544.5 649.5v2M546.5 648.5v4M548.5 647.5h2M548.5 650.5h2M549.5 651.5h2M549.5 648.5v3M550.5 648.5v3M552.5 648.5h3M552.5 650.5h3M553.5 651.5h1M553.5 648.5v4M554.5 648.5v4M556.5 648.5h3M557.5 649.5h2M557.5 650.5h1M556.5 651.5h3M556.5 649.5v2M557.5 647.5v5M558.5 647.5v4M559.5 647.5v4M561.5 647.5h1M561.5 649.5h1M561.5 650.5h2M560.5 651.5h2M560.5 652.5h3M560.5 649.5v3M561.5 649.5v3M564.5 647.5h3M564.5 648.5h2M565.5 649.5h2M565.5 650.5h2M564.5 651.5h3M566.5 647.5v5M569.5 647.5h1M569.5 648.5h1M569.5 649.5h1M568.5 652.5h3M569.5 647.5v4M570.5 648.5v4M573.5 648.5h1M573.5 649.5h1M573.5 651.5h2M572.5 647.5v5M573.5 647.5v5M575.5 647.5v4M577.5 647.5h3M577.5 648.5h2M578.5 650.5h1M578.5 652.5h1M577.5 647.5v4M578.5 649.5v3M581.5 650.5h2M582.5 652.5h1M581.5 648.5v3M582.5 648.5v4M584.5 648.5v4M585.5 647.5h3M585.5 649.5h2M585.5 650.5h2M586.5 651.5h1M585.5 648.5v3M587.5 647.5v5M589.5 647.5h2M590.5 648.5h2M590.5 649.5h2M590.5 650.5h2M589.5 651.5h3M589.5 652.5h2M589.5 647.5v4M590.5 648.5v3M592.5 649.5v2M593.5 647.5h2M594.5 648.5h2M593.5 649.5h3M593.5 651.5h3M594.5 652.5h2M594.5 648.5v4M596.5 649.5v3M597.5 647.5h2M597.5 648.5h2M598.5 649.5h1M597.5 650.5h2M597.5 649.5v2M598.5 649.5v3M602.5 647.5h2M601.5 648.5h3M601.5 649.5h2M601.5 650.5h3M601.5 651.5h2M601.5 652.5h3M602.5 648.5v3M603.5 647.5v5M606.5 648.5h1M606.5 649.5h1M606.5 650.5h2M605.5 651.5h3M605.5 652.5h2M609.5 648.5h3M609.5 650.5h3M609.5 651.5h2M609.5 652.5h2M609.5 648.5v3M612.5 647.5v5" stroke="#ffffff" fill="none" stroke-linecap="square"/>
<path d="M452.5 657.5l1-1h2l1 1v1l-4 5h4M457.5 663.5h0" stroke="#ffffff" fill="none" stroke-linecap="square"/>
<path d="M460.5 657.5h3M459.5 658.5h4M460.5 660.5h2M459.5 661.5h4M459.5 662.5h4M460.5 657.5v4M462.5 658.5v4M463.5 659.5v3M464.5 657.5h4M465.5 658.5h2M464.5 659.5h3M465.5 661.5h2M467.5 657.5v4M470.5 660.5h2M469.5 661.5h4M470.5 662.5h3M469.5 659.5v3M470.5 658.5v4M471.5 659.5v2M473.5 659.5v3M475.5 658.5h2M475.5 659.5h3M475.5 660.5h3M474.5 658.5v3M475.5 658.5v4M476.5 657.5v5" stroke="#ffffff" fill="none" stroke-linecap="square"/>
<path d="M482.5 656.5v6v1h-2l-1-1M484.5 660.5h2l1 1v1l-1 1h-2v-7h2l1 1v1l-1 2M488.5 663.5l4-7M493.5 656.5h4M495.5 656.5v7M501.5 663.5v-7l-3 5h4M503.5 656.5h3v1l-2 6M509.5 656.5h1l1 1v5l-1 1h-1l-1-1v-5zM516.5 660.5h-3l-1-2v-1l1-1h2l1 1v5l-1 1h-2M517.5 660.5h4M522.5 657.5l1-1h2l1 1v1l-4 5h4M528.5 656.5h2v1v5v1h-2l-1-1v-5zM533.5 656.5h1l1 1v5l-1 1h-1l-1-1v-5zM537.5 656.5h2l1 1v5l-1 1h-2l-1-1v-5zM542.5 656.5v2M544.5 656.5v2" stroke="#ffffff" fill="none" stroke-linecap="square"/>
<path d="M546.5 657.5h3M547.5 658.5h2M547.5 659.5h3M546.5 660.5h4M547.5 661.5h3M546.5 662.5h3M546.5 659.5v3M547.5 658.5v4M549.5 659.5v3M550.5 659.5v2M551.5 658.5h4M551.5 660.5h3M552.5 662.5h2M553.5 657.5v4M557.5 658.5h2M557.5 659.5h2M557.5 661.5h2M556.5 662.5h4M558.5 658.5v3M559.5 659.5v3M562.5 657.5h2M562.5 658.5h2M562.5 659.5h2M562.5 660.5h3M562.5 661.5h3M562.5 658.5v3M563.5 658.5v4M567.5 657.5h3M567.5 658.5h2M566.5 659.5h3M567.5 660.5h3M566.5 661.5h3M566.5 658.5v4M567.5 657.5v5M568.5 657.5v4M569.5 659.5v3M570.5 659.5v3M570.5 657.5h4M570.5 660.5h3M571.5 661.5h2M571.5 662.5h3M571.5 659.5v3M572.5 659.5v2M574.5 658.5v3M576.5 657.5h3M575.5 659.5h3M575.5 660.5h3M575.5 661.5h4M576.5 662.5h2M575.5 657.5v5M576.5 659.5v3M581.5 658.5h2M581.5 659.5h2M581.5 660.5h3M580.5 661.5h4M581.5 662.5h3M580.5 659.5v2M581.5 659.5v2M583.5 658.5v4M584.5 658.5v3M585.5 657.5h3M586.5 658.5h3M585.5 660.5h4M585.5 661.5h3M586.5 659.5v2M587.5 659.5v3M589.5 659.5v3M591.5 658.5h3M590.5 659.5h4M591.5 660.5h3M590.5 661.5h4M590.5 662.5h3M590.5 658.5v4M593.5 659.5v3M594.5 659.5v3M596.5 658.5h3M595.5 659.5h3M595.5 661.5h3M595.5 662.5h4M595.5 658.5v4M597.5 658.5v4M599.5 659.5v2M600.5 657.5h4M601.5 658.5h2M600.5 659.5h3M601.5 660.5h2M600.5 661.5h3M600.5 658.5v3M601.5 659.5v3M602.5 657.5v5M606.5 659.5h3M605.5 660.5h3M605.5 661.5h4M605.5 662.5h4M605.5 657.5v4M607.5 657.5v5M608.5 657.5v4M610.5 658.5h3M610.5 659.5h3M610.5 660.5h2M609.5 662.5h4M609.5 659.5v2M613.5 659.5v2" stroke="#ffffff" fill="none" stroke-linecap="square"/>
<path d="M615.5 656.5v2M617.5 656.5v2" stroke="#ffffff" fill="none" stroke-linecap="square"/>
<path d="M619.5 657.5h3M619.5 658.5h3M620.5 660.5h3M619.5 662.5h3M619.5 657.5v5M620.5 659.5v3M621.5 659.5v3M622.5 659.5v2M624.5 657.5h4M625.5 659.5h2M625.5 661.5h3M625.5 662.5h3M624.5 657.5v4M625.5 659.5v3M628.5 659.5v3M629.5 659.5h3M629.5 660.5h4M630.5 662.5h2M629.5 658.5v3M630.5 659.5v3M632.5 657.5v5M634.5 657.5h4M635.5 658.5h3M635.5 659.5h2M635.5 660.5h2M634.5 661.5h3M634.5 662.5h3M634.5 657.5v4M635.5 657.5v5M636.5 657.5v5M637.5 657.5v4M638.5 659.5v2M640.5 657.5h2M640.5 658.5h2M639.5 659.5h3M640.5 660.5h2M640.5 661.5h3M640.5 662.5h3M641.5 658.5v3M642.5 659.5v2M643.5 658.5v4M643.5 658.5h3M644.5 659.5h3M643.5 660.5h4M644.5 661.5h2M643.5 662.5h3M643.5 659.5v2M644.5 657.5v5M645.5 658.5v4M646.5 658.5v4M647.5 657.5v5M648.5 659.5h3M648.5 661.5h3M649.5 662.5h2M649.5 657.5v4M652.5 659.5v3M654.5 657.5h2M653.5 658.5h4M654.5 659.5h3M653.5 660.5h4M654.5 661.5h2M653.5 662.5h3M653.5 657.5v5M654.5 657.5v5M655.5 659.5v2M657.5 659.5v3M659.5 657.5h3M658.5 659.5v3M661.5 659.5v2M662.5 657.5v5M663.5 657.5h4M664.5 658.5h3M663.5 659.5h3M663.5 661.5h4M664.5 659.5v2M665.5 659.5v2M666.5 658.5v4M667.5 657.5v5M669.5 657.5h2M669.5 660.5h2M669.5 661.5h3M668.5 662.5h3M669.5 658.5v4M670.5 659.5v3M671.5 659.5v2M672.5 659.5v2M673.5 657.5h3M673.5 658.5h4M674.5 661.5h3M673.5 662.5h3M673.5 659.5v3M675.5 658.5v4M676.5 658.5v4M677.5 657.5v5" stroke="#ffffff" fill="none" stroke-linecap="square"/>
<path d="M458.5 670.5h2M459.5 671.5h1M458.5 672.5h3M459.5 673.5h2M458.5 675.5h3M458.5 672.5v3M460.5 671.5v3M461.5 671.5v3M463.5 671.5h3M464.5 672.5h1M463.5 673.5h3M463.5 674.5h2M463.5 675.5h3M463.5 671.5v4M464.5 672.5v2M466.5 670.5v4" stroke="#ffffff" fill="none" stroke-linecap="square"/>
<path d="M469.5 668.5v3M470.5 668.5v3M473.5 668.5v8M476.5 668.5v8M473.5 672.5h3M481.5 670.5l-1-2h-2l-1 2v4l1 2h2l1-2v-2h-2M482.5 670.5l1-2h2l1 2v1l-4 5h4M488.5 668.5h2l1 2v4l-1 2h-2l-1-2v-4zM495.5 668.5h-3v4h2l1 1v1l-1 2h-2M497.5 668.5h2l1 2v1l-1 1h-2v-1v-1zM497.5 672.5v1v1v2h2l1-2v-1l-1-1M501.5 670.5l1-2h2l1 2v1l-1 1h-1M504.5 672.5l1 1v1l-1 2h-2l-1-2M506.5 672.5h4M511.5 670.5l1-2v8M518.5 672.5h-2l-1-1v-1l1-2h2v2v4v2h-2M523.5 672.5h-2l-1-1v-1l1-2h1l1 2v4l-1 2h-1M525.5 668.5h2l1 2v1l-1 1h-2l-1-1v-1zM525.5 672.5l-1 1v1l1 2h2l1-2v-1l-1-1M530.5 668.5v3M532.5 668.5v3" stroke="#ffffff" fill="none" stroke-linecap="square"/>
<path d="M535.5 671.5h2M535.5 672.5h2M535.5 674.5h1M534.5 675.5h3M535.5 670.5v4M537.5 671.5v3M539.5 670.5h2M539.5 671.5h2M540.5 672.5h1M540.5 673.5h1M539.5 674.5h2M539.5 675.5h3M539.5 671.5v3M541.5 670.5v4M542.5 671.5v3M543.5 670.5h2M543.5 671.5h3M544.5 672.5h2M544.5 674.5h1M544.5 675.5h1M544.5 672.5v3M545.5 672.5v2M546.5 671.5v4M549.5 670.5h2M548.5 671.5h3M548.5 672.5h2M549.5 673.5h1M549.5 675.5h1M548.5 671.5v4M549.5 672.5v3M550.5 671.5v4M551.5 670.5v4" stroke="#ffffff" fill="none" stroke-linecap="square"/>
<path d="M554.5 671.5h2M554.5 673.5h2M554.5 674.5h1M554.5 675.5h2M554.5 671.5v4M555.5 671.5v4M556.5 670.5v4M557.5 670.5h3M557.5 671.5h2M557.5 672.5h3M557.5 673.5h2M558.5 675.5h2M563.5 670.5h1M562.5 671.5h2M562.5 673.5h2M563.5 674.5h1M562.5 675.5h2M562.5 671.5v4M564.5 670.5v5M565.5 671.5v4M566.5 670.5h2M566.5 671.5h2M566.5 673.5h2M567.5 674.5h1M566.5 675.5h2M568.5 670.5v4M569.5 670.5v4M571.5 670.5h2M572.5 672.5h2M572.5 673.5h1M571.5 671.5v4M572.5 672.5v2M573.5 672.5v2M577.5 670.5h2M577.5 671.5h2M577.5 673.5h1M576.5 674.5h3M577.5 675.5h1M576.5 671.5v3M577.5 671.5v4M578.5 671.5v4M579.5 671.5v3M580.5 671.5h3M581.5 673.5h2M580.5 670.5v4M582.5 671.5v3M586.5 670.5h1M585.5 671.5h2M585.5 672.5h3M586.5 673.5h2M586.5 674.5h1M586.5 675.5h1M585.5 671.5v3M590.5 670.5h3M590.5 672.5h2M590.5 674.5h3M593.5 670.5v5M594.5 670.5h2M595.5 674.5h1M595.5 675.5h1M596.5 671.5v3M597.5 671.5v3" stroke="#ffffff" fill="none" stroke-linecap="square"/>
<path d="M599.5 670.5h3M599.5 671.5h2M599.5 672.5h2M599.5 675.5h2M601.5 671.5v3M602.5 672.5v2M603.5 671.5h3M603.5 672.5h2M604.5 674.5h2M604.5 675.5h2M604.5 671.5v3M606.5 670.5v5M608.5 670.5h2M608.5 672.5h2M608.5 673.5h2M609.5 675.5h1M608.5 672.5v3M610.5 670.5v4M611.5 672.5v2M613.5 670.5h2M613.5 672.5h3M614.5 674.5h2M613.5 675.5h2M614.5 672.5v2M617.5 670.5h2M618.5 673.5h1M617.5 674.5h3M618.5 675.5h1M623.5 671.5h2M623.5 674.5h2M623.5 672.5v3M625.5 671.5v3" stroke="#ffffff" fill="none" stroke-linecap="square"/>
<path d="M627.5 670.5h1M627.5 671.5h1M627.5 673.5h2M627.5 674.5h2M626.5 671.5v4M628.5 672.5v2M631.5 670.5h2M632.5 671.5h1M632.5 672.5h1M631.5 673.5h2M636.5 670.5h3M636.5 671.5h3M637.5 672.5h1M637.5 675.5h1M636.5 670.5v4M637.5 670.5v4M639.5 672.5v2M640.5 670.5h3M640.5 671.5h3M641.5 675.5h1M642.5 672.5v3M645.5 670.5h2M645.5 672.5h3M645.5 673.5h2M645.5 674.5h3M645.5 675.5h3M646.5 670.5v4M648.5 670.5v5M650.5 670.5h3M651.5 672.5h2M650.5 673.5h3M651.5 674.5h1M651.5 675.5h1M651.5 670.5v4M652.5 670.5v5M653.5 670.5v5M655.5 670.5h2M654.5 671.5h2M654.5 672.5h3M654.5 673.5h2M655.5 674.5h2M655.5 671.5v4M656.5 671.5v3M660.5 671.5h1M659.5 672.5h2M660.5 673.5h2M659.5 675.5h3M659.5 672.5v2M660.5 670.5v4M664.5 671.5h1M663.5 674.5h2M663.5 675.5h3M665.5 672.5v3M666.5 672.5v2M668.5 670.5h3M668.5 671.5h2M668.5 672.5h3M669.5 674.5h1M668.5 672.5v2M669.5 671.5v4M670.5 672.5v2M674.5 670.5h1M673.5 671.5h2M673.5 672.5h2M673.5 673.5h2M673.5 674.5h2M673.5 672.5v2M674.5 670.5v5M675.5 670.5v4M676.5 670.5v4M678.5 670.5h2M677.5 671.5h2M678.5 672.5h1M678.5 673.5h1M677.5 674.5h2M677.5 675.5h3M678.5 672.5v3M679.5 670.5v4M680.5 670.5v4M682.5 670.5h3M683.5 672.5h2M682.5 673.5h3M683.5 674.5h2M682.5 672.5v2M683.5 671.5v3M684.5 670.5v5M688.5 670.5h2M687.5 671.5h3M688.5 673.5h1M688.5 674.5h1M688.5 675.5h1M687.5 672.5v3M689.5 672.5v3M690.5 672.5v3" stroke="#ffffff" fill="none" stroke-linecap="square"/>
<path d="M452.5 680.5l1-2h2l1 2v1l-1 1h-1M455.5 682.5l1 1v1l-1 2h-2l-1-2M457.5 686.5h0" stroke="#ffffff" fill="none" stroke-linecap="square"/>
<path d="M459.5 680.5h3M459.5 681.5h2M460.5 682.5h1M459.5 685.5h2M459.5 681.5v4M461.5 682.5v3M462.5 682.5v2M464.5 682.5h3M465.5 683.5h1M465.5 684.5h1M465.5 685.5h1M465.5 682.5v3M466.5 681.5v4M467.5 681.5v3M469.5 684.5h2M469.5 685.5h2M471.5 682.5v2M472.5 680.5v5M475.5 682.5h1M475.5 683.5h2M475.5 685.5h2M475.5 680.5v5M476.5 680.5v4M477.5 681.5v4M479.5 680.5h1M478.5 681.5h2M479.5 682.5h1M478.5 683.5h2M479.5 684.5h1M478.5 685.5h3M479.5 681.5v4M481.5 680.5v5M484.5 681.5h2M484.5 682.5h1M483.5 683.5h3M483.5 684.5h2M483.5 680.5v4M485.5 681.5v4M486.5 682.5v3M489.5 680.5h1M489.5 681.5h2M488.5 682.5h3M489.5 683.5h2M488.5 684.5h2M489.5 681.5v4M490.5 682.5v2M492.5 680.5h2M493.5 681.5h2M493.5 682.5h1M492.5 683.5h3M492.5 684.5h3M493.5 685.5h1M495.5 680.5v5M497.5 680.5h3M497.5 681.5h3M497.5 682.5h2M497.5 681.5v3M503.5 682.5h2M502.5 683.5h2M503.5 684.5h2M503.5 685.5h1M505.5 680.5v4" stroke="#ffffff" fill="none" stroke-linecap="square"/>
<path d="M510.5 678.5h-3v8h3M507.5 682.5h2M511.5 680.5l1-2h2l1 2v1l-1 1h-1M514.5 682.5l1 1v1l-1 2h-2l-1-2M517.5 678.5h2l1 2v4l-1 2h-2l-1-2v-4zM522.5 678.5h2l1 2v1l-1 1h-2l-1-1v-1zM522.5 682.5l-1 1v1l1 2h2l1-2v-1l-1-1M526.5 686.5h0" stroke="#ffffff" fill="none" stroke-linecap="square"/>
<path d="M528.5 680.5h2M528.5 682.5h2M528.5 683.5h3M528.5 684.5h3M528.5 685.5h2M528.5 680.5v5M530.5 682.5v2M531.5 680.5v5M534.5 680.5h2M534.5 681.5h1M534.5 682.5h1M534.5 683.5h1M533.5 680.5v5M534.5 680.5v5M535.5 680.5v5M539.5 680.5h2M539.5 681.5h1M539.5 682.5h2M538.5 683.5h2M539.5 684.5h1M538.5 685.5h3M539.5 681.5v3M541.5 682.5v3M543.5 680.5h2M543.5 681.5h2M542.5 682.5h3M542.5 683.5h3M543.5 685.5h1M543.5 681.5v4M544.5 681.5v4M545.5 680.5v5M548.5 680.5h1M547.5 681.5h2M548.5 682.5h2M547.5 684.5h3M548.5 685.5h1M547.5 682.5v2M548.5 680.5v5M549.5 681.5v3M550.5 680.5v5M553.5 681.5h1M553.5 682.5h1M552.5 684.5h2M552.5 685.5h2M552.5 682.5v3M553.5 682.5v2M555.5 680.5v4M558.5 680.5h1M558.5 681.5h2M557.5 682.5h2M558.5 684.5h2M558.5 685.5h2M558.5 681.5v4M560.5 682.5v2M561.5 680.5h3M562.5 681.5h1M561.5 682.5h2M562.5 683.5h1M562.5 684.5h2M562.5 681.5v4M563.5 682.5v3M564.5 680.5v5M567.5 681.5h2M567.5 682.5h2M567.5 683.5h2M566.5 684.5h3M566.5 685.5h3M568.5 681.5v3M569.5 682.5v2M571.5 680.5h3M572.5 680.5v4M573.5 681.5v4" stroke="#ffffff" fill="none" stroke-linecap="square"/>
<path d="M579.5 678.5h-3v8h3M576.5 682.5h2M584.5 678.5h-4v4h3l1 1v1l-1 2h-3M586.5 678.5h2l1 2v4l-1 2h-2l-1-2v-4zM590.5 680.5l1-2v8M597.5 678.5h-3v4h3v1v1v2h-3M599.5 686.5h0" stroke="#ffffff" fill="none" stroke-linecap="square"/>
<path d="M601.5 681.5h2M601.5 682.5h2M602.5 683.5h1M602.5 684.5h2M602.5 685.5h2M601.5 680.5v4M602.5 682.5v3M604.5 680.5v5M606.5 681.5h2M606.5 682.5h3M606.5 683.5h3M607.5 684.5h1M607.5 685.5h2M606.5 680.5v4M607.5 682.5v3M612.5 680.5h1M612.5 685.5h2M611.5 682.5v3M614.5 681.5v3M615.5 680.5h2M616.5 682.5h1M616.5 684.5h1M616.5 685.5h2M615.5 680.5v5M617.5 682.5v3M621.5 681.5h2M621.5 682.5h1M621.5 683.5h1M621.5 685.5h2M621.5 680.5v4M623.5 682.5v3M625.5 680.5h2M625.5 681.5h2M625.5 682.5h2M625.5 683.5h2M625.5 680.5v5M626.5 682.5v3M627.5 680.5v5M628.5 680.5v4M629.5 680.5h2M630.5 681.5h1M629.5 684.5h2M629.5 685.5h2M629.5 680.5v4M630.5 681.5v3M631.5 682.5v2M634.5 681.5h2M634.5 683.5h3M634.5 684.5h3M635.5 685.5h1M634.5 681.5v3M635.5 682.5v3M636.5 680.5v5M639.5 680.5h3M639.5 684.5h3M639.5 685.5h3M640.5 682.5v3M641.5 682.5v3M642.5 681.5v3M645.5 680.5h1M644.5 682.5h3M644.5 683.5h3M645.5 684.5h2M644.5 685.5h2M644.5 682.5v3M645.5 682.5v2M646.5 682.5v3M647.5 681.5v3M648.5 680.5h3M649.5 681.5h2M648.5 682.5h3M648.5 683.5h3M649.5 684.5h1M649.5 681.5v3M651.5 680.5v4M654.5 682.5h2M653.5 683.5h2M654.5 685.5h2M654.5 680.5v5M655.5 680.5v4M658.5 680.5h2M659.5 682.5h2M659.5 685.5h1M658.5 680.5v4M659.5 680.5v4M660.5 680.5v5M662.5 680.5h2M662.5 683.5h3M663.5 684.5h2M662.5 685.5h3M663.5 682.5v3M665.5 680.5v4M668.5 680.5h2M667.5 681.5h2M668.5 682.5h2M667.5 683.5h2M668.5 684.5h1M667.5 682.5v3M668.5 681.5v4M670.5 682.5v2" stroke="#ffffff" fill="none" stroke-linecap="square"/>
<path d="M676.5 678.5h-4v8h4M672.5 682.5h3M679.5 686.5v-8l-2 5h3M682.5 680.5v-2h2l1 2v1l-1 1h-1M684.5 682.5l1 1v1l-1 2h-2v-2M686.5 680.5l2-2v8M694.5 678.5h-4v4h3l1 1v1l-1 2h-3M695.5 686.5h0" stroke="#ffffff" fill="none" stroke-linecap="square"/>
<path d="M459.5 691.5h2M459.5 694.5h1M458.5 696.5h3M458.5 692.5v3M460.5 691.5v4M461.5 693.5v2M464.5 692.5h1M463.5 693.5h3M463.5 694.5h3M463.5 692.5v4M468.5 691.5h2M468.5 692.5h1M467.5 694.5h3M468.5 695.5h1M468.5 691.5v5M470.5 693.5v3M471.5 691.5h2M472.5 692.5h2M472.5 694.5h1M472.5 695.5h2M471.5 692.5v4M472.5 691.5v5M476.5 691.5h2M475.5 692.5h2M476.5 693.5h1M476.5 694.5h2M476.5 696.5h1M475.5 692.5v3M480.5 693.5h1M480.5 694.5h2M479.5 695.5h3M480.5 696.5h1M479.5 691.5v4M482.5 691.5v4M483.5 691.5h2M484.5 692.5h2M484.5 693.5h2M483.5 694.5h2M484.5 695.5h1M483.5 696.5h3M483.5 691.5v4M484.5 692.5v3M485.5 692.5v3M486.5 691.5v5" stroke="#ffffff" fill="none" stroke-linecap="square"/>
<path d="M491.5 690.5h-3v7h3M488.5 694.5h2M495.5 697.5v-7l-3 5h4M497.5 691.5l1-1h2l1 1v1l-1 2h-1M500.5 694.5l1 1v1l-1 1h-2l-1-1M503.5 690.5h2l1 1v5l-1 1h-2l-1-1v-5zM507.5 691.5l1-1h1l1 1v1l-1 2h0M509.5 694.5l1 1v1l-1 1h-1l-1-1M512.5 697.5h0" stroke="#ffffff" fill="none" stroke-linecap="square"/>
<path d="M514.5 692.5h3M515.5 693.5h2M514.5 694.5h2M514.5 696.5h3M517.5 692.5v4M518.5 691.5h3M519.5 692.5h2M519.5 693.5h1M519.5 694.5h2M518.5 696.5h3M519.5 691.5v5M520.5 691.5v5M521.5 692.5v4M523.5 692.5h2M522.5 694.5h2M523.5 695.5h2M522.5 696.5h2M523.5 691.5v4M524.5 693.5v2M526.5 691.5h3M527.5 692.5h1M526.5 694.5h2M527.5 695.5h1M526.5 696.5h3M527.5 693.5v2M528.5 691.5v4M529.5 691.5v5M532.5 691.5h1M532.5 693.5h2M532.5 694.5h1M531.5 695.5h3M531.5 693.5v3M535.5 691.5h2M535.5 693.5h2M536.5 694.5h1M536.5 695.5h2M536.5 696.5h2M535.5 691.5v5M536.5 692.5v4M537.5 691.5v4M539.5 694.5h2M540.5 695.5h1M540.5 696.5h2M541.5 693.5v3M542.5 692.5v4M543.5 692.5h2M544.5 693.5h2M543.5 694.5h3M543.5 696.5h3M543.5 693.5v3M545.5 692.5v3" stroke="#ffffff" fill="none" stroke-linecap="square"/>
<path d="M547.5 690.5v7M551.5 690.5v7M547.5 694.5h4M552.5 691.5l1-1v7M557.5 690.5h2v1v5v1h-2l-1-1v-5zM561.5 697.5v-7l1 4l2-4v7M565.5 697.5v-5M565.5 694.5l1-2h2l1 2v3M570.5 691.5l1-1h2l1 1v1l-4 5h4M575.5 697.5h0" stroke="#ffffff" fill="none" stroke-linecap="square"/>
<path d="M579.5 691.5h1M578.5 692.5h2M578.5 693.5h2M579.5 694.5h2M580.5 692.5v4M581.5 693.5v3M582.5 692.5h3M582.5 695.5h3M583.5 696.5h2M582.5 692.5v4M583.5 691.5v4M587.5 692.5h2M586.5 693.5h3M586.5 694.5h2M587.5 695.5h2M586.5 693.5v3M587.5 691.5v5M589.5 692.5v4" stroke="#ffffff" fill="none" stroke-linecap="square"/>
<path d="M590.5 690.5v7M594.5 690.5v7M590.5 694.5h4M598.5 690.5v6l-1 1h-1l-1-1M602.5 697.5v-7l-2 5h3M604.5 691.5l1-1h2l1 1v1l-1 2h-1M607.5 694.5l1 1v1l-1 1h-2l-1-1M609.5 691.5l1-1v7M613.5 697.5h0" stroke="#ffffff" fill="none" stroke-linecap="square"/>
<path d="M455.5 707.5v-7l-3 5h4M457.5 707.5h0" stroke="#ffffff" fill="none" stroke-linecap="square"/>
<path d="M460.5 702.5h1M459.5 703.5h3M460.5 704.5h1M459.5 705.5h2M460.5 706.5h1M459.5 701.5v5M461.5 702.5v4M462.5 703.5v3M464.5 702.5h1M464.5 703.5h1M464.5 704.5h1M464.5 705.5h2M464.5 706.5h1M463.5 702.5v4M464.5 702.5v4M465.5 703.5v3M468.5 702.5h1M467.5 703.5h3M468.5 704.5h2M468.5 706.5h1M467.5 701.5v5M468.5 701.5v4M470.5 703.5v2M473.5 701.5h1M473.5 702.5h2M473.5 704.5h1M473.5 705.5h1M472.5 706.5h3M472.5 702.5v3M473.5 701.5v5M474.5 703.5v3M475.5 701.5v4M477.5 702.5h1M477.5 703.5h2M477.5 705.5h1M477.5 706.5h1M476.5 701.5v4M477.5 701.5v5M478.5 703.5v3M479.5 702.5v3M480.5 701.5h3M481.5 704.5h2M481.5 705.5h2M481.5 701.5v5M482.5 703.5v2M485.5 701.5h2M484.5 702.5h2M485.5 703.5h1M485.5 704.5h1M485.5 706.5h1M484.5 703.5v2M485.5 701.5v4M489.5 702.5h2M488.5 703.5h3M489.5 704.5h1M489.5 706.5h1M488.5 703.5v3M489.5 702.5v4M491.5 701.5v5M492.5 701.5h3M492.5 702.5h3M493.5 704.5h1M492.5 705.5h2M492.5 706.5h3M492.5 702.5v3M493.5 701.5v4M494.5 702.5v3M495.5 702.5v3M496.5 702.5h3M496.5 703.5h2M496.5 704.5h3M496.5 705.5h3M497.5 706.5h2M498.5 702.5v4M501.5 701.5h1M501.5 702.5h1M500.5 703.5h3M501.5 704.5h2M500.5 705.5h2M500.5 706.5h2M501.5 701.5v4M503.5 703.5v3M505.5 702.5h2M505.5 703.5h2M504.5 705.5h2M505.5 706.5h2M505.5 703.5v2M506.5 701.5v5M507.5 702.5v4M509.5 701.5h1M509.5 703.5h1M509.5 704.5h2M509.5 705.5h2M509.5 706.5h1M508.5 701.5v4M512.5 701.5h2M512.5 702.5h3M512.5 704.5h2M513.5 705.5h1M512.5 701.5v4M513.5 702.5v4M514.5 703.5v3M515.5 701.5v5M517.5 701.5h1M517.5 703.5h1M517.5 704.5h2M517.5 705.5h2M516.5 706.5h2M516.5 702.5v4M517.5 701.5v4M518.5 701.5v4M521.5 701.5h2M521.5 703.5h2M520.5 705.5h2M520.5 703.5v2M521.5 703.5v3M523.5 703.5v3M524.5 701.5h3M524.5 702.5h3M524.5 704.5h3M525.5 705.5h1M524.5 706.5h3M524.5 703.5v3M526.5 703.5v3M527.5 703.5v3M529.5 701.5h2M528.5 703.5h2M528.5 704.5h2M528.5 705.5h2M528.5 702.5v3M529.5 701.5v5M531.5 703.5v2" stroke="#ffffff" fill="none" stroke-linecap="square"/>
<path d="M456.5 710.5h-4v4h3l1 1v1l-1 1h-3M457.5 717.5h0" stroke="#ffffff" fill="none" stroke-linecap="square"/>
<path d="M459.5 712.5h4M459.5 714.5h4M459.5 715.5h3M459.5 716.5h4M460.5 713.5v2M461.5 713.5v2M462.5 712.5v3" stroke="#ffffff" fill="none" stroke-linecap="square"/>
<path d="M464.5 717.5l2-7l2 7M465.5 715.5h2M469.5 717.5h0" stroke="#ffffff" fill="none" stroke-linecap="square"/>
<path d="M472.5 711.5h3M471.5 712.5h3M471.5 713.5h3M471.5 714.5h4M472.5 715.5h3M471.5 716.5h3M471.5 713.5v3M472.5 711.5v4M473.5 713.5v2M474.5 712.5v3M477.5 711.5h3M476.5 713.5h4M476.5 714.5h4M477.5 716.5h2M476.5 712.5v3M477.5 711.5v5M478.5 712.5v3M479.5 711.5v5M480.5 711.5v5M481.5 711.5h4M482.5 712.5h2M481.5 713.5h3M482.5 714.5h3M482.5 715.5h2M482.5 716.5h3M481.5 712.5v3M483.5 713.5v2M485.5 712.5v3M486.5 711.5h4M486.5 712.5h3M486.5 714.5h3M487.5 715.5h3M486.5 716.5h3M487.5 712.5v4M490.5 711.5v4M492.5 711.5h3M492.5 712.5h2M491.5 713.5h4M492.5 714.5h3M492.5 715.5h2M492.5 716.5h2M491.5 712.5v4M492.5 712.5v3M494.5 713.5v2M495.5 712.5v4M497.5 712.5h2M496.5 713.5h4M497.5 714.5h3M497.5 715.5h3M496.5 716.5h3M496.5 711.5v5M497.5 711.5v5M500.5 711.5v4M500.5 711.5h4M500.5 712.5h4M500.5 713.5h3M501.5 714.5h3M500.5 715.5h3M500.5 716.5h4M500.5 712.5v3M501.5 712.5v4M502.5 712.5v3M506.5 711.5h2M505.5 714.5h3M506.5 715.5h3M505.5 712.5v3M507.5 713.5v3M509.5 711.5v4M510.5 713.5h4M510.5 714.5h3M510.5 715.5h4M511.5 716.5h3M510.5 713.5v3M511.5 712.5v3M512.5 712.5v4M514.5 711.5v5M515.5 711.5h3M515.5 713.5h3M516.5 714.5h2M516.5 716.5h3M519.5 712.5v3M520.5 711.5h3M521.5 712.5h2M520.5 713.5h4M521.5 714.5h2M521.5 715.5h3M520.5 716.5h3M521.5 712.5v3M524.5 711.5v5M526.5 711.5h3M526.5 712.5h3M525.5 713.5h4M525.5 714.5h4M525.5 715.5h3M526.5 716.5h3M525.5 712.5v4M526.5 712.5v3M527.5 712.5v4M528.5 712.5v3M529.5 713.5v2M529.5 713.5h4M530.5 714.5h3M530.5 715.5h3M530.5 716.5h2M530.5 713.5v3M531.5 713.5v3M532.5 712.5v4M533.5 713.5v3M535.5 711.5h2M534.5 712.5h4M534.5 713.5h3M534.5 713.5v2M535.5 712.5v4M536.5 713.5v2M537.5 712.5v3" stroke="#ffffff" fill="none" stroke-linecap="square"/>
<path d="M539.5 710.5l4 7M543.5 710.5l-4 7" stroke="#ffffff" fill="none" stroke-linecap="square"/>
<path d="M544.5 711.5h3M545.5 712.5h3M544.5 714.5h3M544.5 716.5h4M544.5 712.5v4M545.5 712.5v3M547.5 711.5v5M549.5 711.5h4M549.5 712.5h4M549.5 713.5h3M549.5 714.5h4M550.5 715.5h2M550.5 711.5v5M553.5 711.5v5M554.5 715.5h2M553.5 711.5v5M554.5 713.5v2M556.5 713.5v3M557.5 712.5v3M558.5 711.5h4M558.5 712.5h4M558.5 713.5h4M559.5 714.5h3M558.5 715.5h3M558.5 713.5v2M560.5 712.5v3M562.5 713.5v3M564.5 711.5h2M564.5 712.5h2M563.5 714.5h4M563.5 713.5v2M564.5 712.5v3M565.5 713.5v2M567.5 711.5v4M568.5 711.5h3M568.5 712.5h3M568.5 713.5h3M569.5 716.5h2M568.5 711.5v5M569.5 712.5v3M570.5 713.5v3M571.5 713.5v2M574.5 711.5h2M574.5 713.5h2M573.5 714.5h4M574.5 715.5h2M574.5 716.5h3M573.5 713.5v2M575.5 711.5v4M576.5 713.5v2M579.5 711.5h2M578.5 712.5h4M579.5 713.5h2M579.5 714.5h2M579.5 715.5h2M583.5 712.5h2M582.5 713.5h4M583.5 714.5h2M583.5 716.5h2M582.5 713.5v3M584.5 713.5v2M585.5 711.5v5M586.5 712.5v3M587.5 713.5h4M588.5 715.5h3M589.5 713.5v2M591.5 711.5v5M592.5 712.5h3M593.5 713.5h2M592.5 714.5h4M593.5 715.5h2M592.5 716.5h3M593.5 712.5v4M596.5 711.5v5M598.5 711.5h3M597.5 712.5h4M598.5 713.5h2M598.5 714.5h3M597.5 715.5h4M597.5 713.5v3M598.5 712.5v3M599.5 712.5v3M601.5 712.5v4M602.5 712.5h4M603.5 713.5h2M603.5 714.5h2M603.5 716.5h2M602.5 711.5v4M603.5 711.5v5M604.5 712.5v4M607.5 711.5h3M607.5 712.5h4M607.5 713.5h4M608.5 715.5h2M607.5 716.5h3M607.5 712.5v4M608.5 713.5v3M609.5 712.5v3M610.5 712.5v3M611.5 712.5h3M611.5 713.5h4M612.5 714.5h3M612.5 715.5h3M611.5 716.5h3M612.5 712.5v3M613.5 711.5v5M614.5 711.5v4M616.5 711.5h3M617.5 712.5h2M616.5 713.5h4M616.5 714.5h3M617.5 715.5h3M618.5 713.5v2M619.5 713.5v2" stroke="#ffffff" fill="none" stroke-linecap="square"/>
<path d="M621.5 711.5l1-1h2l1 1v1l-4 5h4M627.5 710.5h2v1v5v1h-2l-1-1v-5zM631.5 717.5l3-7M631.5 710.5h1v1h-1zM633.5 716.5h1v1h-1zM635.5 717.5h0" stroke="#ffffff" fill="none" stroke-linecap="square"/>
<path d="M638.5 711.5h3M639.5 712.5h2M638.5 713.5h3M639.5 714.5h2M638.5 711.5v5M639.5 713.5v2M641.5 713.5v3M642.5 713.5v2M644.5 711.5h2M644.5 713.5h2M644.5 715.5h2M643.5 716.5h4M643.5 711.5v4M645.5 713.5v2M649.5 711.5h3M649.5 712.5h2M648.5 714.5h4M648.5 715.5h4M648.5 716.5h3M649.5 711.5v5M650.5 711.5v5M651.5 711.5v4M652.5 712.5h4M653.5 714.5h2M652.5 715.5h3M653.5 716.5h3M652.5 711.5v5M654.5 711.5v5M655.5 713.5v3M656.5 713.5v3M658.5 712.5h2M657.5 714.5h4M658.5 715.5h2M657.5 716.5h3M658.5 712.5v4M659.5 713.5v3M660.5 711.5v4M661.5 713.5v2" stroke="#ffffff" fill="none" stroke-linecap="square"/>
<path d="M662.5 711.5l1-1h2l1 1v1l-4 5h4M670.5 710.5h-3v4h3v1v1v1h-3M673.5 710.5h1l1 1v5l-1 1h-1l-1-1v-5zM676.5 717.5v-5M676.5 714.5l1-2l1 2v3M678.5 714.5l1-2l1 2v3M681.5 717.5v-5M681.5 714.5l1-2l1 2v3M683.5 714.5l1-2l1 2v3M686.5 717.5h0" stroke="#ffffff" fill="none" stroke-linecap="square"/>
<path d="M459.5 722.5h2M459.5 725.5h1M461.5 724.5v2M464.5 722.5h2M463.5 723.5h2M463.5 726.5h2M464.5 727.5h1M465.5 723.5v4M466.5 722.5v5M467.5 722.5h3M467.5 724.5h2M468.5 725.5h2M468.5 726.5h1M468.5 727.5h2M469.5 722.5v5M470.5 722.5v4" stroke="#ffffff" fill="none" stroke-linecap="square"/>
<path d="M474.5 722.5v5l-1 1h-2v-1M475.5 725.5h3l1 1v1l-1 1h-3v-6h3l1 1v1l-1 1M483.5 728.5v-6l-3 4h4M485.5 722.5h4v1l-3 5M490.5 723.5l1-1h1l1 1v1l-1 1h0M492.5 725.5l1 1v1l-1 1h-1l-1-1M495.5 722.5h2l1 1v4l-1 1h-2v-1v-4zM499.5 725.5h4M508.5 725.5h-3l-1-1v-1l1-1h2l1 1v4l-1 1h-2M512.5 728.5v-6l-3 4h4" stroke="#ffffff" fill="none" stroke-linecap="square"/>
<path d="M514.5 722.5h3M515.5 723.5h2M514.5 725.5h3M515.5 726.5h1M515.5 727.5h1M514.5 724.5v3M515.5 723.5v4M517.5 722.5v5M518.5 725.5h2M519.5 726.5h1M518.5 727.5h3M519.5 722.5v5M520.5 724.5v2M523.5 722.5h1M522.5 723.5h2M523.5 725.5h1M523.5 726.5h1M525.5 722.5v5M527.5 722.5h1M527.5 723.5h1M526.5 724.5h2M526.5 725.5h3M527.5 726.5h1M526.5 727.5h3M526.5 722.5v5M527.5 723.5v3M531.5 724.5h1M530.5 725.5h2M530.5 726.5h3M531.5 727.5h2M530.5 724.5v2M533.5 723.5v4M535.5 722.5h2M535.5 723.5h1M534.5 724.5h2M534.5 725.5h3M535.5 726.5h1M534.5 727.5h2M534.5 723.5v4M537.5 723.5v3M539.5 722.5h2M539.5 724.5h2M538.5 726.5h3M538.5 723.5v3M539.5 723.5v3M540.5 723.5v4M541.5 723.5v3M543.5 722.5h2M543.5 723.5h1M543.5 724.5h2M542.5 725.5h3M543.5 726.5h1M544.5 724.5v3M545.5 723.5v4M546.5 722.5h2M547.5 723.5h1M547.5 724.5h1M550.5 722.5h2M551.5 723.5h2M550.5 724.5h3M551.5 726.5h1M550.5 724.5v3M551.5 722.5v4M553.5 724.5v2" stroke="#ffffff" fill="none" stroke-linecap="square"/>
<path d="M455.5 733.5h-2l-1 1v5l1 1h2l1-1v-2l-1-1h-3M457.5 740.5h0" stroke="#ffffff" fill="none" stroke-linecap="square"/>
<path d="M459.5 738.5h6M460.5 735.5v4M461.5 735.5v4M469.5 734.5h4M468.5 735.5h5M467.5 736.5h5M469.5 737.5h3M467.5 738.5h4M473.5 736.5v2M475.5 734.5h5M475.5 735.5h3M474.5 736.5h4M476.5 737.5h2M475.5 739.5h3M475.5 734.5v4M477.5 736.5v3M478.5 736.5v2M479.5 736.5v3M480.5 734.5v5M483.5 734.5h3M481.5 736.5h5M483.5 739.5h2M481.5 734.5v4M482.5 735.5v4M484.5 735.5v4M485.5 735.5v3M486.5 736.5v2M487.5 736.5v3M491.5 736.5h4M490.5 737.5h5M490.5 738.5h5M490.5 739.5h4M489.5 735.5v3M490.5 736.5v2M492.5 735.5v3M493.5 735.5v3M494.5 734.5v5M498.5 735.5h4M496.5 736.5h5M496.5 738.5h5M496.5 739.5h6M498.5 736.5v3M499.5 736.5v3M500.5 735.5v3M501.5 734.5v5" stroke="#ffffff" fill="none" stroke-linecap="square"/>
<path d="M504.5 733.5h2l1 1v5l-1 1h-2l-1-1v-5zM508.5 740.5h0M511.5 734.5v-1h2l1 1v1l-3 5h3M515.5 740.5v-7l2 3l2-3v7M520.5 740.5v-7h3l1 1v1l-1 1h-3M526.5 735.5h2l1 1v4M529.5 737.5h-3l-1 2l1 1h3" stroke="#ffffff" fill="none" stroke-linecap="square"/>
<path d="M532.5 734.5h4M532.5 735.5h2M531.5 736.5h4M530.5 738.5h5M531.5 739.5h3M530.5 736.5v2M531.5 736.5v2M532.5 734.5v5M533.5 734.5v4M535.5 735.5v4M536.5 734.5v4M538.5 734.5h5M539.5 735.5h4M539.5 737.5h3M538.5 738.5h5M539.5 739.5h3M541.5 735.5v4M542.5 734.5v4M544.5 736.5h5M544.5 738.5h4M545.5 734.5v5M547.5 734.5v4M548.5 735.5v4M549.5 735.5v3M550.5 735.5v4M553.5 734.5h5M553.5 736.5h4M554.5 737.5h4M553.5 739.5h5M552.5 735.5v3M553.5 736.5v3M556.5 735.5v3M557.5 735.5v3M558.5 736.5v3M560.5 735.5h4M559.5 738.5h5M560.5 734.5v4M561.5 736.5v2M563.5 735.5v3M564.5 736.5v2M565.5 735.5v3M568.5 736.5h2M568.5 737.5h4M566.5 739.5h6M567.5 734.5v5M568.5 736.5v3M569.5 734.5v5M570.5 735.5v4M576.5 734.5h3M575.5 735.5h4M574.5 736.5h4M576.5 737.5h3M574.5 738.5h5M576.5 739.5h2M574.5 735.5v3M575.5 735.5v3M576.5 734.5v5M577.5 734.5v5M578.5 735.5v3M580.5 734.5v5" stroke="#ffffff" fill="none" stroke-linecap="square"/>
<path d="M582.5 733.5h2v1v5v1h-2l-1-1v-5zM586.5 740.5h0M588.5 734.5l2-1v7M596.5 736.5h-3l-1-1v-1l1-1h2l1 1v5l-1 1h-2M597.5 740.5v-7l2 3l1-3v7M602.5 740.5v-7h2l1 1v1l-1 1h-2M607.5 735.5h2l1 1v4M610.5 737.5h-3l-1 2l1 1h3" stroke="#ffffff" fill="none" stroke-linecap="square"/>
<path d="M611.5 734.5h6M611.5 735.5h4M612.5 736.5h3M613.5 737.5h4M611.5 739.5h5M611.5 736.5v2M613.5 735.5v3M614.5 735.5v4M615.5 736.5v2M617.5 736.5v2M620.5 735.5h3M620.5 736.5h3M620.5 737.5h4M620.5 738.5h4M621.5 739.5h2M619.5 736.5v2M620.5 735.5v3M621.5 736.5v3M622.5 734.5v4M623.5 735.5v3M624.5 734.5v5M625.5 736.5v2" stroke="#ffffff" fill="none" stroke-linecap="square"/>
<path d="M626.5 733.5v7M629.5 733.5v7M626.5 736.5h3M634.5 734.5l-1-1h-1l-1 1v5l1 1h1l1-1v-3h-2M635.5 734.5l1-1h2l1 1v1l-4 5h4M641.5 733.5h2l1 1v5l-1 1h-2l-1-1v-5zM649.5 733.5h-4v3h3l1 1v2l-1 1h-3M651.5 733.5h2v1v1v1h-2l-1-1v-1zM651.5 736.5l-1 1v2l1 1h2v-1v-2v-1M657.5 740.5v-7l-2 4h3M659.5 736.5h4M664.5 734.5l2-1v7M672.5 736.5h-3l-1-1v-1l1-1h2l1 1v5l-1 1h-2M677.5 736.5h-3l-1-1v-1l1-1h2l1 1v5l-1 1h-2M679.5 733.5h1l1 1v1l-1 1h-1l-1-1v-1zM679.5 736.5l-1 1v2l1 1h1l1-1v-2l-1-1" stroke="#ffffff" fill="none" stroke-linecap="square"/>
<path d="M684.5 734.5h3M684.5 735.5h5M684.5 737.5h4M684.5 738.5h4M685.5 739.5h4M683.5 735.5v3M684.5 735.5v4M685.5 735.5v4M686.5 736.5v3M687.5 735.5v3M688.5 735.5v4" stroke="#ffffff" fill="none" stroke-linecap="square"/>
<path d="M460.5 748.5h3M459.5 749.5h3M458.5 747.5v3M461.5 747.5v3M462.5 747.5v3M463.5 746.5v3M464.5 745.5h4M464.5 746.5h5M464.5 747.5h5M466.5 748.5h2M466.5 749.5h2M464.5 746.5v3M465.5 747.5v2M466.5 747.5v2M467.5 745.5v4M468.5 746.5v3M470.5 745.5h4M472.5 749.5h3M470.5 747.5v2M472.5 746.5v4M473.5 746.5v4M474.5 746.5v4M475.5 745.5v4M478.5 745.5h3M476.5 746.5h4M478.5 747.5h2M478.5 748.5h3M476.5 749.5h5M476.5 750.5h5M476.5 745.5v4M478.5 746.5v4M481.5 747.5v2M482.5 746.5h5M482.5 747.5h5M484.5 749.5h3M482.5 750.5h4M482.5 747.5v3M484.5 745.5v4M485.5 747.5v2M490.5 745.5h2M490.5 748.5h2M488.5 749.5h5M490.5 750.5h3M488.5 745.5v4M489.5 747.5v3M490.5 745.5v4M493.5 745.5v5M494.5 745.5h4M495.5 746.5h3M496.5 747.5h2M495.5 749.5h4M496.5 745.5v4M497.5 745.5v5M498.5 747.5v2M499.5 745.5v4M502.5 745.5h2M501.5 746.5h4M502.5 747.5h2M500.5 748.5h5M501.5 749.5h4M504.5 745.5v4M507.5 747.5h4M506.5 748.5h5M506.5 749.5h5M508.5 750.5h2M508.5 746.5v3M510.5 747.5v3M513.5 745.5h4M514.5 746.5h2M514.5 747.5h3M512.5 749.5h5M512.5 750.5h4M513.5 746.5v3M514.5 745.5v5M517.5 746.5v4M518.5 746.5h4M520.5 748.5h2M518.5 750.5h4M518.5 747.5v2M519.5 745.5v4M522.5 745.5v4M523.5 747.5v3M525.5 747.5h4M524.5 749.5h5M524.5 747.5v3" stroke="#ffffff" fill="none" stroke-linecap="square"/>
<path d="M533.5 744.5h-2l-1 1v5l1 1h2v-1v-1v-1h-3M535.5 751.5h0M537.5 745.5l2-1v7M545.5 748.5h-3l-1-2v-1l1-1h2l1 1v5l-1 1h-2M546.5 751.5v-7l2 4l1-4v7M551.5 751.5v-7h2l1 1v1l-1 2h-2M556.5 746.5h2l1 2v3M559.5 749.5h-3l-1 1l1 1h3" stroke="#ffffff" fill="none" stroke-linecap="square"/>
<path d="M560.5 746.5h4M562.5 747.5h3M562.5 749.5h2M560.5 746.5v4M562.5 747.5v3M564.5 747.5v2M565.5 745.5v4M568.5 745.5h3M568.5 746.5h3M567.5 747.5h3M566.5 748.5h4M567.5 749.5h4M566.5 750.5h4M566.5 746.5v4M569.5 745.5v4M571.5 747.5v2M573.5 745.5h3M573.5 746.5h4M574.5 748.5h3M574.5 749.5h3M574.5 750.5h3M574.5 747.5v3M575.5 746.5v3M576.5 745.5v4M580.5 745.5h3M579.5 747.5h4M578.5 748.5h5M580.5 749.5h2M579.5 750.5h4M578.5 745.5v4M582.5 746.5v3M583.5 747.5v3M584.5 745.5h5M585.5 746.5v4M590.5 745.5h5M590.5 746.5h5M592.5 747.5h3M592.5 749.5h3M591.5 750.5h3M590.5 745.5v4M591.5 745.5v4M592.5 746.5v4M593.5 746.5v4M595.5 747.5v2" stroke="#ffffff" fill="none" stroke-linecap="square"/>
<path d="M599.5 751.5v-7l-3 5h4M601.5 751.5h0M603.5 745.5l1-1h2l1 1v1l-1 2h-1M606.5 748.5l1 1v1l-1 1h-2l-1-1M612.5 744.5h-4v4h3l1 1v1l-1 1h-3M613.5 751.5v-7l2 4l1-4v7M618.5 751.5v-7h2l1 1v1l-1 2h-2M623.5 746.5h2l1 2v3M626.5 749.5h-3l-1 1l1 1h3" stroke="#ffffff" fill="none" stroke-linecap="square"/>
<path d="M629.5 745.5h3M628.5 748.5h3M629.5 750.5h3M628.5 747.5v2M633.5 745.5h4M634.5 748.5h4M634.5 746.5v4M635.5 745.5v5M636.5 747.5v2M637.5 747.5v2M638.5 746.5v3M640.5 745.5h3M640.5 747.5h3M640.5 748.5h3M639.5 749.5h5M640.5 746.5v4M644.5 746.5v3M647.5 746.5h2M645.5 747.5h5M645.5 746.5v4M646.5 747.5v2M647.5 747.5v2M649.5 747.5v3M650.5 746.5v4M653.5 745.5h3M653.5 746.5h2M653.5 747.5h2M651.5 748.5h5M651.5 745.5v4M652.5 746.5v3M655.5 746.5v3M656.5 745.5v4M657.5 745.5h4M657.5 746.5h5M657.5 747.5h5M658.5 749.5h4M657.5 750.5h5M657.5 746.5v4M658.5 745.5v4M661.5 745.5v4M664.5 745.5h4M663.5 746.5h4M663.5 747.5h5M665.5 748.5h2M663.5 749.5h5M663.5 746.5v4M665.5 745.5v5M668.5 746.5v3M669.5 750.5h4M669.5 745.5v4M673.5 746.5v3" stroke="#ffffff" fill="none" stroke-linecap="square"/>
<path d="M452.5 756.5h4v1l-3 5M457.5 762.5h0" stroke="#ffffff" fill="none" stroke-linecap="square"/>
<path d="M459.5 756.5h3M460.5 757.5h2M460.5 760.5h2M460.5 761.5h3M459.5 758.5v3M460.5 757.5v3M461.5 758.5v2M463.5 758.5v2M465.5 756.5h3M466.5 758.5h3M466.5 759.5h2M465.5 760.5h3M465.5 761.5h4M467.5 757.5v3M469.5 756.5v5M472.5 756.5h3M471.5 757.5h3M472.5 760.5h3M471.5 757.5v3M477.5 757.5h3M477.5 758.5h3M477.5 760.5h4M478.5 761.5h2M477.5 758.5v2M479.5 756.5v4M480.5 758.5v2M483.5 756.5h3M483.5 757.5h2M483.5 760.5h3M483.5 761.5h2M482.5 757.5v3M483.5 757.5v3M484.5 758.5v3M486.5 756.5v4M489.5 756.5h3M489.5 757.5h2M489.5 758.5h3M488.5 759.5h4M489.5 760.5h2M488.5 761.5h4M488.5 756.5v5M489.5 758.5v2M491.5 757.5v3M495.5 756.5h2M494.5 758.5h4M495.5 759.5h3M495.5 760.5h3M495.5 761.5h2M494.5 757.5v4M501.5 757.5h3M501.5 758.5h2M500.5 760.5h4M500.5 757.5v3M501.5 758.5v2M504.5 757.5v4M506.5 757.5h3M506.5 758.5h2M506.5 759.5h2M506.5 758.5v2M508.5 757.5v4M509.5 756.5v4M511.5 756.5h4M511.5 757.5h4M512.5 760.5h2M512.5 761.5h2M511.5 758.5v3M513.5 757.5v4M518.5 757.5h2M517.5 758.5h4M518.5 759.5h3M518.5 760.5h3M518.5 761.5h2M518.5 758.5v3M520.5 756.5v5M521.5 757.5v4M524.5 757.5h2M523.5 758.5h3M524.5 759.5h2M523.5 761.5h4M523.5 758.5v3M524.5 757.5v4M526.5 756.5v5M527.5 757.5v3" stroke="#ffffff" fill="none" stroke-linecap="square"/>
<path d="M529.5 756.5v2M531.5 756.5v2M537.5 756.5v5l-1 1h-2l-1-1M538.5 759.5h3l1 1v1l-1 1h-3v-6h3l1 1v1l-1 1M543.5 762.5l4-6M548.5 756.5h3M550.5 756.5v6M555.5 762.5v-6l-2 4h3M557.5 756.5h4v1l-3 5M562.5 757.5l2-1v6M566.5 757.5l1-1v6M570.5 759.5h4M575.5 757.5l1-1h1l1 1v1l-3 4h3M580.5 756.5h2l1 1v4l-1 1h-2v-1v-4zM585.5 756.5h2l1 1v4l-1 1h-2l-1-1v-4zM589.5 757.5l1-1h2l1 1v1l-1 1h-1M592.5 759.5l1 1v1l-1 1h-2l-1-1M595.5 756.5v2M597.5 756.5v2" stroke="#ffffff" fill="none" stroke-linecap="square"/>
<path d="M600.5 756.5h2M599.5 757.5h3M600.5 760.5h3M600.5 761.5h2M600.5 756.5v5M601.5 758.5v2M605.5 757.5h4M605.5 758.5h4M605.5 759.5h4M606.5 760.5h2M606.5 761.5h2M607.5 756.5v5M608.5 756.5v4M609.5 756.5v4M611.5 756.5h3M610.5 757.5h4M610.5 758.5h3M610.5 759.5h3M610.5 760.5h3M610.5 761.5h3M610.5 757.5v3M613.5 756.5v5M614.5 756.5v5M616.5 756.5h4M616.5 757.5h3M616.5 758.5h4M616.5 759.5h4M617.5 756.5v5M623.5 756.5h2M622.5 759.5h4M623.5 761.5h3M623.5 757.5v4M625.5 758.5v3M626.5 756.5v5M628.5 756.5h3M628.5 757.5h3M629.5 759.5h2M628.5 760.5h3M628.5 761.5h3M629.5 757.5v4M634.5 756.5h2M633.5 757.5h3M634.5 758.5h2M633.5 759.5h4M634.5 760.5h2M633.5 761.5h4M633.5 757.5v3M634.5 757.5v4M635.5 756.5v4M636.5 757.5v4M639.5 756.5h4M640.5 758.5h2M640.5 761.5h3M643.5 757.5v4M645.5 757.5h3M646.5 758.5h3M645.5 759.5h4M645.5 760.5h4M645.5 758.5v2M647.5 757.5v4M649.5 758.5v2M651.5 756.5h3M651.5 757.5h4M651.5 758.5h3M652.5 760.5h2M652.5 761.5h3M652.5 757.5v4M653.5 758.5v3M655.5 757.5v4M656.5 756.5h3M657.5 757.5h3M656.5 760.5h4M656.5 761.5h3M656.5 757.5v4M657.5 757.5v4M658.5 756.5v5M659.5 757.5v3M663.5 756.5h2M662.5 758.5h3M663.5 759.5h2M662.5 760.5h4M662.5 761.5h4M664.5 758.5v2M665.5 758.5v3M668.5 759.5h4M669.5 760.5h3M669.5 761.5h2M668.5 756.5v5M669.5 758.5v3M670.5 756.5v4M671.5 758.5v2M674.5 756.5h4M675.5 757.5h3M675.5 760.5h3M674.5 761.5h4M675.5 758.5v3M677.5 756.5v5" stroke="#ffffff" fill="none" stroke-linecap="square"/>
<path d="M459.5 769.5h2M458.5 770.5h3M459.5 771.5h1M459.5 772.5h1M458.5 773.5h2M459.5 774.5h1M458.5 770.5v4M463.5 769.5h3M463.5 770.5h2M464.5 771.5h1M464.5 773.5h1M464.5 774.5h1M463.5 770.5v3M465.5 769.5v4M466.5 770.5v4M468.5 770.5h1M467.5 771.5h2M468.5 772.5h2M467.5 773.5h2M468.5 771.5v3M469.5 769.5v5M470.5 770.5v4M472.5 769.5h2M471.5 770.5h3M471.5 771.5h3M472.5 772.5h1M472.5 774.5h2M472.5 769.5v5M473.5 771.5v2M475.5 769.5h3M475.5 771.5h3M476.5 772.5h2M476.5 773.5h2M476.5 774.5h2M475.5 771.5v2M476.5 770.5v4M480.5 769.5h2M481.5 772.5h2M481.5 773.5h2M480.5 771.5v3M482.5 771.5v2M483.5 771.5v3M484.5 769.5h3M485.5 770.5h1M485.5 771.5h1M484.5 773.5h3M485.5 774.5h2M486.5 771.5v3M487.5 769.5v5M488.5 770.5h2M488.5 771.5h3M488.5 772.5h3M488.5 773.5h3M488.5 774.5h3M490.5 769.5v5M493.5 769.5h2M493.5 771.5h1M492.5 774.5h2M493.5 770.5v3M494.5 770.5v3M495.5 771.5v3M496.5 769.5h2M496.5 771.5h2M496.5 773.5h3M496.5 774.5h2M497.5 770.5v4M502.5 769.5h2M501.5 770.5h3M502.5 771.5h2M501.5 773.5h2M501.5 769.5v5M502.5 771.5v3M503.5 770.5v3M505.5 769.5h2M505.5 770.5h3M505.5 771.5h2M506.5 772.5h2M506.5 774.5h1M506.5 770.5v4M508.5 771.5v2M510.5 769.5h2M510.5 770.5h1M510.5 771.5h1M509.5 772.5h3M510.5 773.5h1M509.5 774.5h2M514.5 769.5h2M514.5 771.5h2M514.5 772.5h2M514.5 773.5h1M515.5 770.5v4M518.5 771.5h3M518.5 772.5h2M519.5 773.5h2M518.5 774.5h3M518.5 770.5v3M519.5 771.5v2M520.5 770.5v4M522.5 769.5h2M523.5 770.5h2M522.5 772.5h3M522.5 773.5h2M523.5 774.5h2M522.5 771.5v2M523.5 771.5v2M527.5 769.5h1M527.5 771.5h1M526.5 772.5h2M527.5 773.5h2M527.5 774.5h2M526.5 770.5v3M527.5 769.5v5M528.5 770.5v4M531.5 770.5h1M530.5 771.5h3M531.5 772.5h1M530.5 773.5h2M530.5 774.5h2M531.5 770.5v4M532.5 770.5v3M534.5 769.5h3M534.5 770.5h2M534.5 771.5h3M534.5 773.5h3M534.5 774.5h2M536.5 770.5v3M537.5 769.5v4M540.5 769.5h2M540.5 770.5h2M540.5 771.5h2M539.5 773.5h2M540.5 774.5h1M539.5 770.5v4M540.5 771.5v3M541.5 769.5v4M542.5 769.5v5M543.5 769.5h2M543.5 770.5h3M544.5 773.5h2M544.5 770.5v3M546.5 771.5v3M548.5 769.5h1M548.5 772.5h1M547.5 774.5h3M548.5 771.5v3M550.5 770.5v3M551.5 770.5h3M551.5 771.5h2M551.5 772.5h2M551.5 773.5h3M551.5 774.5h3M553.5 771.5v2M554.5 771.5v3M556.5 769.5h2M555.5 770.5h3M556.5 771.5h2M555.5 772.5h3M556.5 773.5h1M555.5 770.5v3M558.5 771.5v3M561.5 770.5h2M560.5 772.5h3M561.5 773.5h2M560.5 774.5h3M562.5 771.5v3M563.5 770.5v4M564.5 771.5h3M564.5 772.5h3M564.5 773.5h2M565.5 774.5h1M564.5 771.5v3M565.5 769.5v4M566.5 770.5v4M567.5 771.5v3M569.5 769.5h2M568.5 770.5h2M568.5 771.5h3M569.5 773.5h2M568.5 774.5h2M570.5 769.5v4M571.5 769.5v5M573.5 769.5h2M572.5 770.5h3M572.5 773.5h2M573.5 774.5h1M572.5 770.5v3M573.5 770.5v4M574.5 771.5v3M575.5 769.5v4" stroke="#ffffff" fill="none" stroke-linecap="square"/>
<path d="M453.5 778.5h2l1 1v1l-1 2h-2l-1-2v-1zM453.5 782.5l-1 1v1l1 1h2l1-1v-1l-1-1M457.5 785.5h0" stroke="#ffffff" fill="none" stroke-linecap="square"/>
<path d="M460.5 779.5h2M459.5 781.5h3M459.5 782.5h2M459.5 783.5h3M460.5 784.5h1M459.5 780.5v4M460.5 781.5v3M462.5 781.5v2M465.5 780.5h2M464.5 781.5h3M465.5 782.5h2M464.5 783.5h2M465.5 784.5h2M465.5 780.5v3M466.5 779.5v4M468.5 779.5h3M468.5 782.5h2M468.5 783.5h3M468.5 780.5v4M471.5 780.5v4M474.5 780.5h1M473.5 782.5h2M474.5 783.5h2M474.5 781.5v3M475.5 779.5v4M476.5 781.5v2M478.5 779.5h1M477.5 780.5h2M478.5 782.5h2M477.5 784.5h2M477.5 779.5v4M478.5 779.5v4M479.5 779.5v5M480.5 779.5v5M481.5 781.5h3M481.5 782.5h2M481.5 783.5h3M482.5 784.5h2M483.5 780.5v3M484.5 780.5v4M487.5 780.5h1M486.5 781.5h3M486.5 783.5h3M487.5 784.5h2M487.5 779.5v5M488.5 781.5v2M489.5 780.5v4M490.5 779.5h3M491.5 780.5h1M490.5 781.5h2M491.5 783.5h1M490.5 779.5v5M491.5 779.5v4M492.5 779.5v5M493.5 780.5v4M495.5 779.5h2M496.5 780.5h1M496.5 781.5h1M496.5 782.5h1M496.5 783.5h1M495.5 784.5h2M495.5 779.5v5M497.5 781.5v2M498.5 780.5v3M499.5 779.5h3M500.5 780.5h1M500.5 781.5h1M500.5 782.5h1M500.5 783.5h1M502.5 780.5v4" stroke="#ffffff" fill="none" stroke-linecap="square"/>
<path d="M452.5 798.5h2M452.5 799.5h2M453.5 800.5h1M452.5 801.5h3M455.5 798.5v2M457.5 796.5h2M456.5 797.5h3M457.5 799.5h2M457.5 801.5h1M461.5 796.5h2M460.5 797.5h3M460.5 801.5h2M465.5 797.5h2M464.5 798.5h3M464.5 799.5h3M465.5 800.5h1M467.5 796.5v4M469.5 796.5h2M468.5 797.5h3M468.5 798.5h3M468.5 799.5h2M469.5 800.5h2M469.5 796.5v5M471.5 798.5v3M472.5 796.5h2M473.5 797.5h1M473.5 798.5h2M473.5 799.5h1M472.5 801.5h2M472.5 797.5v3M474.5 797.5v4M477.5 796.5h1M476.5 798.5h2M477.5 799.5h2M476.5 800.5h2M476.5 801.5h2M476.5 796.5v5M478.5 797.5v3M480.5 796.5h2M481.5 797.5h2M481.5 798.5h2M480.5 800.5h2M480.5 796.5v4M481.5 798.5v2M482.5 797.5v3M485.5 797.5h1M484.5 800.5h3M487.5 796.5v5M488.5 796.5h2M488.5 797.5h2M488.5 798.5h3M489.5 799.5h1M488.5 800.5h2M488.5 801.5h2M488.5 796.5v5M489.5 798.5v3M490.5 798.5v3M492.5 797.5h2M493.5 798.5h2M493.5 801.5h2M492.5 797.5v4M493.5 796.5v4M494.5 797.5v3M495.5 798.5v2M497.5 797.5h2M496.5 798.5h3M496.5 799.5h2M496.5 800.5h2M496.5 798.5v2M497.5 797.5v4M498.5 797.5v4M499.5 798.5v3" stroke="#ffffff" fill="none" stroke-linecap="square"/>
<path d="M461.5 622.5h3M460.5 623.5h3M461.5 626.5h3M461.5 627.5h2M460.5 628.5h3M461.5 622.5v5M462.5 623.5v3M463.5 622.5v4M464.5 622.5h3M465.5 623.5h2M464.5 625.5h4M464.5 627.5h4M464.5 628.5h3M464.5 622.5v4M466.5 624.5v4M468.5 624.5v3M470.5 623.5h3M470.5 624.5h4M471.5 625.5h2M470.5 623.5v4M475.5 622.5h3M474.5 623.5h3M474.5 624.5h3M474.5 625.5h4M475.5 626.5h3M475.5 627.5h2M475.5 628.5h2M475.5 624.5v3M477.5 622.5v6M478.5 623.5v4" stroke="#ffffff" fill="none" stroke-linecap="square"/>
<line x1="118" y1="653.5" x2="161" y2="653.5" stroke="#ffffff" stroke-width="1"/>
<line x1="137.5" y1="646" x2="137.5" y2="651" stroke="#ffffff" stroke-width="1"/>
<path d="M125.5 657.5h1M125.5 657.5v2M126.5 657.5v3M132.5 659.5h2M132.5 660.5h2M134.5 657.5v2M138.5 659.5h3M138.5 657.5v2M141.5 656.5v4M146.5 656.5h3M146.5 656.5v4M147.5 657.5v2" stroke="#ffffff" fill="none" stroke-linecap="square"/>
<path d="M175.5 662.5v-7l-3 5h5M179.5 655.5h2l1 1v1l-1 1h-2l-1-1v-1zM179.5 658.5l-1 2v1l1 1h2l1-1v-1l-1-2" stroke="#00ff00" fill="none" stroke-linecap="square"/>
<line x1="170" y1="665.5" x2="187" y2="665.5" stroke="#00ffff" stroke-width="1"/>
<line x1="170" y1="665.5" x2="143" y2="698.5" stroke="#00ffff" stroke-width="1"/>
<path d="M121.5 670.5h1l1 1v2l-1 1h-1l-1-1v-2zM122.5 668.5v8M126.5 669.5h-1l-1 1v4l1 1h1l1-1v-1l-1-1h-2M128.5 670.5v-1h1l1 1v1l-1 1h0M129.5 672.5l1 1v1l-1 1h-1v-1M131.5 675.5h0M133.5 669.5h2v1l-2 5M136.5 670.5l1-1h1l1 1v1l-1 1h0M138.5 672.5l1 1v1l-1 1h-1l-1-1M140.5 675.5h0M142.5 670.5v-1h2v1v1v1h-1M144.5 672.5v1v1v1h-2v-1M145.5 675.5h0M149.5 669.5h-1l-1 1v4l1 1h1l1-1v-1l-1-1h-2M153.5 669.5h-3v3h2l1 1v1l-1 1h-2" stroke="#00ff00" fill="none" stroke-linecap="square"/>
<line x1="118" y1="676.5" x2="161" y2="676.5" stroke="#00ffff" stroke-width="1"/>
<line x1="118.5" y1="674" x2="118.5" y2="693" stroke="#00ffff" stroke-width="1"/>
<line x1="160.5" y1="674" x2="160.5" y2="693" stroke="#00ffff" stroke-width="1"/>
<line x1="131.5" y1="675" x2="131.5" y2="708" stroke="#00ffff" stroke-width="2"/>
<line x1="147.5" y1="675" x2="147.5" y2="708" stroke="#00ffff" stroke-width="2"/>
<rect x="118" y="693" width="43" height="7" fill="url(#h3)"/>
<polygon points="117,702 162,702 170,704.5 182,708 192,711 192,712 87,712 87,711 97,708 109,704.5" fill="url(#h3)"/>
<rect x="129" y="712" width="21" height="48" fill="url(#h3)"/>
<path d="M129,712 L129,760 M150,712 L150,760" stroke="#ffffff" stroke-width="1" fill="none"/>
<g stroke="#000" stroke-width="2"><line x1="129" y1="716" x2="150" y2="737"/><line x1="129" y1="728" x2="150" y2="749"/><line x1="129" y1="740" x2="150" y2="761"/></g>
<path d="M113,708 L118,703 M116,709 L121,704" stroke="#000" stroke-width="1" fill="none"/>
<line x1="117" y1="698.5" x2="165" y2="698.5" stroke="#ff0000" stroke-width="1"/>
<rect x="135.5" y="693.5" width="8" height="12.5" stroke="#ffffff" stroke-width="1" fill="none"/>
<line x1="139.5" y1="694" x2="139.5" y2="706" stroke="#ffffff" stroke-width="1"/>
<line x1="135.5" y1="699.5" x2="143.5" y2="699.5" stroke="#ffffff" stroke-width="1"/>
<rect x="130" y="709" width="3" height="3" fill="#ffffff"/>
<rect x="146" y="709" width="3" height="3" fill="#ffffff"/>
<line x1="87.5" y1="712" x2="87.5" y2="759.5" stroke="#ffffff" stroke-width="1" stroke-dasharray="5,3"/>
<line x1="87.5" y1="759.5" x2="191.5" y2="759.5" stroke="#ffffff" stroke-width="1" stroke-dasharray="5,3"/>
<line x1="191.5" y1="712" x2="191.5" y2="759.5" stroke="#ffffff" stroke-width="1" stroke-dasharray="5,3"/>
<line x1="182.5" y1="712" x2="182.5" y2="759.5" stroke="#ffffff" stroke-width="1"/>
<path d="M89,705 L95,719 L101,705" stroke="#00ffff" stroke-width="1" fill="none"/>
<rect x="94" y="710" width="3" height="3" fill="#ffffff"/>
<path d="M93.5 718.5h4M92.5 719.5h5M92.5 721.5h4M92.5 719.5v2M93.5 719.5v1M95.5 719.5v1M96.5 719.5v2" stroke="#00ff00" fill="none" stroke-linecap="square"/>
<path d="M177,705 L183,719 L189,705" stroke="#00ffff" stroke-width="1" fill="none"/>
<rect x="182" y="710" width="3" height="3" fill="#ffffff"/>
<path d="M180.5 718.5h4M182.5 719.5h3M180.5 719.5v1M183.5 718.5v2M184.5 718.5v3" stroke="#00ff00" fill="none" stroke-linecap="square"/>
<g transform="rotate(-90 83 712)"><path d="M82.5 710.5h-3v2h2h1v1l-1 1h-2M83.5 710.5h1h1h1v1l-3 3h3" stroke="#00ff00" fill="none" stroke-linecap="square"/></g>
<line x1="85" y1="706.5" x2="97" y2="706.5" stroke="#00ffff" stroke-width="1"/>
<line x1="86.5" y1="702" x2="86.5" y2="712" stroke="#00ffff" stroke-width="1"/>
<path d="M88.5 702.5h2M88.5 703.5h2M88.5 704.5h2M89.5 705.5h1M88.5 703.5v2M89.5 703.5v1M90.5 702.5v2M92.5 702.5h2M93.5 703.5h1M93.5 704.5h1M92.5 705.5h2M92.5 703.5v1" stroke="#00ff00" fill="none" stroke-linecap="square"/>
<path d="M48,694 L56,704 L63,694 M56,704 L56,716" stroke="#ffffff" stroke-width="1" fill="none"/>
<line x1="55.5" y1="704" x2="55.5" y2="716" stroke="#ffffff" stroke-width="2"/>
<path d="M53,730 L46.5,749.5 L60,749.5 Z M53,730 L53,749" stroke="#ffffff" stroke-width="1" fill="none"/>
<line x1="54.5" y1="750" x2="54.5" y2="829" stroke="#ffffff" stroke-width="1.5"/>
<rect x="45.5" y="821.5" width="16" height="16" stroke="#ffffff" stroke-width="1" fill="none"/>
<line x1="53.5" y1="821" x2="53.5" y2="838" stroke="#ffffff" stroke-width="1"/>
<line x1="45.5" y1="829.5" x2="61.5" y2="829.5" stroke="#ffffff" stroke-width="1"/>
<path d="M133,822 L153,829.5 L133,837 Z M133,826 L151,829.5 M133,833 L151,829.5" stroke="#ffffff" stroke-width="1" fill="none"/>
<path d="M171,820 L186,840 M186,820 L171,840" stroke="#ffffff" stroke-width="1" fill="none"/>
<path d="M300.5 648.5h2M300.5 649.5h2M300.5 650.5h2M301.5 651.5h1M301.5 652.5h1M301.5 649.5v4" stroke="#ffffff" fill="none" stroke-linecap="square"/>
<line x1="274.5" y1="657.5" x2="331" y2="657.5" stroke="#ffffff" stroke-width="1"/>
<path d="M285.5 661.5h1M286.5 660.5v4M287.5 662.5v2M294.5 661.5h2M293.5 663.5h3M293.5 664.5h3M294.5 660.5v4M295.5 661.5v3M296.5 661.5v3M302.5 660.5h2M302.5 664.5h3M302.5 665.5h2M302.5 661.5v3M303.5 662.5v3M305.5 660.5v4M312.5 660.5h2M312.5 661.5h2M311.5 663.5h2M312.5 664.5h2M314.5 662.5v3" stroke="#ffffff" fill="none" stroke-linecap="square"/>
<rect x="300" y="692" width="30" height="40" fill="url(#h2)"/>
<rect x="285.5" y="692.5" width="14.5" height="39" stroke="#ffffff" stroke-width="1" fill="none" stroke-dasharray="4,3"/>
<line x1="300.5" y1="692" x2="300.5" y2="732" stroke="#ffffff" stroke-width="1"/>
<line x1="300.5" y1="692.5" x2="329.5" y2="692.5" stroke="#ffffff" stroke-width="1" stroke-dasharray="5,2"/>
<line x1="329.5" y1="692.5" x2="329.5" y2="731.5" stroke="#ffffff" stroke-width="1" stroke-dasharray="5,2"/>
<line x1="300.5" y1="731.5" x2="329.5" y2="731.5" stroke="#ffffff" stroke-width="1"/>
<rect x="285" y="703" width="29" height="18" fill="#000"/>
<line x1="285.5" y1="703.5" x2="313" y2="703.5" stroke="#ffffff" stroke-width="1"/>
<line x1="285.5" y1="706.5" x2="313" y2="706.5" stroke="#ffffff" stroke-width="1"/>
<line x1="285.5" y1="717.5" x2="313" y2="717.5" stroke="#ffffff" stroke-width="1"/>
<line x1="285.5" y1="720.5" x2="313" y2="720.5" stroke="#ffffff" stroke-width="1"/>
<path d="M313,706 L316,711.5 L313,717.5 M313,703.5 L313,720.5" stroke="#ffffff" stroke-width="1" fill="none"/>
<line x1="286" y1="704.5" x2="300" y2="704.5" stroke="#ffff00" stroke-width="1" stroke-dasharray="2,3"/>
<line x1="286" y1="719.5" x2="300" y2="719.5" stroke="#ffff00" stroke-width="1" stroke-dasharray="2,3"/>
<line x1="268" y1="711.5" x2="330" y2="711.5" stroke="#ff0000" stroke-width="1" stroke-dasharray="8,2"/>
<line x1="263" y1="703.5" x2="285" y2="703.5" stroke="#00ffff" stroke-width="1"/>
<line x1="263" y1="720.5" x2="285" y2="720.5" stroke="#00ffff" stroke-width="1"/>
<line x1="266.5" y1="672.7" x2="266.5" y2="720.5" stroke="#00ffff" stroke-width="1"/>
<g transform="rotate(-90 262 688)"><path d="M251.5 686.5h1M251.5 687.5h2M251.5 689.5h1M255.5 686.5h2M255.5 687.5h1M254.5 688.5h2M254.5 689.5h2M257.5 687.5v1M259.5 686.5h1M259.5 688.5h1M263.5 686.5h2M262.5 687.5h2M263.5 688.5h1M262.5 689.5h2M263.5 686.5v2M266.5 686.5h2M267.5 688.5h1M267.5 689.5h1M267.5 686.5v2M268.5 687.5v2M270.5 686.5h3M270.5 688.5h3M271.5 689.5h2M270.5 686.5v3M271.5 686.5v3" stroke="#00ff00" fill="none" stroke-linecap="square"/></g>
<line x1="279.5" y1="706" x2="279.5" y2="717" stroke="#00ffff" stroke-width="1"/>
<g transform="rotate(-90 275 712)"><path d="M271.5 710.5h1l1 1v1l-1 1h-1v-1v-1zM272.5 709.5v5M274.5 710.5v-1v5M277.5 709.5h1v1v1v1h-1l-1-1v-1zM277.5 712.5h-1v1l1 1h1v-1v-1h0" stroke="#00ff00" fill="none" stroke-linecap="square"/></g>
<line x1="300.5" y1="732" x2="300.5" y2="767" stroke="#00ffff" stroke-width="1"/>
<line x1="312.5" y1="720" x2="312.5" y2="745" stroke="#00ffff" stroke-width="1"/>
<line x1="313.5" y1="720" x2="313.5" y2="754" stroke="#00ffff" stroke-width="1"/>
<line x1="315.5" y1="720" x2="315.5" y2="767" stroke="#00ffff" stroke-width="1"/>
<line x1="300.5" y1="743.5" x2="315.5" y2="743.5" stroke="#00ffff" stroke-width="1"/>
<line x1="300.5" y1="753.5" x2="315.5" y2="753.5" stroke="#00ffff" stroke-width="1"/>
<line x1="300.5" y1="764.5" x2="315.5" y2="764.5" stroke="#00ffff" stroke-width="1"/>
<path d="M302.5 737.5l2-1v6M306.5 736.5h2l1 1v1l-1 1h-2v-1v-1zM306.5 739.5v1v1v1h2l1-1v-1l-1-1" stroke="#00ff00" fill="none" stroke-linecap="square"/>
<path d="M304.5 747.5v-1h2v1v1l-2 4h2M308.5 746.5h2v1v4v1h-2v-1v-4z" stroke="#00ff00" fill="none" stroke-linecap="square"/>
<path d="M304.5 756.5h1h2h1v2l-4 4h4M308.5 756.5h1h2h1v2l-4 4h4" stroke="#00ff00" fill="none" stroke-linecap="square"/>
<rect x="541" y="126" width="2" height="2" fill="#00ffff"/>
<rect x="500" y="142" width="2" height="2" fill="#00ffff"/>
<rect x="428" y="154" width="2" height="2" fill="#00ffff"/>
<rect x="203" y="126" width="2" height="2" fill="#00ffff"/>
<rect x="203" y="142" width="2" height="2" fill="#00ffff"/>
<rect x="203" y="154" width="2" height="2" fill="#00ffff"/>
<rect x="338" y="308" width="2" height="2" fill="#00ffff"/>
<rect x="386" y="308" width="2" height="2" fill="#00ffff"/>
<rect x="434" y="308" width="2" height="2" fill="#00ffff"/>
<rect x="482" y="308" width="2" height="2" fill="#00ffff"/>
<rect x="341" y="308" width="2" height="2" fill="#00ffff"/>
<rect x="389" y="308" width="2" height="2" fill="#00ffff"/>
<rect x="438" y="308" width="2" height="2" fill="#00ffff"/>
<rect x="479" y="308" width="2" height="2" fill="#00ffff"/>
<rect x="226" y="392" width="2" height="2" fill="#00ffff"/>
<rect x="242" y="392" width="2" height="2" fill="#00ffff"/>
<rect x="256" y="392" width="2" height="2" fill="#00ffff"/>
<rect x="364" y="392" width="2" height="2" fill="#00ffff"/>
<rect x="468" y="392" width="2" height="2" fill="#00ffff"/>
<rect x="500" y="392" width="2" height="2" fill="#00ffff"/>
<rect x="228" y="406" width="2" height="2" fill="#00ffff"/>
<rect x="256" y="406" width="2" height="2" fill="#00ffff"/>
<rect x="386" y="406" width="2" height="2" fill="#00ffff"/>
<rect x="228" y="270" width="2" height="2" fill="#00ffff"/>
<rect x="272" y="270" width="2" height="2" fill="#00ffff"/>
<rect x="386" y="270" width="2" height="2" fill="#00ffff"/>
<rect x="190" y="204" width="2" height="2" fill="#00ffff"/>
<rect x="228" y="204" width="2" height="2" fill="#00ffff"/>
<rect x="276" y="196" width="2" height="2" fill="#00ffff"/>
<rect x="276" y="204" width="2" height="2" fill="#00ffff"/>
<rect x="162" y="294" width="2" height="2" fill="#00ffff"/>
<rect x="156" y="276" width="2" height="2" fill="#00ffff"/>
<rect x="156" y="338" width="2" height="2" fill="#00ffff"/>
<rect x="172" y="284" width="2" height="2" fill="#00ffff"/>
<rect x="172" y="298" width="2" height="2" fill="#00ffff"/>
<rect x="700" y="178" width="2" height="2" fill="#00ffff"/>
<rect x="714" y="178" width="2" height="2" fill="#00ffff"/>
<rect x="736" y="178" width="2" height="2" fill="#00ffff"/>
<rect x="714" y="248" width="2" height="2" fill="#00ffff"/>
<rect x="728" y="248" width="2" height="2" fill="#00ffff"/>
<rect x="656" y="390" width="2" height="2" fill="#00ffff"/>
<rect x="714" y="390" width="2" height="2" fill="#00ffff"/>
<rect x="772" y="390" width="2" height="2" fill="#00ffff"/>
<rect x="654" y="410" width="2" height="2" fill="#00ffff"/>
<rect x="774" y="410" width="2" height="2" fill="#00ffff"/>
<rect x="700" y="374" width="2" height="2" fill="#00ffff"/>
<rect x="714" y="374" width="2" height="2" fill="#00ffff"/>
<rect x="728" y="374" width="2" height="2" fill="#00ffff"/>
<rect x="628" y="284" width="2" height="2" fill="#00ffff"/>
<rect x="628" y="338" width="2" height="2" fill="#00ffff"/>
<rect x="628" y="348" width="2" height="2" fill="#00ffff"/>
<rect x="628" y="366" width="2" height="2" fill="#00ffff"/>
<rect x="796" y="284" width="2" height="2" fill="#00ffff"/>
<rect x="796" y="338" width="2" height="2" fill="#00ffff"/>
<rect x="810" y="284" width="2" height="2" fill="#00ffff"/>
<rect x="810" y="366" width="2" height="2" fill="#00ffff"/>
<rect x="568" y="284" width="2" height="2" fill="#00ffff"/>
<rect x="568" y="334" width="2" height="2" fill="#00ffff"/>
<rect x="554" y="318" width="2" height="2" fill="#00ffff"/>
<rect x="554" y="350" width="2" height="2" fill="#00ffff"/>
<rect x="506" y="298" width="2" height="2" fill="#00ffff"/>
<rect x="524" y="298" width="2" height="2" fill="#00ffff"/>
<rect x="178" y="550" width="2" height="2" fill="#00ffff"/>
<rect x="178" y="564" width="2" height="2" fill="#00ffff"/>
<rect x="284" y="542" width="2" height="2" fill="#00ffff"/>
<rect x="284" y="552" width="2" height="2" fill="#00ffff"/>
<rect x="284" y="568" width="2" height="2" fill="#00ffff"/>
<rect x="414" y="558" width="2" height="2" fill="#00ffff"/>
<rect x="414" y="570" width="2" height="2" fill="#00ffff"/>
<rect x="534" y="564" width="2" height="2" fill="#00ffff"/>
<rect x="534" y="580" width="2" height="2" fill="#00ffff"/>
<rect x="484" y="530" width="2" height="2" fill="#00ffff"/>
<rect x="496" y="530" width="2" height="2" fill="#00ffff"/>
<rect x="506" y="530" width="2" height="2" fill="#00ffff"/>
</svg></body></html>
